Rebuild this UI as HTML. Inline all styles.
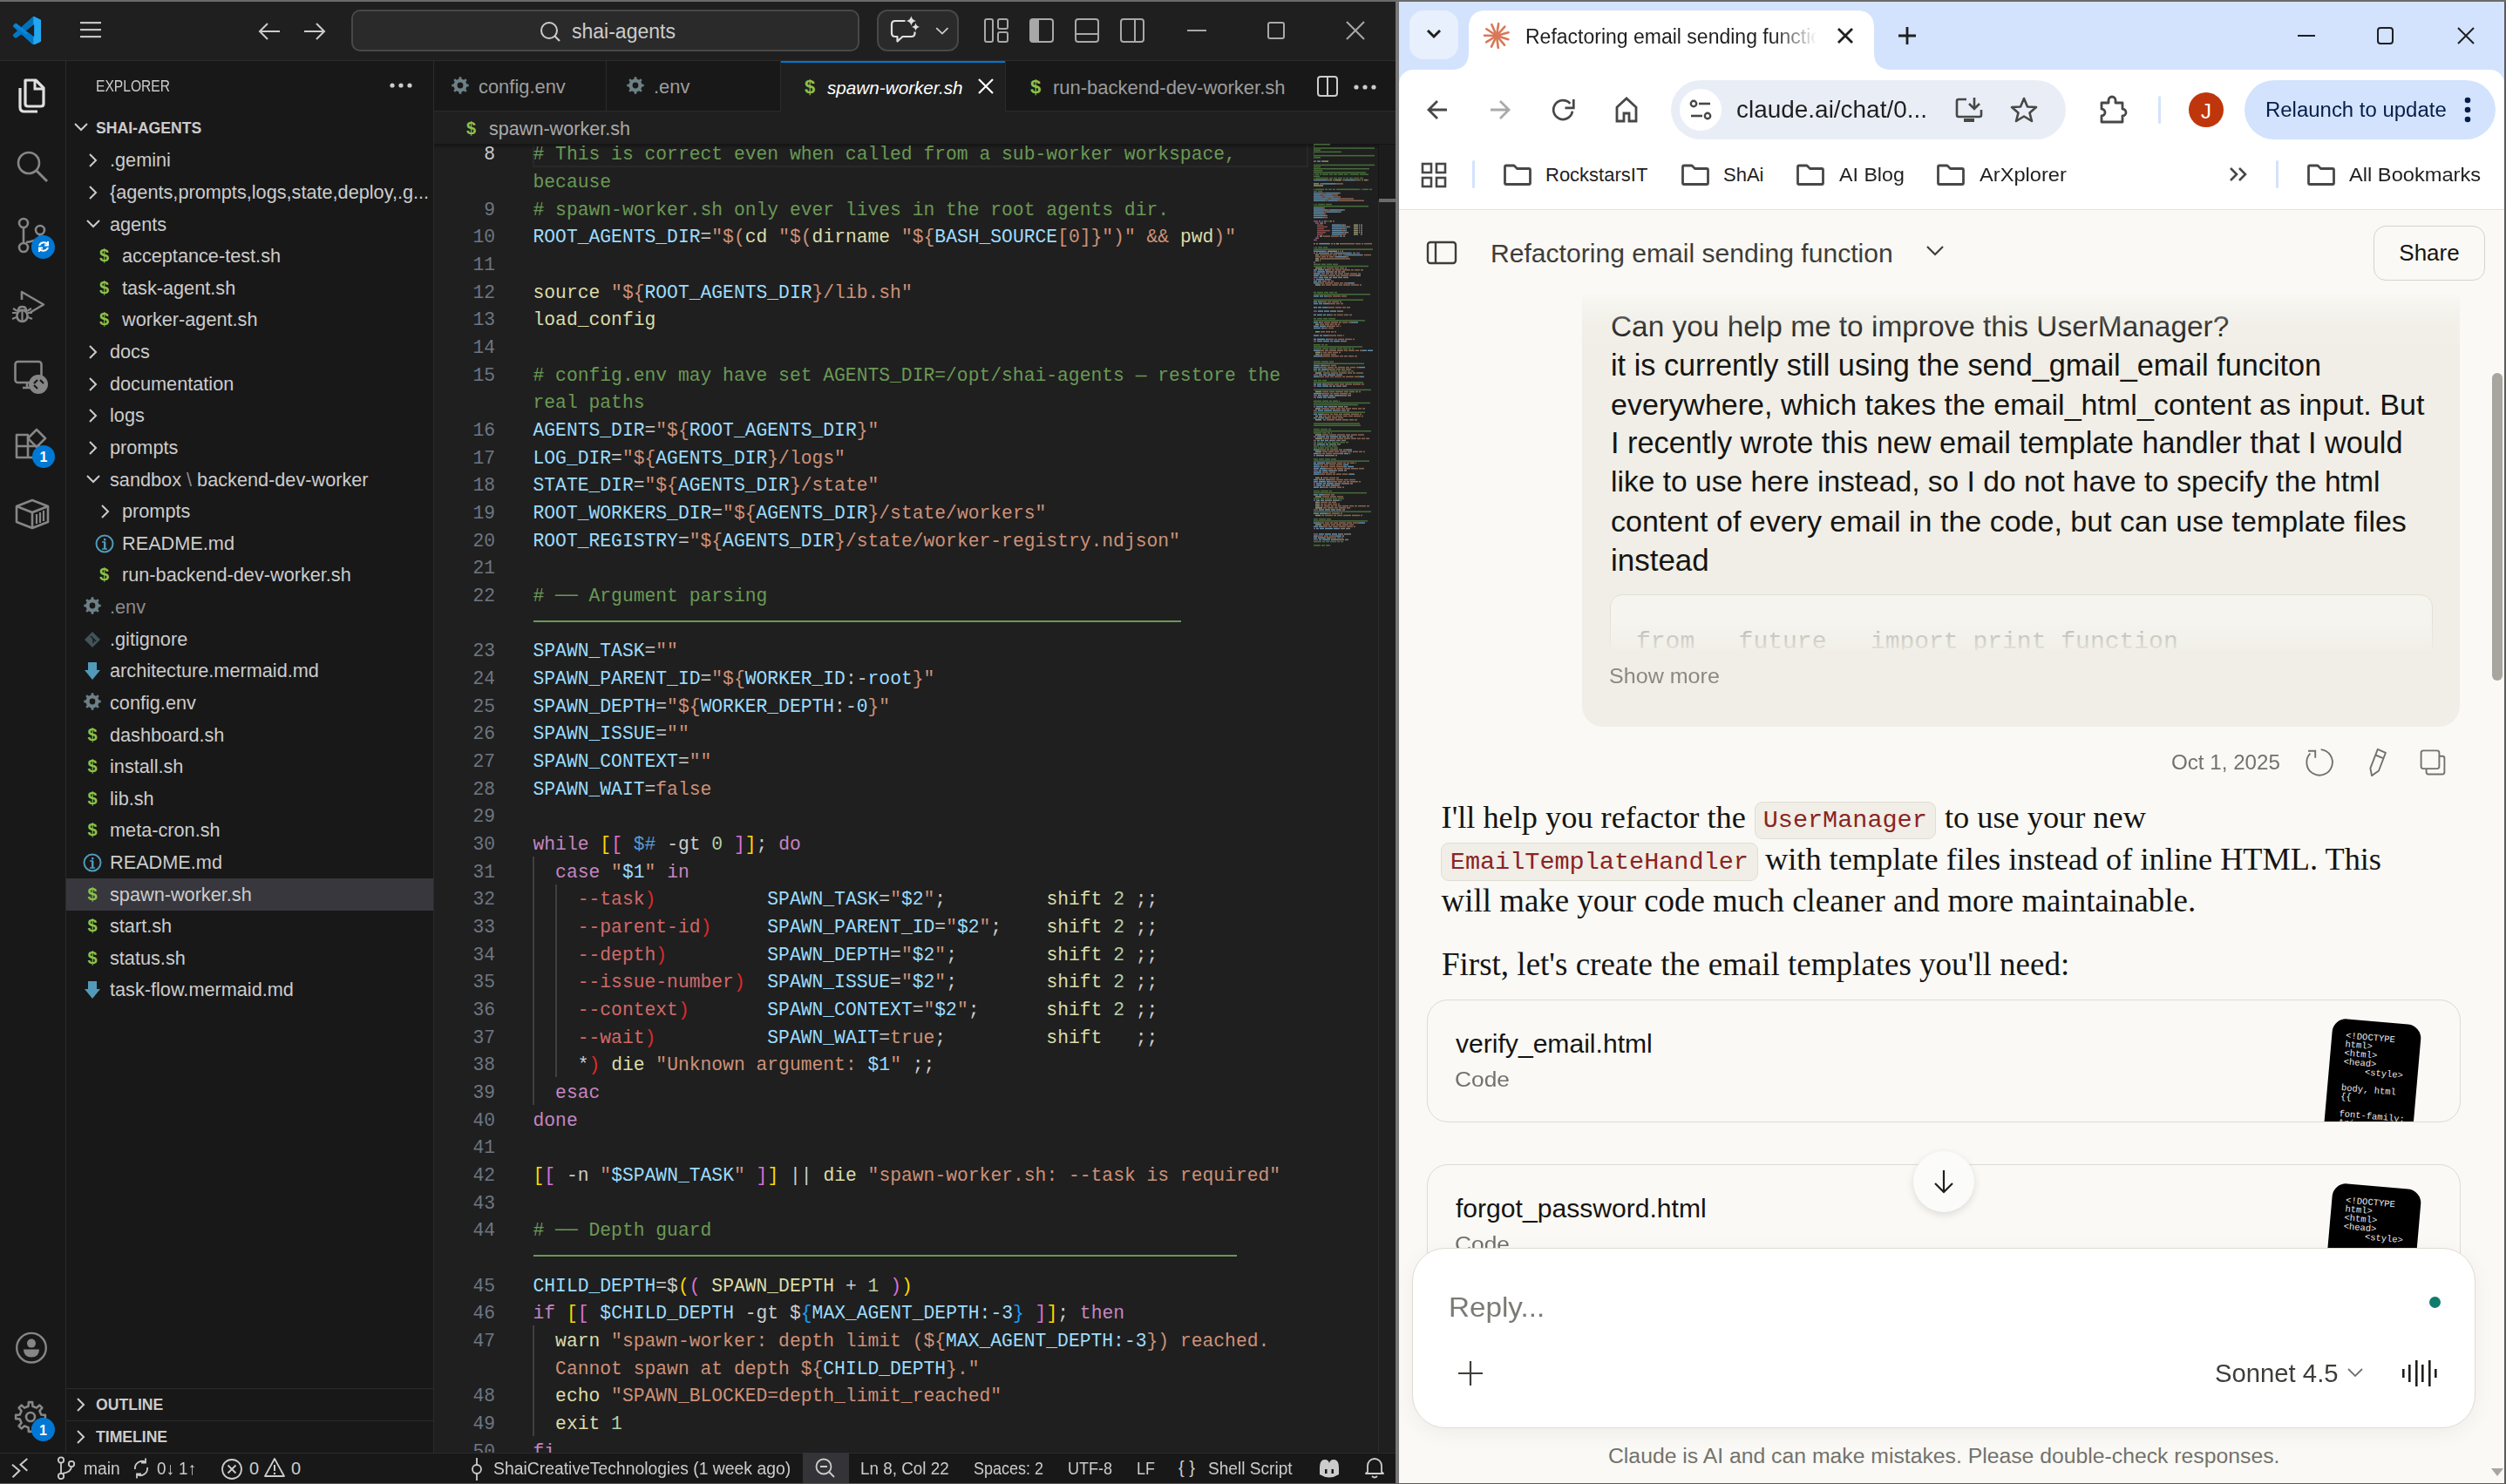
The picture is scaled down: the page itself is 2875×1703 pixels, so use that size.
<!DOCTYPE html><html><head><meta charset="utf-8"><style>
html,body{margin:0;padding:0;width:2875px;height:1703px;overflow:hidden;background:#5b5b5b;}
body{position:relative;font-family:'Liberation Sans',sans-serif;}
div,svg{box-sizing:border-box;}
</style></head><body>
<div style="position:absolute;left:0px;top:2px;width:1601px;height:1700px;background:#181818"></div>
<div style="position:absolute;left:0px;top:2px;width:1601px;height:67px;background:#1f1f1f"></div>
<div style="position:absolute;left:0px;top:69px;width:1601px;height:1px;background:#2b2b2b"></div>
<svg style="position:absolute;left:14.8px;top:18.6px" width="32.4" height="32.4" viewBox="0 0 100 100"><defs><clipPath id="vsc"><path clip-rule="evenodd" d="M70.9 99.3C72.5 99.9 74.3 99.9 75.9 99.1L96.5 89.2C98.6 88.2 100 86 100 83.6V16.4C100 14 98.6 11.8 96.5 10.8L75.9 0.9C73.8-0.1 71.3 0.1 69.5 1.4C69.3 1.6 69 1.8 68.8 2.1L29.4 38L12.2 25C10.6 23.8 8.4 23.9 6.9 25.2L1.4 30.3C-0.5 31.9-0.5 34.8 1.4 36.4L16.2 50L1.4 63.6C-0.5 65.2-0.5 68.1 1.4 69.7L6.9 74.8C8.4 76.1 10.6 76.2 12.2 75L29.4 62L68.8 97.9C69.4 98.5 70.1 99 70.9 99.3ZM75 27.3L45.1 50L75 72.7V27.3Z"/></clipPath></defs><g clip-path="url(#vsc)"><rect width="100" height="100" fill="#0a85d9"/><path d="M0 100 L0 30 L45 64 L75 40 L75 100 Z" fill="#0078c8"/><path d="M0 0 H75 V27 L45 50 L30 38 L12 25 L0 33 Z" fill="#0071b8"/><path d="M72 0 H100 V100 H72 Z" fill="#22a7f0"/></g></svg>
<svg style="position:absolute;left:91px;top:23px;" width="26" height="22" viewBox="0 0 26 22" fill="none"><rect x="1" y="2" width="24" height="2.2" fill="#c4c4c4"/><rect x="1" y="10" width="24" height="2.2" fill="#c4c4c4"/><rect x="1" y="18" width="24" height="2.2" fill="#c4c4c4"/></svg>
<svg style="position:absolute;left:295px;top:24px;" width="28" height="24" viewBox="0 0 28 24" fill="none"><path d="M26 12 H3 M12 3 L3 12 L12 21" stroke="#cccccc" stroke-width="2"/></svg>
<svg style="position:absolute;left:347px;top:24px;" width="28" height="24" viewBox="0 0 28 24" fill="none"><path d="M2 12 H25 M16 3 L25 12 L16 21" stroke="#cccccc" stroke-width="2"/></svg>
<div style="position:absolute;left:403px;top:11px;width:583px;height:48px;background:#2a2a2a;border:2px solid #484848;border-radius:10px"></div>
<svg style="position:absolute;left:617px;top:24px;" width="26" height="26" viewBox="0 0 26 26" fill="none"><circle cx="13" cy="11" r="9" stroke="#cccccc" stroke-width="2"/><path d="M19.5 17.5 L25 23" stroke="#cccccc" stroke-width="2.2"/></svg>
<div style="position:absolute;left:656px;top:21.0px;height:30px;line-height:30px;font-family:'Liberation Sans',sans-serif;font-size:23px;color:#cccccc;white-space:pre;">shai-agents</div>
<div style="position:absolute;left:1006px;top:11px;width:94px;height:48px;background:#2a2a2a;border:2px solid #484848;border-radius:12px"></div>
<svg style="position:absolute;left:1000px;top:5px;" width="110" height="60" viewBox="0 0 110 60" fill="none"><path d="M38.5 19 H27 Q23 19 23 23 V33 Q23 37 27 37 H29.5 V42.5 L35.5 37 H45.5 Q49.5 37 49.5 33 V31.5" stroke="#e0e0e0" stroke-width="2.2" stroke-linejoin="round"/><path d="M45.4 13.299999999999999 Q46.184 18.116 51.0 18.9 Q46.184 19.683999999999997 45.4 24.5 Q44.616 19.683999999999997 39.8 18.9 Q44.616 18.116 45.4 13.299999999999999 Z" fill="#e0e0e0"/><path d="M50.5 21.299999999999997 Q51.144 25.256 55.1 25.9 Q51.144 26.543999999999997 50.5 30.5 Q49.856 26.543999999999997 45.9 25.9 Q49.856 25.256 50.5 21.299999999999997 Z" fill="#e0e0e0"/><path d="M74.2 27.2 L81 33.6 L87.5 27.2" stroke="#cccccc" stroke-width="1.8"/></svg>
<svg style="position:absolute;left:1128px;top:20px;" width="30" height="30" viewBox="0 0 30 30" fill="none"><rect x="2" y="2" width="9" height="26" rx="2" stroke="#a8a8a8" stroke-width="2"/><rect x="17" y="2" width="11" height="11" rx="2" stroke="#a8a8a8" stroke-width="2"/><rect x="17" y="17" width="11" height="11" rx="2" stroke="#a8a8a8" stroke-width="2"/></svg>
<svg style="position:absolute;left:1180px;top:20px;" width="30" height="30" viewBox="0 0 30 30" fill="none"><rect x="2" y="2" width="26" height="26" rx="3" stroke="#a8a8a8" stroke-width="2"/><path d="M3 3 H12 V27 H3 Z" fill="#a8a8a8"/></svg>
<svg style="position:absolute;left:1232px;top:20px;" width="30" height="30" viewBox="0 0 30 30" fill="none"><rect x="2" y="2" width="26" height="26" rx="3" stroke="#a8a8a8" stroke-width="2"/><path d="M2 19 H28" stroke="#a8a8a8" stroke-width="2"/></svg>
<svg style="position:absolute;left:1284px;top:20px;" width="30" height="30" viewBox="0 0 30 30" fill="none"><rect x="2" y="2" width="26" height="26" rx="3" stroke="#a8a8a8" stroke-width="2"/><path d="M18 2 V28" stroke="#a8a8a8" stroke-width="2"/></svg>
<div style="position:absolute;left:1362px;top:34px;width:22px;height:2px;background:#a8a8a8"></div>
<div style="position:absolute;left:1454px;top:25px;width:20px;height:20px;border:2px solid #a8a8a8;border-radius:3px"></div>
<svg style="position:absolute;left:1543px;top:23px;" width="24" height="24" viewBox="0 0 24 24" fill="none"><path d="M2 2 L22 22 M22 2 L2 22" stroke="#a8a8a8" stroke-width="2"/></svg>
<div style="position:absolute;left:75px;top:70px;width:1px;height:1597px;background:#2b2b2b"></div>
<svg style="position:absolute;left:16px;top:88px;" width="40" height="44" viewBox="0 0 40 44" fill="none"><path d="M13 4 H25 L34 13 V31 Q34 34 31 34 H16 Q13 34 13 31 Z" stroke="#e0e0e0" stroke-width="3.2" stroke-linejoin="round"/><path d="M24 4 V14 H34" stroke="#e0e0e0" stroke-width="3"/><path d="M7 13 V35 Q7 40 12 40 H27" stroke="#e0e0e0" stroke-width="3.2"/></svg>
<svg style="position:absolute;left:16px;top:170px;" width="42" height="42" viewBox="0 0 42 42" fill="none"><circle cx="17" cy="17" r="12" stroke="#868686" stroke-width="2.6"/><path d="M26 26 L38 38" stroke="#868686" stroke-width="3"/></svg>
<svg style="position:absolute;left:16px;top:248px;" width="42" height="44" viewBox="0 0 42 44" fill="none"><circle cx="11" cy="8" r="5" stroke="#868686" stroke-width="2.6"/><circle cx="11" cy="36" r="5" stroke="#868686" stroke-width="2.6"/><circle cx="30" cy="16" r="5" stroke="#868686" stroke-width="2.6"/><path d="M11 13 V31 M30 21 Q30 28 14 30" stroke="#868686" stroke-width="2.6"/></svg>
<div style="position:absolute;left:36px;top:269.5px;width:27px;height:27px;background:#0078d4;border-radius:50%"></div>
<svg style="position:absolute;left:40.5px;top:274px;" width="18" height="18" viewBox="0 0 18 18" fill="none"><path d="M4 8 A5.5 5.5 0 0 1 14 7 M14 10 A5.5 5.5 0 0 1 4 11" stroke="#fff" stroke-width="2"/><path d="M14 3 V7.5 H10" stroke="#fff" stroke-width="2"/><path d="M4 15 V10.5 H8" stroke="#fff" stroke-width="2"/></svg>
<svg style="position:absolute;left:12px;top:330px;" width="46" height="46" viewBox="0 0 46 46" fill="none"><path d="M13 14 V5 L38 19.5 L22 29" stroke="#868686" stroke-width="2.6" stroke-linejoin="round"/><path d="M9 26 Q9 22 13.5 22 Q18 22 18 26 Z" stroke="#868686" stroke-width="2.4"/><rect x="7.5" y="26" width="12" height="13" rx="6" stroke="#868686" stroke-width="2.6"/><path d="M2 29 H7 M20 29 H25 M2 36 L7 34 M25 36 L20 34 M3 24 L8 27 M24 24 L19 27 M13.5 27 V38" stroke="#868686" stroke-width="2.2"/></svg>
<svg style="position:absolute;left:16px;top:412px;" width="42" height="42" viewBox="0 0 42 42" fill="none"><rect x="1.5" y="3" width="30" height="24" rx="3" stroke="#868686" stroke-width="2.6"/><path d="M10 33 H20 M15 27 V33" stroke="#868686" stroke-width="2.6"/><circle cx="28" cy="29" r="11" fill="#868686"/><path d="M23 28 L27 24 M23 30 L27 34 M34 28 L30 24" stroke="#181818" stroke-width="2.2"/></svg>
<svg style="position:absolute;left:16px;top:490px;" width="42" height="42" viewBox="0 0 42 42" fill="none"><path d="M3 9 H16 V35 H3 Z M3 22 H29 V35 H16" stroke="#868686" stroke-width="2.6" stroke-linejoin="round"/><path d="M26 3 L36 13 L26 23 L16 13 Z" stroke="#868686" stroke-width="2.6" stroke-linejoin="round"/></svg>
<div style="position:absolute;left:37px;top:511px;width:26px;height:26px;background:#0078d4;border-radius:50%"></div>
<div style="position:absolute;left:37px;top:513.5px;height:21px;line-height:21px;font-family:'Liberation Sans',sans-serif;font-size:16px;color:#ffffff;white-space:pre;width:26px;text-align:center"><b>1</b></div>
<svg style="position:absolute;left:16px;top:571px;" width="42" height="38" viewBox="0 0 42 38" fill="none"><path d="M3 10 L21 3 L39 10 V28 L21 35 L3 28 Z" stroke="#868686" stroke-width="2.6" stroke-linejoin="round"/><path d="M3 10 L21 17 L39 10 M21 17 V35" stroke="#868686" stroke-width="2.6"/><path d="M26 19 V30 M30 17 V29 M34 15 V27" stroke="#868686" stroke-width="2.2"/></svg>
<svg style="position:absolute;left:16px;top:1527px;" width="40" height="40" viewBox="0 0 40 40" fill="none"><circle cx="20" cy="19.7" r="16.8" stroke="#868686" stroke-width="2.4"/><circle cx="20" cy="14.6" r="5" fill="#868686"/><path d="M11 21.5 H29 Q29 30.5 20 30.5 Q11 30.5 11 21.5 Z" fill="#868686"/></svg>
<svg style="position:absolute;left:16px;top:1607px;" width="42" height="42" viewBox="0 0 42 42" fill="none"><polygon points="16.56,6.74 16.87,2.13 21.13,2.13 21.44,6.74 25.94,8.61 29.42,5.57 32.43,8.58 29.39,12.06 31.26,16.56 35.87,16.87 35.87,21.13 31.26,21.44 29.39,25.94 32.43,29.42 29.42,32.43 25.94,29.39 21.44,31.26 21.13,35.87 16.87,35.87 16.56,31.26 12.06,29.39 8.58,32.43 5.57,29.42 8.61,25.94 6.74,21.44 2.13,21.13 2.13,16.87 6.74,16.56 8.61,12.06 5.57,8.58 8.58,5.57 12.06,8.61" stroke="#868686" stroke-width="2.6" stroke-linejoin="round"/><circle cx="19" cy="19" r="5" stroke="#868686" stroke-width="2.6"/></svg>
<div style="position:absolute;left:36px;top:1627px;width:27px;height:27px;background:#0078d4;border-radius:50%"></div>
<div style="position:absolute;left:36px;top:1630.5px;height:21px;line-height:21px;font-family:'Liberation Sans',sans-serif;font-size:16px;color:#ffffff;white-space:pre;width:27px;text-align:center"><b>1</b></div>
<div style="position:absolute;left:497px;top:70px;width:1px;height:1597px;background:#2b2b2b"></div>
<div style="position:absolute;left:110px;top:89.0px;height:20px;line-height:20px;font-family:'Liberation Sans',sans-serif;font-size:15.6px;color:#cccccc;white-space:pre;transform:scaleY(1.15);transform-origin:0 50%">EXPLORER</div>
<svg style="position:absolute;left:446px;top:93px;" width="28" height="10" viewBox="0 0 28 10" fill="none"><circle cx="4" cy="5" r="2.6" fill="#cccccc"/><circle cx="14" cy="5" r="2.6" fill="#cccccc"/><circle cx="24" cy="5" r="2.6" fill="#cccccc"/></svg>
<svg style="position:absolute;left:84px;top:140px;" width="18" height="12" viewBox="0 0 18 12" fill="none"><path d="M2 2 L9 9 L16 2" stroke="#cccccc" stroke-width="2"/></svg>
<div style="position:absolute;left:110px;top:135.5px;height:23px;line-height:23px;font-family:'Liberation Sans',sans-serif;font-size:17.6px;color:#cccccc;white-space:pre;"><b>SHAI-AGENTS</b></div>
<svg style="position:absolute;left:101px;top:175.3px;" width="12" height="18" viewBox="0 0 12 18" fill="none"><path d="M2 2 L9 9 L2 16" stroke="#cccccc" stroke-width="2"/></svg>
<div style="position:absolute;left:126px;top:170.3px;height:28px;line-height:28px;font-family:'Liberation Sans',sans-serif;font-size:21.7px;color:#cccccc;white-space:pre;">.gemini</div>
<svg style="position:absolute;left:101px;top:211.92000000000002px;" width="12" height="18" viewBox="0 0 12 18" fill="none"><path d="M2 2 L9 9 L2 16" stroke="#cccccc" stroke-width="2"/></svg>
<div style="position:absolute;left:126px;top:206.9px;height:28px;line-height:28px;font-family:'Liberation Sans',sans-serif;font-size:21.7px;color:#cccccc;white-space:pre;">{agents,prompts,logs,state,deploy,.g...</div>
<svg style="position:absolute;left:98px;top:250.54000000000002px;" width="18" height="12" viewBox="0 0 18 12" fill="none"><path d="M2 2 L9 9 L16 2" stroke="#cccccc" stroke-width="2"/></svg>
<div style="position:absolute;left:126px;top:243.5px;height:28px;line-height:28px;font-family:'Liberation Sans',sans-serif;font-size:21.7px;color:#cccccc;white-space:pre;">agents</div>
<div style="position:absolute;left:114.0px;top:280.2px;height:26px;line-height:26px;font-family:'Liberation Sans',sans-serif;font-size:20px;color:#8dc149;white-space:pre;"><b>$</b></div>
<div style="position:absolute;left:140px;top:280.2px;height:28px;line-height:28px;font-family:'Liberation Sans',sans-serif;font-size:21.7px;color:#cccccc;white-space:pre;">acceptance-test.sh</div>
<div style="position:absolute;left:114.0px;top:316.8px;height:26px;line-height:26px;font-family:'Liberation Sans',sans-serif;font-size:20px;color:#8dc149;white-space:pre;"><b>$</b></div>
<div style="position:absolute;left:140px;top:316.8px;height:28px;line-height:28px;font-family:'Liberation Sans',sans-serif;font-size:21.7px;color:#cccccc;white-space:pre;">task-agent.sh</div>
<div style="position:absolute;left:114.0px;top:353.4px;height:26px;line-height:26px;font-family:'Liberation Sans',sans-serif;font-size:20px;color:#8dc149;white-space:pre;"><b>$</b></div>
<div style="position:absolute;left:140px;top:353.4px;height:28px;line-height:28px;font-family:'Liberation Sans',sans-serif;font-size:21.7px;color:#cccccc;white-space:pre;">worker-agent.sh</div>
<svg style="position:absolute;left:101px;top:395.02px;" width="12" height="18" viewBox="0 0 12 18" fill="none"><path d="M2 2 L9 9 L2 16" stroke="#cccccc" stroke-width="2"/></svg>
<div style="position:absolute;left:126px;top:390.0px;height:28px;line-height:28px;font-family:'Liberation Sans',sans-serif;font-size:21.7px;color:#cccccc;white-space:pre;">docs</div>
<svg style="position:absolute;left:101px;top:431.64px;" width="12" height="18" viewBox="0 0 12 18" fill="none"><path d="M2 2 L9 9 L2 16" stroke="#cccccc" stroke-width="2"/></svg>
<div style="position:absolute;left:126px;top:426.6px;height:28px;line-height:28px;font-family:'Liberation Sans',sans-serif;font-size:21.7px;color:#cccccc;white-space:pre;">documentation</div>
<svg style="position:absolute;left:101px;top:468.26px;" width="12" height="18" viewBox="0 0 12 18" fill="none"><path d="M2 2 L9 9 L2 16" stroke="#cccccc" stroke-width="2"/></svg>
<div style="position:absolute;left:126px;top:463.3px;height:28px;line-height:28px;font-family:'Liberation Sans',sans-serif;font-size:21.7px;color:#cccccc;white-space:pre;">logs</div>
<svg style="position:absolute;left:101px;top:504.88px;" width="12" height="18" viewBox="0 0 12 18" fill="none"><path d="M2 2 L9 9 L2 16" stroke="#cccccc" stroke-width="2"/></svg>
<div style="position:absolute;left:126px;top:499.9px;height:28px;line-height:28px;font-family:'Liberation Sans',sans-serif;font-size:21.7px;color:#cccccc;white-space:pre;">prompts</div>
<svg style="position:absolute;left:98px;top:543.5px;" width="18" height="12" viewBox="0 0 18 12" fill="none"><path d="M2 2 L9 9 L16 2" stroke="#cccccc" stroke-width="2"/></svg>
<div style="position:absolute;left:126px;top:536.5px;height:28px;line-height:28px;font-family:'Liberation Sans',sans-serif;font-size:21.7px;color:#cccccc;white-space:pre;">sandbox<span style="color:#8b8b8b"> \ </span>backend-dev-worker</div>
<svg style="position:absolute;left:115px;top:578.12px;" width="12" height="18" viewBox="0 0 12 18" fill="none"><path d="M2 2 L9 9 L2 16" stroke="#cccccc" stroke-width="2"/></svg>
<div style="position:absolute;left:140px;top:573.1px;height:28px;line-height:28px;font-family:'Liberation Sans',sans-serif;font-size:21.7px;color:#cccccc;white-space:pre;">prompts</div>
<svg style="position:absolute;left:108.5px;top:612.74px;" width="22" height="22" viewBox="0 0 22 22" fill="none"><circle cx="11" cy="11" r="9.5" stroke="#519aba" stroke-width="2"/><rect x="10" y="9" width="2.4" height="8" fill="#519aba"/><rect x="10" y="5" width="2.4" height="2.4" fill="#519aba"/><path d="M8 9 H12 M8 17 H14" stroke="#519aba" stroke-width="1.5"/></svg>
<div style="position:absolute;left:140px;top:609.7px;height:28px;line-height:28px;font-family:'Liberation Sans',sans-serif;font-size:21.7px;color:#cccccc;white-space:pre;">README.md</div>
<div style="position:absolute;left:114.0px;top:646.4px;height:26px;line-height:26px;font-family:'Liberation Sans',sans-serif;font-size:20px;color:#8dc149;white-space:pre;"><b>$</b></div>
<div style="position:absolute;left:140px;top:646.4px;height:28px;line-height:28px;font-family:'Liberation Sans',sans-serif;font-size:21.7px;color:#cccccc;white-space:pre;">run-backend-dev-worker.sh</div>
<svg style="position:absolute;left:96px;top:685.48px;" width="20" height="20" viewBox="0 0 20 20" fill="none"><polygon points="8.52,2.55 8.77,0.28 11.23,0.28 11.48,2.55 14.22,3.68 16.01,2.26 17.74,3.99 16.32,5.78 17.45,8.52 19.72,8.77 19.72,11.23 17.45,11.48 16.32,14.22 17.74,16.01 16.01,17.74 14.22,16.32 11.48,17.45 11.23,19.72 8.77,19.72 8.52,17.45 5.78,16.32 3.99,17.74 2.26,16.01 3.68,14.22 2.55,11.48 0.28,11.23 0.28,8.77 2.55,8.52 3.68,5.78 2.26,3.99 3.99,2.26 5.78,3.68" fill="#6d8086"/><circle cx="10" cy="10" r="3.4" fill="#181818"/></svg>
<div style="position:absolute;left:126px;top:683.0px;height:28px;line-height:28px;font-family:'Liberation Sans',sans-serif;font-size:21.7px;color:#8b8b8b;white-space:pre;">.env</div>
<svg style="position:absolute;left:96px;top:723.5999999999999px;" width="20" height="20" viewBox="0 0 20 20" fill="none"><path d="M10 1 L19 10 L10 19 L1 10 Z" fill="#41535b"/><path d="M8 6 L11 9 V14 M11 9 L14 12" stroke="#181818" stroke-width="1.4"/></svg>
<div style="position:absolute;left:126px;top:719.6px;height:28px;line-height:28px;font-family:'Liberation Sans',sans-serif;font-size:21.7px;color:#cccccc;white-space:pre;">.gitignore</div>
<svg style="position:absolute;left:96px;top:759.22px;" width="20" height="22" viewBox="0 0 20 22" fill="none"><path d="M5 1 H15 V10 H19 L10 21 L1 10 H5 Z" fill="#519aba"/></svg>
<div style="position:absolute;left:126px;top:756.2px;height:28px;line-height:28px;font-family:'Liberation Sans',sans-serif;font-size:21.7px;color:#cccccc;white-space:pre;">architecture.mermaid.md</div>
<svg style="position:absolute;left:96px;top:795.3399999999999px;" width="20" height="20" viewBox="0 0 20 20" fill="none"><polygon points="8.52,2.55 8.77,0.28 11.23,0.28 11.48,2.55 14.22,3.68 16.01,2.26 17.74,3.99 16.32,5.78 17.45,8.52 19.72,8.77 19.72,11.23 17.45,11.48 16.32,14.22 17.74,16.01 16.01,17.74 14.22,16.32 11.48,17.45 11.23,19.72 8.77,19.72 8.52,17.45 5.78,16.32 3.99,17.74 2.26,16.01 3.68,14.22 2.55,11.48 0.28,11.23 0.28,8.77 2.55,8.52 3.68,5.78 2.26,3.99 3.99,2.26 5.78,3.68" fill="#6d8086"/><circle cx="10" cy="10" r="3.4" fill="#181818"/></svg>
<div style="position:absolute;left:126px;top:792.8px;height:28px;line-height:28px;font-family:'Liberation Sans',sans-serif;font-size:21.7px;color:#cccccc;white-space:pre;">config.env</div>
<div style="position:absolute;left:100.5px;top:829.5px;height:26px;line-height:26px;font-family:'Liberation Sans',sans-serif;font-size:20px;color:#8dc149;white-space:pre;"><b>$</b></div>
<div style="position:absolute;left:126px;top:829.5px;height:28px;line-height:28px;font-family:'Liberation Sans',sans-serif;font-size:21.7px;color:#cccccc;white-space:pre;">dashboard.sh</div>
<div style="position:absolute;left:100.5px;top:866.1px;height:26px;line-height:26px;font-family:'Liberation Sans',sans-serif;font-size:20px;color:#8dc149;white-space:pre;"><b>$</b></div>
<div style="position:absolute;left:126px;top:866.1px;height:28px;line-height:28px;font-family:'Liberation Sans',sans-serif;font-size:21.7px;color:#cccccc;white-space:pre;">install.sh</div>
<div style="position:absolute;left:100.5px;top:902.7px;height:26px;line-height:26px;font-family:'Liberation Sans',sans-serif;font-size:20px;color:#8dc149;white-space:pre;"><b>$</b></div>
<div style="position:absolute;left:126px;top:902.7px;height:28px;line-height:28px;font-family:'Liberation Sans',sans-serif;font-size:21.7px;color:#cccccc;white-space:pre;">lib.sh</div>
<div style="position:absolute;left:100.5px;top:939.3px;height:26px;line-height:26px;font-family:'Liberation Sans',sans-serif;font-size:20px;color:#8dc149;white-space:pre;"><b>$</b></div>
<div style="position:absolute;left:126px;top:939.3px;height:28px;line-height:28px;font-family:'Liberation Sans',sans-serif;font-size:21.7px;color:#cccccc;white-space:pre;">meta-cron.sh</div>
<svg style="position:absolute;left:95px;top:978.94px;" width="22" height="22" viewBox="0 0 22 22" fill="none"><circle cx="11" cy="11" r="9.5" stroke="#519aba" stroke-width="2"/><rect x="10" y="9" width="2.4" height="8" fill="#519aba"/><rect x="10" y="5" width="2.4" height="2.4" fill="#519aba"/><path d="M8 9 H12 M8 17 H14" stroke="#519aba" stroke-width="1.5"/></svg>
<div style="position:absolute;left:126px;top:975.9px;height:28px;line-height:28px;font-family:'Liberation Sans',sans-serif;font-size:21.7px;color:#cccccc;white-space:pre;">README.md</div>
<div style="position:absolute;left:76px;top:1008.25px;width:421px;height:36.62px;background:#37373d"></div>
<div style="position:absolute;left:100.5px;top:1012.6px;height:26px;line-height:26px;font-family:'Liberation Sans',sans-serif;font-size:20px;color:#8dc149;white-space:pre;"><b>$</b></div>
<div style="position:absolute;left:126px;top:1012.6px;height:28px;line-height:28px;font-family:'Liberation Sans',sans-serif;font-size:21.7px;color:#cccccc;white-space:pre;">spawn-worker.sh</div>
<div style="position:absolute;left:100.5px;top:1049.2px;height:26px;line-height:26px;font-family:'Liberation Sans',sans-serif;font-size:20px;color:#8dc149;white-space:pre;"><b>$</b></div>
<div style="position:absolute;left:126px;top:1049.2px;height:28px;line-height:28px;font-family:'Liberation Sans',sans-serif;font-size:21.7px;color:#cccccc;white-space:pre;">start.sh</div>
<div style="position:absolute;left:100.5px;top:1085.8px;height:26px;line-height:26px;font-family:'Liberation Sans',sans-serif;font-size:20px;color:#8dc149;white-space:pre;"><b>$</b></div>
<div style="position:absolute;left:126px;top:1085.8px;height:28px;line-height:28px;font-family:'Liberation Sans',sans-serif;font-size:21.7px;color:#cccccc;white-space:pre;">status.sh</div>
<svg style="position:absolute;left:96px;top:1125.4199999999998px;" width="20" height="22" viewBox="0 0 20 22" fill="none"><path d="M5 1 H15 V10 H19 L10 21 L1 10 H5 Z" fill="#519aba"/></svg>
<div style="position:absolute;left:126px;top:1122.4px;height:28px;line-height:28px;font-family:'Liberation Sans',sans-serif;font-size:21.7px;color:#cccccc;white-space:pre;">task-flow.mermaid.md</div>
<div style="position:absolute;left:76px;top:1593px;width:421px;height:1px;background:#2b2b2b"></div>
<div style="position:absolute;left:76px;top:1630px;width:421px;height:1px;background:#2b2b2b"></div>
<svg style="position:absolute;left:87px;top:1603px;" width="12" height="18" viewBox="0 0 12 18" fill="none"><path d="M2 2 L9 9 L2 16" stroke="#cccccc" stroke-width="2"/></svg>
<div style="position:absolute;left:110px;top:1600.5px;height:23px;line-height:23px;font-family:'Liberation Sans',sans-serif;font-size:17.6px;color:#cccccc;white-space:pre;"><b>OUTLINE</b></div>
<svg style="position:absolute;left:87px;top:1640px;" width="12" height="18" viewBox="0 0 12 18" fill="none"><path d="M2 2 L9 9 L2 16" stroke="#cccccc" stroke-width="2"/></svg>
<div style="position:absolute;left:110px;top:1637.5px;height:23px;line-height:23px;font-family:'Liberation Sans',sans-serif;font-size:17.6px;color:#cccccc;white-space:pre;"><b>TIMELINE</b></div>
<div style="position:absolute;left:498px;top:70px;width:1103px;height:1597px;background:#1f1f1f"></div>
<div style="position:absolute;left:498px;top:70px;width:1103px;height:57px;background:#181818"></div>
<div style="position:absolute;left:498px;top:127px;width:1103px;height:1px;background:#2b2b2b"></div>
<div style="position:absolute;left:695px;top:70px;width:1px;height:57px;background:#2b2b2b"></div>
<div style="position:absolute;left:895px;top:70px;width:1px;height:57px;background:#2b2b2b"></div>
<div style="position:absolute;left:1153px;top:70px;width:1px;height:57px;background:#2b2b2b"></div>
<div style="position:absolute;left:896px;top:70px;width:257px;height:58px;background:#1f1f1f"></div>
<div style="position:absolute;left:896px;top:70px;width:257px;height:2px;background:#0078d4"></div>
<svg style="position:absolute;left:518px;top:88px;" width="20" height="20" viewBox="0 0 20 20" fill="none"><polygon points="8.52,2.55 8.77,0.28 11.23,0.28 11.48,2.55 14.22,3.68 16.01,2.26 17.74,3.99 16.32,5.78 17.45,8.52 19.72,8.77 19.72,11.23 17.45,11.48 16.32,14.22 17.74,16.01 16.01,17.74 14.22,16.32 11.48,17.45 11.23,19.72 8.77,19.72 8.52,17.45 5.78,16.32 3.99,17.74 2.26,16.01 3.68,14.22 2.55,11.48 0.28,11.23 0.28,8.77 2.55,8.52 3.68,5.78 2.26,3.99 3.99,2.26 5.78,3.68" fill="#6d8086"/><circle cx="10" cy="10" r="3.4" fill="#181818"/></svg>
<div style="position:absolute;left:549px;top:86.0px;height:28px;line-height:28px;font-family:'Liberation Sans',sans-serif;font-size:21.9px;color:#9d9d9d;white-space:pre;">config.env</div>
<svg style="position:absolute;left:719px;top:88px;" width="20" height="20" viewBox="0 0 20 20" fill="none"><polygon points="8.52,2.55 8.77,0.28 11.23,0.28 11.48,2.55 14.22,3.68 16.01,2.26 17.74,3.99 16.32,5.78 17.45,8.52 19.72,8.77 19.72,11.23 17.45,11.48 16.32,14.22 17.74,16.01 16.01,17.74 14.22,16.32 11.48,17.45 11.23,19.72 8.77,19.72 8.52,17.45 5.78,16.32 3.99,17.74 2.26,16.01 3.68,14.22 2.55,11.48 0.28,11.23 0.28,8.77 2.55,8.52 3.68,5.78 2.26,3.99 3.99,2.26 5.78,3.68" fill="#6d8086"/><circle cx="10" cy="10" r="3.4" fill="#181818"/></svg>
<div style="position:absolute;left:750px;top:86.0px;height:28px;line-height:28px;font-family:'Liberation Sans',sans-serif;font-size:21.9px;color:#9d9d9d;white-space:pre;">.env</div>
<div style="position:absolute;left:923px;top:84.5px;height:29px;line-height:29px;font-family:'Liberation Sans',sans-serif;font-size:22px;color:#8dc149;white-space:pre;"><b>$</b></div>
<div style="position:absolute;left:949px;top:86.5px;height:27px;line-height:27px;font-family:'Liberation Sans',sans-serif;font-size:20.7px;color:#ffffff;white-space:pre;font-style:italic">spawn-worker.sh</div>
<svg style="position:absolute;left:1120px;top:88px;" width="22" height="22" viewBox="0 0 22 22" fill="none"><path d="M3 3 L19 19 M19 3 L3 19" stroke="#ffffff" stroke-width="2.2"/></svg>
<div style="position:absolute;left:1182px;top:84.5px;height:29px;line-height:29px;font-family:'Liberation Sans',sans-serif;font-size:22px;color:#8dc149;white-space:pre;"><b>$</b></div>
<div style="position:absolute;left:1208px;top:85.5px;height:29px;line-height:29px;font-family:'Liberation Sans',sans-serif;font-size:22px;color:#9d9d9d;white-space:pre;">run-backend-dev-worker.sh</div>
<svg style="position:absolute;left:1510px;top:86px;" width="26" height="26" viewBox="0 0 26 26" fill="none"><rect x="2" y="2" width="22" height="22" rx="3" stroke="#cccccc" stroke-width="2"/><path d="M13 2 V24" stroke="#cccccc" stroke-width="2"/></svg>
<svg style="position:absolute;left:1552px;top:95px;" width="28" height="10" viewBox="0 0 28 10" fill="none"><circle cx="4" cy="5" r="2.6" fill="#cccccc"/><circle cx="14" cy="5" r="2.6" fill="#cccccc"/><circle cx="24" cy="5" r="2.6" fill="#cccccc"/></svg>
<div style="position:absolute;left:611px;top:159px;width:890px;height:33px;border:2.5px solid #282828"></div>
<div style="position:absolute;left:498px;top:128px;width:1083px;height:37px;background:#1f1f1f"></div>
<div style="position:absolute;left:498px;top:165px;width:1083px;height:6px;background:linear-gradient(#0c0c0c99,#0c0c0c00)"></div>
<div style="position:absolute;left:535px;top:134.0px;height:26px;line-height:26px;font-family:'Liberation Sans',sans-serif;font-size:20px;color:#8dc149;white-space:pre;"><b>$</b></div>
<div style="position:absolute;left:561px;top:134.0px;height:28px;line-height:28px;font-family:'Liberation Sans',sans-serif;font-size:21.6px;color:#a9a9a9;white-space:pre;">spawn-worker.sh</div>
<div style="position:absolute;left:500px;width:68px;text-align:right;top:162.4px;height:31.667px;line-height:31.667px;font-family:'Liberation Mono',monospace;font-size:21.33px;color:#cccccc">8</div>
<div style="position:absolute;left:611.5px;top:162.4px;height:31.667px;line-height:31.667px;font-family:'Liberation Mono',monospace;font-size:21.33px;white-space:pre"><span style="color:#6a9955"># This is correct even when called from a sub-worker workspace,</span></div>
<div style="position:absolute;left:611.5px;top:194.0px;height:31.667px;line-height:31.667px;font-family:'Liberation Mono',monospace;font-size:21.33px;white-space:pre"><span style="color:#6a9955">because</span></div>
<div style="position:absolute;left:500px;width:68px;text-align:right;top:225.7px;height:31.667px;line-height:31.667px;font-family:'Liberation Mono',monospace;font-size:21.33px;color:#6e7681">9</div>
<div style="position:absolute;left:611.5px;top:225.7px;height:31.667px;line-height:31.667px;font-family:'Liberation Mono',monospace;font-size:21.33px;white-space:pre"><span style="color:#6a9955"># spawn-worker.sh only ever lives in the root agents dir.</span></div>
<div style="position:absolute;left:500px;width:68px;text-align:right;top:257.4px;height:31.667px;line-height:31.667px;font-family:'Liberation Mono',monospace;font-size:21.33px;color:#6e7681">10</div>
<div style="position:absolute;left:611.5px;top:257.4px;height:31.667px;line-height:31.667px;font-family:'Liberation Mono',monospace;font-size:21.33px;white-space:pre"><span style="color:#9cdcfe">ROOT_AGENTS_DIR</span><span style="color:#cccccc">=</span><span style="color:#ce9178">"$(</span><span style="color:#dcdcaa">cd</span><span style="color:#ce9178"> "$(</span><span style="color:#dcdcaa">dirname</span><span style="color:#ce9178"> "${</span><span style="color:#9cdcfe">BASH_SOURCE</span><span style="color:#ce9178">[0]}")" &amp;&amp; </span><span style="color:#dcdcaa">pwd</span><span style="color:#ce9178">)"</span></div>
<div style="position:absolute;left:500px;width:68px;text-align:right;top:289.0px;height:31.667px;line-height:31.667px;font-family:'Liberation Mono',monospace;font-size:21.33px;color:#6e7681">11</div>
<div style="position:absolute;left:611.5px;top:289.0px;height:31.667px;line-height:31.667px;font-family:'Liberation Mono',monospace;font-size:21.33px;white-space:pre"></div>
<div style="position:absolute;left:500px;width:68px;text-align:right;top:320.7px;height:31.667px;line-height:31.667px;font-family:'Liberation Mono',monospace;font-size:21.33px;color:#6e7681">12</div>
<div style="position:absolute;left:611.5px;top:320.7px;height:31.667px;line-height:31.667px;font-family:'Liberation Mono',monospace;font-size:21.33px;white-space:pre"><span style="color:#dcdcaa">source</span><span style="color:#ce9178"> "${</span><span style="color:#9cdcfe">ROOT_AGENTS_DIR</span><span style="color:#ce9178">}/lib.sh"</span></div>
<div style="position:absolute;left:500px;width:68px;text-align:right;top:352.4px;height:31.667px;line-height:31.667px;font-family:'Liberation Mono',monospace;font-size:21.33px;color:#6e7681">13</div>
<div style="position:absolute;left:611.5px;top:352.4px;height:31.667px;line-height:31.667px;font-family:'Liberation Mono',monospace;font-size:21.33px;white-space:pre"><span style="color:#dcdcaa">load_config</span></div>
<div style="position:absolute;left:500px;width:68px;text-align:right;top:384.0px;height:31.667px;line-height:31.667px;font-family:'Liberation Mono',monospace;font-size:21.33px;color:#6e7681">14</div>
<div style="position:absolute;left:611.5px;top:384.0px;height:31.667px;line-height:31.667px;font-family:'Liberation Mono',monospace;font-size:21.33px;white-space:pre"></div>
<div style="position:absolute;left:500px;width:68px;text-align:right;top:415.7px;height:31.667px;line-height:31.667px;font-family:'Liberation Mono',monospace;font-size:21.33px;color:#6e7681">15</div>
<div style="position:absolute;left:611.5px;top:415.7px;height:31.667px;line-height:31.667px;font-family:'Liberation Mono',monospace;font-size:21.33px;white-space:pre"><span style="color:#6a9955"># config.env may have set AGENTS_DIR=/opt/shai-agents — restore the</span></div>
<div style="position:absolute;left:611.5px;top:447.4px;height:31.667px;line-height:31.667px;font-family:'Liberation Mono',monospace;font-size:21.33px;white-space:pre"><span style="color:#6a9955">real paths</span></div>
<div style="position:absolute;left:500px;width:68px;text-align:right;top:479.0px;height:31.667px;line-height:31.667px;font-family:'Liberation Mono',monospace;font-size:21.33px;color:#6e7681">16</div>
<div style="position:absolute;left:611.5px;top:479.0px;height:31.667px;line-height:31.667px;font-family:'Liberation Mono',monospace;font-size:21.33px;white-space:pre"><span style="color:#9cdcfe">AGENTS_DIR</span><span style="color:#cccccc">=</span><span style="color:#ce9178">"${</span><span style="color:#9cdcfe">ROOT_AGENTS_DIR</span><span style="color:#ce9178">}"</span></div>
<div style="position:absolute;left:500px;width:68px;text-align:right;top:510.7px;height:31.667px;line-height:31.667px;font-family:'Liberation Mono',monospace;font-size:21.33px;color:#6e7681">17</div>
<div style="position:absolute;left:611.5px;top:510.7px;height:31.667px;line-height:31.667px;font-family:'Liberation Mono',monospace;font-size:21.33px;white-space:pre"><span style="color:#9cdcfe">LOG_DIR</span><span style="color:#cccccc">=</span><span style="color:#ce9178">"${</span><span style="color:#9cdcfe">AGENTS_DIR</span><span style="color:#ce9178">}/logs"</span></div>
<div style="position:absolute;left:500px;width:68px;text-align:right;top:542.4px;height:31.667px;line-height:31.667px;font-family:'Liberation Mono',monospace;font-size:21.33px;color:#6e7681">18</div>
<div style="position:absolute;left:611.5px;top:542.4px;height:31.667px;line-height:31.667px;font-family:'Liberation Mono',monospace;font-size:21.33px;white-space:pre"><span style="color:#9cdcfe">STATE_DIR</span><span style="color:#cccccc">=</span><span style="color:#ce9178">"${</span><span style="color:#9cdcfe">AGENTS_DIR</span><span style="color:#ce9178">}/state"</span></div>
<div style="position:absolute;left:500px;width:68px;text-align:right;top:574.0px;height:31.667px;line-height:31.667px;font-family:'Liberation Mono',monospace;font-size:21.33px;color:#6e7681">19</div>
<div style="position:absolute;left:611.5px;top:574.0px;height:31.667px;line-height:31.667px;font-family:'Liberation Mono',monospace;font-size:21.33px;white-space:pre"><span style="color:#9cdcfe">ROOT_WORKERS_DIR</span><span style="color:#cccccc">=</span><span style="color:#ce9178">"${</span><span style="color:#9cdcfe">AGENTS_DIR</span><span style="color:#ce9178">}/state/workers"</span></div>
<div style="position:absolute;left:500px;width:68px;text-align:right;top:605.7px;height:31.667px;line-height:31.667px;font-family:'Liberation Mono',monospace;font-size:21.33px;color:#6e7681">20</div>
<div style="position:absolute;left:611.5px;top:605.7px;height:31.667px;line-height:31.667px;font-family:'Liberation Mono',monospace;font-size:21.33px;white-space:pre"><span style="color:#9cdcfe">ROOT_REGISTRY</span><span style="color:#cccccc">=</span><span style="color:#ce9178">"${</span><span style="color:#9cdcfe">AGENTS_DIR</span><span style="color:#ce9178">}/state/worker-registry.ndjson"</span></div>
<div style="position:absolute;left:500px;width:68px;text-align:right;top:637.4px;height:31.667px;line-height:31.667px;font-family:'Liberation Mono',monospace;font-size:21.33px;color:#6e7681">21</div>
<div style="position:absolute;left:611.5px;top:637.4px;height:31.667px;line-height:31.667px;font-family:'Liberation Mono',monospace;font-size:21.33px;white-space:pre"></div>
<div style="position:absolute;left:500px;width:68px;text-align:right;top:669.0px;height:31.667px;line-height:31.667px;font-family:'Liberation Mono',monospace;font-size:21.33px;color:#6e7681">22</div>
<div style="position:absolute;left:611.5px;top:669.0px;height:31.667px;line-height:31.667px;font-family:'Liberation Mono',monospace;font-size:21.33px;white-space:pre"><span style="color:#6a9955"># ── Argument parsing</span></div>
<div style="position:absolute;left:611.5px;top:711.939px;width:743.4000000000001px;height:2.2px;background:#6a9955"></div>
<div style="position:absolute;left:500px;width:68px;text-align:right;top:732.4px;height:31.667px;line-height:31.667px;font-family:'Liberation Mono',monospace;font-size:21.33px;color:#6e7681">23</div>
<div style="position:absolute;left:611.5px;top:732.4px;height:31.667px;line-height:31.667px;font-family:'Liberation Mono',monospace;font-size:21.33px;white-space:pre"><span style="color:#9cdcfe">SPAWN_TASK</span><span style="color:#cccccc">=</span><span style="color:#ce9178">""</span></div>
<div style="position:absolute;left:500px;width:68px;text-align:right;top:764.0px;height:31.667px;line-height:31.667px;font-family:'Liberation Mono',monospace;font-size:21.33px;color:#6e7681">24</div>
<div style="position:absolute;left:611.5px;top:764.0px;height:31.667px;line-height:31.667px;font-family:'Liberation Mono',monospace;font-size:21.33px;white-space:pre"><span style="color:#9cdcfe">SPAWN_PARENT_ID</span><span style="color:#cccccc">=</span><span style="color:#ce9178">"${</span><span style="color:#9cdcfe">WORKER_ID</span><span style="color:#cccccc">:-</span><span style="color:#9cdcfe">root</span><span style="color:#ce9178">}"</span></div>
<div style="position:absolute;left:500px;width:68px;text-align:right;top:795.7px;height:31.667px;line-height:31.667px;font-family:'Liberation Mono',monospace;font-size:21.33px;color:#6e7681">25</div>
<div style="position:absolute;left:611.5px;top:795.7px;height:31.667px;line-height:31.667px;font-family:'Liberation Mono',monospace;font-size:21.33px;white-space:pre"><span style="color:#9cdcfe">SPAWN_DEPTH</span><span style="color:#cccccc">=</span><span style="color:#ce9178">"${</span><span style="color:#9cdcfe">WORKER_DEPTH</span><span style="color:#cccccc">:-</span><span style="color:#9cdcfe">0</span><span style="color:#ce9178">}"</span></div>
<div style="position:absolute;left:500px;width:68px;text-align:right;top:827.4px;height:31.667px;line-height:31.667px;font-family:'Liberation Mono',monospace;font-size:21.33px;color:#6e7681">26</div>
<div style="position:absolute;left:611.5px;top:827.4px;height:31.667px;line-height:31.667px;font-family:'Liberation Mono',monospace;font-size:21.33px;white-space:pre"><span style="color:#9cdcfe">SPAWN_ISSUE</span><span style="color:#cccccc">=</span><span style="color:#ce9178">""</span></div>
<div style="position:absolute;left:500px;width:68px;text-align:right;top:859.0px;height:31.667px;line-height:31.667px;font-family:'Liberation Mono',monospace;font-size:21.33px;color:#6e7681">27</div>
<div style="position:absolute;left:611.5px;top:859.0px;height:31.667px;line-height:31.667px;font-family:'Liberation Mono',monospace;font-size:21.33px;white-space:pre"><span style="color:#9cdcfe">SPAWN_CONTEXT</span><span style="color:#cccccc">=</span><span style="color:#ce9178">""</span></div>
<div style="position:absolute;left:500px;width:68px;text-align:right;top:890.7px;height:31.667px;line-height:31.667px;font-family:'Liberation Mono',monospace;font-size:21.33px;color:#6e7681">28</div>
<div style="position:absolute;left:611.5px;top:890.7px;height:31.667px;line-height:31.667px;font-family:'Liberation Mono',monospace;font-size:21.33px;white-space:pre"><span style="color:#9cdcfe">SPAWN_WAIT</span><span style="color:#cccccc">=</span><span style="color:#ce9178">false</span></div>
<div style="position:absolute;left:500px;width:68px;text-align:right;top:922.4px;height:31.667px;line-height:31.667px;font-family:'Liberation Mono',monospace;font-size:21.33px;color:#6e7681">29</div>
<div style="position:absolute;left:611.5px;top:922.4px;height:31.667px;line-height:31.667px;font-family:'Liberation Mono',monospace;font-size:21.33px;white-space:pre"></div>
<div style="position:absolute;left:500px;width:68px;text-align:right;top:954.0px;height:31.667px;line-height:31.667px;font-family:'Liberation Mono',monospace;font-size:21.33px;color:#6e7681">30</div>
<div style="position:absolute;left:611.5px;top:954.0px;height:31.667px;line-height:31.667px;font-family:'Liberation Mono',monospace;font-size:21.33px;white-space:pre"><span style="color:#c586c0">while</span><span style="color:#cccccc"> </span><span style="color:#ffd700">[</span><span style="color:#da70d6">[</span><span style="color:#cccccc"> </span><span style="color:#569cd6">$#</span><span style="color:#cccccc"> -gt </span><span style="color:#b5cea8">0</span><span style="color:#cccccc"> </span><span style="color:#da70d6">]</span><span style="color:#ffd700">]</span><span style="color:#cccccc">; </span><span style="color:#c586c0">do</span></div>
<div style="position:absolute;left:500px;width:68px;text-align:right;top:985.7px;height:31.667px;line-height:31.667px;font-family:'Liberation Mono',monospace;font-size:21.33px;color:#6e7681">31</div>
<div style="position:absolute;left:611.5px;top:985.7px;height:31.667px;line-height:31.667px;font-family:'Liberation Mono',monospace;font-size:21.33px;white-space:pre"><span style="color:#c586c0">  case</span><span style="color:#ce9178"> "</span><span style="color:#9cdcfe">$1</span><span style="color:#ce9178">"</span><span style="color:#cccccc"> </span><span style="color:#c586c0">in</span></div>
<div style="position:absolute;left:500px;width:68px;text-align:right;top:1017.4px;height:31.667px;line-height:31.667px;font-family:'Liberation Mono',monospace;font-size:21.33px;color:#6e7681">32</div>
<div style="position:absolute;left:611.5px;top:1017.4px;height:31.667px;line-height:31.667px;font-family:'Liberation Mono',monospace;font-size:21.33px;white-space:pre"><span style="color:#d16969">    --task</span><span style="color:#e02a2a">)</span><span style="color:#cccccc">          </span><span style="color:#9cdcfe">SPAWN_TASK</span><span style="color:#cccccc">=</span><span style="color:#ce9178">"</span><span style="color:#9cdcfe">$2</span><span style="color:#ce9178">"</span><span style="color:#cccccc">;</span><span style="color:#cccccc">         </span><span style="color:#dcdcaa">shift</span><span style="color:#cccccc"> </span><span style="color:#b5cea8">2</span><span style="color:#cccccc"> ;;</span></div>
<div style="position:absolute;left:500px;width:68px;text-align:right;top:1049.0px;height:31.667px;line-height:31.667px;font-family:'Liberation Mono',monospace;font-size:21.33px;color:#6e7681">33</div>
<div style="position:absolute;left:611.5px;top:1049.0px;height:31.667px;line-height:31.667px;font-family:'Liberation Mono',monospace;font-size:21.33px;white-space:pre"><span style="color:#d16969">    --parent-id</span><span style="color:#e02a2a">)</span><span style="color:#cccccc">     </span><span style="color:#9cdcfe">SPAWN_PARENT_ID</span><span style="color:#cccccc">=</span><span style="color:#ce9178">"</span><span style="color:#9cdcfe">$2</span><span style="color:#ce9178">"</span><span style="color:#cccccc">;</span><span style="color:#cccccc">    </span><span style="color:#dcdcaa">shift</span><span style="color:#cccccc"> </span><span style="color:#b5cea8">2</span><span style="color:#cccccc"> ;;</span></div>
<div style="position:absolute;left:500px;width:68px;text-align:right;top:1080.7px;height:31.667px;line-height:31.667px;font-family:'Liberation Mono',monospace;font-size:21.33px;color:#6e7681">34</div>
<div style="position:absolute;left:611.5px;top:1080.7px;height:31.667px;line-height:31.667px;font-family:'Liberation Mono',monospace;font-size:21.33px;white-space:pre"><span style="color:#d16969">    --depth</span><span style="color:#e02a2a">)</span><span style="color:#cccccc">         </span><span style="color:#9cdcfe">SPAWN_DEPTH</span><span style="color:#cccccc">=</span><span style="color:#ce9178">"</span><span style="color:#9cdcfe">$2</span><span style="color:#ce9178">"</span><span style="color:#cccccc">;</span><span style="color:#cccccc">        </span><span style="color:#dcdcaa">shift</span><span style="color:#cccccc"> </span><span style="color:#b5cea8">2</span><span style="color:#cccccc"> ;;</span></div>
<div style="position:absolute;left:500px;width:68px;text-align:right;top:1112.4px;height:31.667px;line-height:31.667px;font-family:'Liberation Mono',monospace;font-size:21.33px;color:#6e7681">35</div>
<div style="position:absolute;left:611.5px;top:1112.4px;height:31.667px;line-height:31.667px;font-family:'Liberation Mono',monospace;font-size:21.33px;white-space:pre"><span style="color:#d16969">    --issue-number</span><span style="color:#e02a2a">)</span><span style="color:#cccccc">  </span><span style="color:#9cdcfe">SPAWN_ISSUE</span><span style="color:#cccccc">=</span><span style="color:#ce9178">"</span><span style="color:#9cdcfe">$2</span><span style="color:#ce9178">"</span><span style="color:#cccccc">;</span><span style="color:#cccccc">        </span><span style="color:#dcdcaa">shift</span><span style="color:#cccccc"> </span><span style="color:#b5cea8">2</span><span style="color:#cccccc"> ;;</span></div>
<div style="position:absolute;left:500px;width:68px;text-align:right;top:1144.0px;height:31.667px;line-height:31.667px;font-family:'Liberation Mono',monospace;font-size:21.33px;color:#6e7681">36</div>
<div style="position:absolute;left:611.5px;top:1144.0px;height:31.667px;line-height:31.667px;font-family:'Liberation Mono',monospace;font-size:21.33px;white-space:pre"><span style="color:#d16969">    --context</span><span style="color:#e02a2a">)</span><span style="color:#cccccc">       </span><span style="color:#9cdcfe">SPAWN_CONTEXT</span><span style="color:#cccccc">=</span><span style="color:#ce9178">"</span><span style="color:#9cdcfe">$2</span><span style="color:#ce9178">"</span><span style="color:#cccccc">;</span><span style="color:#cccccc">      </span><span style="color:#dcdcaa">shift</span><span style="color:#cccccc"> </span><span style="color:#b5cea8">2</span><span style="color:#cccccc"> ;;</span></div>
<div style="position:absolute;left:500px;width:68px;text-align:right;top:1175.7px;height:31.667px;line-height:31.667px;font-family:'Liberation Mono',monospace;font-size:21.33px;color:#6e7681">37</div>
<div style="position:absolute;left:611.5px;top:1175.7px;height:31.667px;line-height:31.667px;font-family:'Liberation Mono',monospace;font-size:21.33px;white-space:pre"><span style="color:#d16969">    --wait</span><span style="color:#e02a2a">)</span><span style="color:#cccccc">          </span><span style="color:#9cdcfe">SPAWN_WAIT</span><span style="color:#cccccc">=</span><span style="color:#ce9178">true</span><span style="color:#cccccc">;</span><span style="color:#cccccc">         </span><span style="color:#dcdcaa">shift</span><span style="color:#cccccc">   ;;</span></div>
<div style="position:absolute;left:500px;width:68px;text-align:right;top:1207.4px;height:31.667px;line-height:31.667px;font-family:'Liberation Mono',monospace;font-size:21.33px;color:#6e7681">38</div>
<div style="position:absolute;left:611.5px;top:1207.4px;height:31.667px;line-height:31.667px;font-family:'Liberation Mono',monospace;font-size:21.33px;white-space:pre"><span style="color:#cccccc">    *</span><span style="color:#e02a2a">)</span><span style="color:#cccccc"> </span><span style="color:#dcdcaa">die</span><span style="color:#ce9178"> "Unknown argument: </span><span style="color:#9cdcfe">$1</span><span style="color:#ce9178">"</span><span style="color:#cccccc"> ;;</span></div>
<div style="position:absolute;left:500px;width:68px;text-align:right;top:1239.0px;height:31.667px;line-height:31.667px;font-family:'Liberation Mono',monospace;font-size:21.33px;color:#6e7681">39</div>
<div style="position:absolute;left:611.5px;top:1239.0px;height:31.667px;line-height:31.667px;font-family:'Liberation Mono',monospace;font-size:21.33px;white-space:pre"><span style="color:#c586c0">  esac</span></div>
<div style="position:absolute;left:500px;width:68px;text-align:right;top:1270.7px;height:31.667px;line-height:31.667px;font-family:'Liberation Mono',monospace;font-size:21.33px;color:#6e7681">40</div>
<div style="position:absolute;left:611.5px;top:1270.7px;height:31.667px;line-height:31.667px;font-family:'Liberation Mono',monospace;font-size:21.33px;white-space:pre"><span style="color:#c586c0">done</span></div>
<div style="position:absolute;left:500px;width:68px;text-align:right;top:1302.4px;height:31.667px;line-height:31.667px;font-family:'Liberation Mono',monospace;font-size:21.33px;color:#6e7681">41</div>
<div style="position:absolute;left:611.5px;top:1302.4px;height:31.667px;line-height:31.667px;font-family:'Liberation Mono',monospace;font-size:21.33px;white-space:pre"></div>
<div style="position:absolute;left:500px;width:68px;text-align:right;top:1334.0px;height:31.667px;line-height:31.667px;font-family:'Liberation Mono',monospace;font-size:21.33px;color:#6e7681">42</div>
<div style="position:absolute;left:611.5px;top:1334.0px;height:31.667px;line-height:31.667px;font-family:'Liberation Mono',monospace;font-size:21.33px;white-space:pre"><span style="color:#ffd700">[</span><span style="color:#da70d6">[</span><span style="color:#cccccc"> -n </span><span style="color:#ce9178">"</span><span style="color:#9cdcfe">$SPAWN_TASK</span><span style="color:#ce9178">"</span><span style="color:#cccccc"> </span><span style="color:#da70d6">]</span><span style="color:#ffd700">]</span><span style="color:#cccccc"> || </span><span style="color:#dcdcaa">die</span><span style="color:#ce9178"> "spawn-worker.sh: --task is required"</span></div>
<div style="position:absolute;left:500px;width:68px;text-align:right;top:1365.7px;height:31.667px;line-height:31.667px;font-family:'Liberation Mono',monospace;font-size:21.33px;color:#6e7681">43</div>
<div style="position:absolute;left:611.5px;top:1365.7px;height:31.667px;line-height:31.667px;font-family:'Liberation Mono',monospace;font-size:21.33px;white-space:pre"></div>
<div style="position:absolute;left:500px;width:68px;text-align:right;top:1397.4px;height:31.667px;line-height:31.667px;font-family:'Liberation Mono',monospace;font-size:21.33px;color:#6e7681">44</div>
<div style="position:absolute;left:611.5px;top:1397.4px;height:31.667px;line-height:31.667px;font-family:'Liberation Mono',monospace;font-size:21.33px;white-space:pre"><span style="color:#6a9955"># ── Depth guard</span></div>
<div style="position:absolute;left:611.5px;top:1440.2800000000002px;width:807.4000000000001px;height:2.2px;background:#6a9955"></div>
<div style="position:absolute;left:500px;width:68px;text-align:right;top:1460.7px;height:31.667px;line-height:31.667px;font-family:'Liberation Mono',monospace;font-size:21.33px;color:#6e7681">45</div>
<div style="position:absolute;left:611.5px;top:1460.7px;height:31.667px;line-height:31.667px;font-family:'Liberation Mono',monospace;font-size:21.33px;white-space:pre"><span style="color:#9cdcfe">CHILD_DEPTH</span><span style="color:#cccccc">=$</span><span style="color:#ffd700">(</span><span style="color:#da70d6">(</span><span style="color:#dcdcaa"> SPAWN_DEPTH </span><span style="color:#cccccc">+</span><span style="color:#b5cea8"> 1 </span><span style="color:#da70d6">)</span><span style="color:#ffd700">)</span></div>
<div style="position:absolute;left:500px;width:68px;text-align:right;top:1492.4px;height:31.667px;line-height:31.667px;font-family:'Liberation Mono',monospace;font-size:21.33px;color:#6e7681">46</div>
<div style="position:absolute;left:611.5px;top:1492.4px;height:31.667px;line-height:31.667px;font-family:'Liberation Mono',monospace;font-size:21.33px;white-space:pre"><span style="color:#c586c0">if</span><span style="color:#cccccc"> </span><span style="color:#ffd700">[</span><span style="color:#da70d6">[</span><span style="color:#cccccc"> </span><span style="color:#9cdcfe">$CHILD_DEPTH</span><span style="color:#cccccc"> -gt </span><span style="color:#cccccc">$</span><span style="color:#179fff">{</span><span style="color:#9cdcfe">MAX_AGENT_DEPTH</span><span style="color:#9cdcfe">:-3</span><span style="color:#179fff">}</span><span style="color:#cccccc"> </span><span style="color:#da70d6">]</span><span style="color:#ffd700">]</span><span style="color:#cccccc">;</span><span style="color:#cccccc"> </span><span style="color:#c586c0">then</span></div>
<div style="position:absolute;left:500px;width:68px;text-align:right;top:1524.0px;height:31.667px;line-height:31.667px;font-family:'Liberation Mono',monospace;font-size:21.33px;color:#6e7681">47</div>
<div style="position:absolute;left:611.5px;top:1524.0px;height:31.667px;line-height:31.667px;font-family:'Liberation Mono',monospace;font-size:21.33px;white-space:pre"><span style="color:#dcdcaa">  warn</span><span style="color:#ce9178"> "spawn-worker: depth limit ($</span><span style="color:#ce9178">{</span><span style="color:#9cdcfe">MAX_AGENT_DEPTH</span><span style="color:#9cdcfe">:-3</span><span style="color:#ce9178">}) reached.</span></div>
<div style="position:absolute;left:611.5px;top:1555.7px;height:31.667px;line-height:31.667px;font-family:'Liberation Mono',monospace;font-size:21.33px;white-space:pre"><span style="color:#ce9178">  Cannot spawn at depth $</span><span style="color:#ce9178">{</span><span style="color:#9cdcfe">CHILD_DEPTH</span><span style="color:#ce9178">}."</span></div>
<div style="position:absolute;left:500px;width:68px;text-align:right;top:1587.4px;height:31.667px;line-height:31.667px;font-family:'Liberation Mono',monospace;font-size:21.33px;color:#6e7681">48</div>
<div style="position:absolute;left:611.5px;top:1587.4px;height:31.667px;line-height:31.667px;font-family:'Liberation Mono',monospace;font-size:21.33px;white-space:pre"><span style="color:#dcdcaa">  echo</span><span style="color:#ce9178"> "SPAWN_BLOCKED=depth_limit_reached"</span></div>
<div style="position:absolute;left:500px;width:68px;text-align:right;top:1619.0px;height:31.667px;line-height:31.667px;font-family:'Liberation Mono',monospace;font-size:21.33px;color:#6e7681">49</div>
<div style="position:absolute;left:611.5px;top:1619.0px;height:31.667px;line-height:31.667px;font-family:'Liberation Mono',monospace;font-size:21.33px;white-space:pre"><span style="color:#dcdcaa">  exit</span><span style="color:#cccccc"> </span><span style="color:#b5cea8">1</span></div>
<div style="position:absolute;left:500px;width:68px;text-align:right;top:1650.7px;height:31.667px;line-height:31.667px;font-family:'Liberation Mono',monospace;font-size:21.33px;color:#6e7681">50</div>
<div style="position:absolute;left:611.5px;top:1650.7px;height:31.667px;line-height:31.667px;font-family:'Liberation Mono',monospace;font-size:21.33px;white-space:pre"><span style="color:#c586c0">fi</span></div>
<div style="position:absolute;left:611px;top:983px;width:1.5px;height:285px;background:#404040"></div>
<div style="position:absolute;left:637px;top:1015px;width:1.5px;height:221px;background:#404040"></div>
<div style="position:absolute;left:611px;top:1521px;width:1.5px;height:127px;background:#404040"></div>
<svg style="position:absolute;left:1507px;top:165px;" width="72" height="465" viewBox="0 0 72 465" fill="none"><rect x="0.0" y="0.00" width="19.0" height="1.5" fill="#4f7a3f" opacity="0.85"/><rect x="0.0" y="2.15" width="1.0" height="1.5" fill="#4f7a3f" opacity="0.85"/><rect x="0.0" y="4.30" width="70.0" height="1.5" fill="#4f7a3f" opacity="0.85"/><rect x="0.0" y="6.45" width="8.0" height="1.5" fill="#4f7a3f" opacity="0.85"/><rect x="0.0" y="8.60" width="32.0" height="1.5" fill="#4f7a3f" opacity="0.85"/><rect x="0.0" y="10.75" width="1.0" height="1.5" fill="#4f7a3f" opacity="0.85"/><rect x="0.0" y="12.90" width="70.0" height="1.5" fill="#4f7a3f" opacity="0.85"/><rect x="0.0" y="15.05" width="8.0" height="1.5" fill="#4f7a3f" opacity="0.85"/><rect x="0.0" y="19.35" width="3.0" height="1.5" fill="#8a8a8a" opacity="0.85"/><rect x="4.0" y="19.35" width="4.0" height="1.5" fill="#6e9fbf" opacity="0.85"/><rect x="9.0" y="19.35" width="8.0" height="1.5" fill="#a5a57f" opacity="0.85"/><rect x="0.0" y="23.65" width="70.0" height="1.5" fill="#4f7a3f" opacity="0.85"/><rect x="0.0" y="25.80" width="8.0" height="1.5" fill="#4f7a3f" opacity="0.85"/><rect x="0.0" y="27.95" width="64.0" height="1.5" fill="#4f7a3f" opacity="0.85"/><rect x="0.0" y="30.10" width="10.0" height="1.5" fill="#4f7a3f" opacity="0.85"/><rect x="0.0" y="32.25" width="60.0" height="1.5" fill="#4f7a3f" opacity="0.85"/><rect x="0.0" y="34.40" width="1.0" height="1.5" fill="#4f7a3f" opacity="0.85"/><rect x="2.0" y="34.40" width="4.0" height="1.5" fill="#4f7a3f" opacity="0.85"/><rect x="7.0" y="34.40" width="2.0" height="1.5" fill="#4f7a3f" opacity="0.85"/><rect x="10.0" y="34.40" width="7.0" height="1.5" fill="#4f7a3f" opacity="0.85"/><rect x="18.0" y="34.40" width="4.0" height="1.5" fill="#4f7a3f" opacity="0.85"/><rect x="23.0" y="34.40" width="4.0" height="1.5" fill="#4f7a3f" opacity="0.85"/><rect x="28.0" y="34.40" width="6.0" height="1.5" fill="#4f7a3f" opacity="0.85"/><rect x="35.0" y="34.40" width="4.0" height="1.5" fill="#4f7a3f" opacity="0.85"/><rect x="40.0" y="34.40" width="1.0" height="1.5" fill="#4f7a3f" opacity="0.85"/><rect x="42.0" y="34.40" width="10.0" height="1.5" fill="#4f7a3f" opacity="0.85"/><rect x="53.0" y="34.40" width="10.0" height="1.5" fill="#4f7a3f" opacity="0.85"/><rect x="0.0" y="36.55" width="7.0" height="1.5" fill="#4f7a3f" opacity="0.85"/><rect x="0.0" y="38.70" width="1.0" height="1.5" fill="#4f7a3f" opacity="0.85"/><rect x="2.0" y="38.70" width="15.0" height="1.5" fill="#4f7a3f" opacity="0.85"/><rect x="18.0" y="38.70" width="4.0" height="1.5" fill="#4f7a3f" opacity="0.85"/><rect x="23.0" y="38.70" width="4.0" height="1.5" fill="#4f7a3f" opacity="0.85"/><rect x="28.0" y="38.70" width="5.0" height="1.5" fill="#4f7a3f" opacity="0.85"/><rect x="34.0" y="38.70" width="2.0" height="1.5" fill="#4f7a3f" opacity="0.85"/><rect x="37.0" y="38.70" width="3.0" height="1.5" fill="#4f7a3f" opacity="0.85"/><rect x="41.0" y="38.70" width="4.0" height="1.5" fill="#4f7a3f" opacity="0.85"/><rect x="46.0" y="38.70" width="6.0" height="1.5" fill="#4f7a3f" opacity="0.85"/><rect x="53.0" y="38.70" width="4.0" height="1.5" fill="#4f7a3f" opacity="0.85"/><rect x="0.0" y="40.85" width="15.0" height="1.5" fill="#6e9fbf" opacity="0.85"/><rect x="15.0" y="40.85" width="1.0" height="1.5" fill="#8a8a8a" opacity="0.85"/><rect x="16.0" y="40.85" width="3.0" height="1.5" fill="#9a6e58" opacity="0.85"/><rect x="19.0" y="40.85" width="2.0" height="1.5" fill="#a5a57f" opacity="0.85"/><rect x="22.0" y="40.85" width="3.0" height="1.5" fill="#9a6e58" opacity="0.85"/><rect x="25.0" y="40.85" width="7.0" height="1.5" fill="#a5a57f" opacity="0.85"/><rect x="33.0" y="40.85" width="3.0" height="1.5" fill="#9a6e58" opacity="0.85"/><rect x="36.0" y="40.85" width="11.0" height="1.5" fill="#6e9fbf" opacity="0.85"/><rect x="47.0" y="40.85" width="7.0" height="1.5" fill="#9a6e58" opacity="0.85"/><rect x="55.0" y="40.85" width="2.0" height="1.5" fill="#9a6e58" opacity="0.85"/><rect x="58.0" y="40.85" width="3.0" height="1.5" fill="#a5a57f" opacity="0.85"/><rect x="61.0" y="40.85" width="2.0" height="1.5" fill="#9a6e58" opacity="0.85"/><rect x="0.0" y="45.15" width="6.0" height="1.5" fill="#a5a57f" opacity="0.85"/><rect x="7.0" y="45.15" width="3.0" height="1.5" fill="#9a6e58" opacity="0.85"/><rect x="10.0" y="45.15" width="15.0" height="1.5" fill="#6e9fbf" opacity="0.85"/><rect x="25.0" y="45.15" width="9.0" height="1.5" fill="#9a6e58" opacity="0.85"/><rect x="0.0" y="47.30" width="11.0" height="1.5" fill="#a5a57f" opacity="0.85"/><rect x="0.0" y="51.60" width="1.0" height="1.5" fill="#4f7a3f" opacity="0.85"/><rect x="2.0" y="51.60" width="10.0" height="1.5" fill="#4f7a3f" opacity="0.85"/><rect x="13.0" y="51.60" width="3.0" height="1.5" fill="#4f7a3f" opacity="0.85"/><rect x="17.0" y="51.60" width="4.0" height="1.5" fill="#4f7a3f" opacity="0.85"/><rect x="22.0" y="51.60" width="3.0" height="1.5" fill="#4f7a3f" opacity="0.85"/><rect x="26.0" y="51.60" width="27.0" height="1.5" fill="#4f7a3f" opacity="0.85"/><rect x="54.0" y="51.60" width="1.0" height="1.5" fill="#4f7a3f" opacity="0.85"/><rect x="56.0" y="51.60" width="7.0" height="1.5" fill="#4f7a3f" opacity="0.85"/><rect x="64.0" y="51.60" width="3.0" height="1.5" fill="#4f7a3f" opacity="0.85"/><rect x="0.0" y="53.75" width="4.0" height="1.5" fill="#4f7a3f" opacity="0.85"/><rect x="5.0" y="53.75" width="5.0" height="1.5" fill="#4f7a3f" opacity="0.85"/><rect x="0.0" y="55.90" width="10.0" height="1.5" fill="#6e9fbf" opacity="0.85"/><rect x="10.0" y="55.90" width="1.0" height="1.5" fill="#8a8a8a" opacity="0.85"/><rect x="11.0" y="55.90" width="3.0" height="1.5" fill="#9a6e58" opacity="0.85"/><rect x="14.0" y="55.90" width="15.0" height="1.5" fill="#6e9fbf" opacity="0.85"/><rect x="29.0" y="55.90" width="2.0" height="1.5" fill="#9a6e58" opacity="0.85"/><rect x="0.0" y="58.05" width="7.0" height="1.5" fill="#6e9fbf" opacity="0.85"/><rect x="7.0" y="58.05" width="1.0" height="1.5" fill="#8a8a8a" opacity="0.85"/><rect x="8.0" y="58.05" width="3.0" height="1.5" fill="#9a6e58" opacity="0.85"/><rect x="11.0" y="58.05" width="10.0" height="1.5" fill="#6e9fbf" opacity="0.85"/><rect x="21.0" y="58.05" width="7.0" height="1.5" fill="#9a6e58" opacity="0.85"/><rect x="0.0" y="60.20" width="9.0" height="1.5" fill="#6e9fbf" opacity="0.85"/><rect x="9.0" y="60.20" width="1.0" height="1.5" fill="#8a8a8a" opacity="0.85"/><rect x="10.0" y="60.20" width="3.0" height="1.5" fill="#9a6e58" opacity="0.85"/><rect x="13.0" y="60.20" width="10.0" height="1.5" fill="#6e9fbf" opacity="0.85"/><rect x="23.0" y="60.20" width="8.0" height="1.5" fill="#9a6e58" opacity="0.85"/><rect x="0.0" y="62.35" width="16.0" height="1.5" fill="#6e9fbf" opacity="0.85"/><rect x="16.0" y="62.35" width="1.0" height="1.5" fill="#8a8a8a" opacity="0.85"/><rect x="17.0" y="62.35" width="3.0" height="1.5" fill="#9a6e58" opacity="0.85"/><rect x="20.0" y="62.35" width="10.0" height="1.5" fill="#6e9fbf" opacity="0.85"/><rect x="30.0" y="62.35" width="16.0" height="1.5" fill="#9a6e58" opacity="0.85"/><rect x="0.0" y="64.50" width="13.0" height="1.5" fill="#6e9fbf" opacity="0.85"/><rect x="13.0" y="64.50" width="1.0" height="1.5" fill="#8a8a8a" opacity="0.85"/><rect x="14.0" y="64.50" width="3.0" height="1.5" fill="#9a6e58" opacity="0.85"/><rect x="17.0" y="64.50" width="10.0" height="1.5" fill="#6e9fbf" opacity="0.85"/><rect x="27.0" y="64.50" width="31.0" height="1.5" fill="#9a6e58" opacity="0.85"/><rect x="0.0" y="68.80" width="1.0" height="1.5" fill="#4f7a3f" opacity="0.85"/><rect x="2.0" y="68.80" width="2.0" height="1.5" fill="#4f7a3f" opacity="0.85"/><rect x="5.0" y="68.80" width="8.0" height="1.5" fill="#4f7a3f" opacity="0.85"/><rect x="14.0" y="68.80" width="7.0" height="1.5" fill="#4f7a3f" opacity="0.85"/><rect x="0.0" y="70.95" width="63.0" height="1.5" fill="#4f7a3f" opacity="0.85"/><rect x="0.0" y="73.10" width="10.0" height="1.5" fill="#6e9fbf" opacity="0.85"/><rect x="10.0" y="73.10" width="1.0" height="1.5" fill="#8a8a8a" opacity="0.85"/><rect x="11.0" y="73.10" width="2.0" height="1.5" fill="#9a6e58" opacity="0.85"/><rect x="0.0" y="75.25" width="15.0" height="1.5" fill="#6e9fbf" opacity="0.85"/><rect x="15.0" y="75.25" width="1.0" height="1.5" fill="#8a8a8a" opacity="0.85"/><rect x="16.0" y="75.25" width="3.0" height="1.5" fill="#9a6e58" opacity="0.85"/><rect x="19.0" y="75.25" width="9.0" height="1.5" fill="#6e9fbf" opacity="0.85"/><rect x="28.0" y="75.25" width="2.0" height="1.5" fill="#8a8a8a" opacity="0.85"/><rect x="30.0" y="75.25" width="4.0" height="1.5" fill="#6e9fbf" opacity="0.85"/><rect x="34.0" y="75.25" width="2.0" height="1.5" fill="#9a6e58" opacity="0.85"/><rect x="0.0" y="77.40" width="11.0" height="1.5" fill="#6e9fbf" opacity="0.85"/><rect x="11.0" y="77.40" width="1.0" height="1.5" fill="#8a8a8a" opacity="0.85"/><rect x="12.0" y="77.40" width="3.0" height="1.5" fill="#9a6e58" opacity="0.85"/><rect x="15.0" y="77.40" width="12.0" height="1.5" fill="#6e9fbf" opacity="0.85"/><rect x="27.0" y="77.40" width="2.0" height="1.5" fill="#8a8a8a" opacity="0.85"/><rect x="29.0" y="77.40" width="1.0" height="1.5" fill="#6e9fbf" opacity="0.85"/><rect x="30.0" y="77.40" width="2.0" height="1.5" fill="#9a6e58" opacity="0.85"/><rect x="0.0" y="79.55" width="11.0" height="1.5" fill="#6e9fbf" opacity="0.85"/><rect x="11.0" y="79.55" width="1.0" height="1.5" fill="#8a8a8a" opacity="0.85"/><rect x="12.0" y="79.55" width="2.0" height="1.5" fill="#9a6e58" opacity="0.85"/><rect x="0.0" y="81.70" width="13.0" height="1.5" fill="#6e9fbf" opacity="0.85"/><rect x="13.0" y="81.70" width="1.0" height="1.5" fill="#8a8a8a" opacity="0.85"/><rect x="14.0" y="81.70" width="2.0" height="1.5" fill="#9a6e58" opacity="0.85"/><rect x="0.0" y="83.85" width="10.0" height="1.5" fill="#6e9fbf" opacity="0.85"/><rect x="10.0" y="83.85" width="1.0" height="1.5" fill="#8a8a8a" opacity="0.85"/><rect x="11.0" y="83.85" width="5.0" height="1.5" fill="#9a6e58" opacity="0.85"/><rect x="0.0" y="88.15" width="5.0" height="1.5" fill="#94658f" opacity="0.85"/><rect x="6.0" y="88.15" width="1.0" height="1.5" fill="#a89a40" opacity="0.85"/><rect x="7.0" y="88.15" width="1.0" height="1.5" fill="#94658f" opacity="0.85"/><rect x="9.0" y="88.15" width="2.0" height="1.5" fill="#4a78a0" opacity="0.85"/><rect x="12.0" y="88.15" width="3.0" height="1.5" fill="#8a8a8a" opacity="0.85"/><rect x="16.0" y="88.15" width="1.0" height="1.5" fill="#8a9a80" opacity="0.85"/><rect x="18.0" y="88.15" width="1.0" height="1.5" fill="#94658f" opacity="0.85"/><rect x="19.0" y="88.15" width="1.0" height="1.5" fill="#a89a40" opacity="0.85"/><rect x="20.0" y="88.15" width="1.0" height="1.5" fill="#8a8a8a" opacity="0.85"/><rect x="22.0" y="88.15" width="2.0" height="1.5" fill="#94658f" opacity="0.85"/><rect x="2.0" y="90.30" width="4.0" height="1.5" fill="#94658f" opacity="0.85"/><rect x="7.0" y="90.30" width="1.0" height="1.5" fill="#9a6e58" opacity="0.85"/><rect x="8.0" y="90.30" width="2.0" height="1.5" fill="#6e9fbf" opacity="0.85"/><rect x="10.0" y="90.30" width="1.0" height="1.5" fill="#9a6e58" opacity="0.85"/><rect x="12.0" y="90.30" width="2.0" height="1.5" fill="#94658f" opacity="0.85"/><rect x="4.0" y="92.45" width="6.0" height="1.5" fill="#9a5555" opacity="0.85"/><rect x="10.0" y="92.45" width="1.0" height="1.5" fill="#a04040" opacity="0.85"/><rect x="21.0" y="92.45" width="10.0" height="1.5" fill="#6e9fbf" opacity="0.85"/><rect x="31.0" y="92.45" width="1.0" height="1.5" fill="#8a8a8a" opacity="0.85"/><rect x="32.0" y="92.45" width="1.0" height="1.5" fill="#9a6e58" opacity="0.85"/><rect x="33.0" y="92.45" width="2.0" height="1.5" fill="#6e9fbf" opacity="0.85"/><rect x="35.0" y="92.45" width="1.0" height="1.5" fill="#9a6e58" opacity="0.85"/><rect x="36.0" y="92.45" width="1.0" height="1.5" fill="#8a8a8a" opacity="0.85"/><rect x="46.0" y="92.45" width="5.0" height="1.5" fill="#a5a57f" opacity="0.85"/><rect x="52.0" y="92.45" width="1.0" height="1.5" fill="#8a9a80" opacity="0.85"/><rect x="54.0" y="92.45" width="2.0" height="1.5" fill="#8a8a8a" opacity="0.85"/><rect x="4.0" y="94.60" width="11.0" height="1.5" fill="#9a5555" opacity="0.85"/><rect x="15.0" y="94.60" width="1.0" height="1.5" fill="#a04040" opacity="0.85"/><rect x="21.0" y="94.60" width="15.0" height="1.5" fill="#6e9fbf" opacity="0.85"/><rect x="36.0" y="94.60" width="1.0" height="1.5" fill="#8a8a8a" opacity="0.85"/><rect x="37.0" y="94.60" width="1.0" height="1.5" fill="#9a6e58" opacity="0.85"/><rect x="38.0" y="94.60" width="2.0" height="1.5" fill="#6e9fbf" opacity="0.85"/><rect x="40.0" y="94.60" width="1.0" height="1.5" fill="#9a6e58" opacity="0.85"/><rect x="41.0" y="94.60" width="1.0" height="1.5" fill="#8a8a8a" opacity="0.85"/><rect x="46.0" y="94.60" width="5.0" height="1.5" fill="#a5a57f" opacity="0.85"/><rect x="52.0" y="94.60" width="1.0" height="1.5" fill="#8a9a80" opacity="0.85"/><rect x="54.0" y="94.60" width="2.0" height="1.5" fill="#8a8a8a" opacity="0.85"/><rect x="4.0" y="96.75" width="7.0" height="1.5" fill="#9a5555" opacity="0.85"/><rect x="11.0" y="96.75" width="1.0" height="1.5" fill="#a04040" opacity="0.85"/><rect x="21.0" y="96.75" width="11.0" height="1.5" fill="#6e9fbf" opacity="0.85"/><rect x="32.0" y="96.75" width="1.0" height="1.5" fill="#8a8a8a" opacity="0.85"/><rect x="33.0" y="96.75" width="1.0" height="1.5" fill="#9a6e58" opacity="0.85"/><rect x="34.0" y="96.75" width="2.0" height="1.5" fill="#6e9fbf" opacity="0.85"/><rect x="36.0" y="96.75" width="1.0" height="1.5" fill="#9a6e58" opacity="0.85"/><rect x="37.0" y="96.75" width="1.0" height="1.5" fill="#8a8a8a" opacity="0.85"/><rect x="46.0" y="96.75" width="5.0" height="1.5" fill="#a5a57f" opacity="0.85"/><rect x="52.0" y="96.75" width="1.0" height="1.5" fill="#8a9a80" opacity="0.85"/><rect x="54.0" y="96.75" width="2.0" height="1.5" fill="#8a8a8a" opacity="0.85"/><rect x="4.0" y="98.90" width="14.0" height="1.5" fill="#9a5555" opacity="0.85"/><rect x="18.0" y="98.90" width="1.0" height="1.5" fill="#a04040" opacity="0.85"/><rect x="21.0" y="98.90" width="11.0" height="1.5" fill="#6e9fbf" opacity="0.85"/><rect x="32.0" y="98.90" width="1.0" height="1.5" fill="#8a8a8a" opacity="0.85"/><rect x="33.0" y="98.90" width="1.0" height="1.5" fill="#9a6e58" opacity="0.85"/><rect x="34.0" y="98.90" width="2.0" height="1.5" fill="#6e9fbf" opacity="0.85"/><rect x="36.0" y="98.90" width="1.0" height="1.5" fill="#9a6e58" opacity="0.85"/><rect x="37.0" y="98.90" width="1.0" height="1.5" fill="#8a8a8a" opacity="0.85"/><rect x="46.0" y="98.90" width="5.0" height="1.5" fill="#a5a57f" opacity="0.85"/><rect x="52.0" y="98.90" width="1.0" height="1.5" fill="#8a9a80" opacity="0.85"/><rect x="54.0" y="98.90" width="2.0" height="1.5" fill="#8a8a8a" opacity="0.85"/><rect x="4.0" y="101.05" width="9.0" height="1.5" fill="#9a5555" opacity="0.85"/><rect x="13.0" y="101.05" width="1.0" height="1.5" fill="#a04040" opacity="0.85"/><rect x="21.0" y="101.05" width="13.0" height="1.5" fill="#6e9fbf" opacity="0.85"/><rect x="34.0" y="101.05" width="1.0" height="1.5" fill="#8a8a8a" opacity="0.85"/><rect x="35.0" y="101.05" width="1.0" height="1.5" fill="#9a6e58" opacity="0.85"/><rect x="36.0" y="101.05" width="2.0" height="1.5" fill="#6e9fbf" opacity="0.85"/><rect x="38.0" y="101.05" width="1.0" height="1.5" fill="#9a6e58" opacity="0.85"/><rect x="39.0" y="101.05" width="1.0" height="1.5" fill="#8a8a8a" opacity="0.85"/><rect x="46.0" y="101.05" width="5.0" height="1.5" fill="#a5a57f" opacity="0.85"/><rect x="52.0" y="101.05" width="1.0" height="1.5" fill="#8a9a80" opacity="0.85"/><rect x="54.0" y="101.05" width="2.0" height="1.5" fill="#8a8a8a" opacity="0.85"/><rect x="4.0" y="103.20" width="6.0" height="1.5" fill="#9a5555" opacity="0.85"/><rect x="10.0" y="103.20" width="1.0" height="1.5" fill="#a04040" opacity="0.85"/><rect x="21.0" y="103.20" width="10.0" height="1.5" fill="#6e9fbf" opacity="0.85"/><rect x="31.0" y="103.20" width="1.0" height="1.5" fill="#8a8a8a" opacity="0.85"/><rect x="32.0" y="103.20" width="4.0" height="1.5" fill="#9a6e58" opacity="0.85"/><rect x="36.0" y="103.20" width="1.0" height="1.5" fill="#8a8a8a" opacity="0.85"/><rect x="46.0" y="103.20" width="5.0" height="1.5" fill="#a5a57f" opacity="0.85"/><rect x="54.0" y="103.20" width="2.0" height="1.5" fill="#8a8a8a" opacity="0.85"/><rect x="4.0" y="105.35" width="1.0" height="1.5" fill="#8a8a8a" opacity="0.85"/><rect x="5.0" y="105.35" width="1.0" height="1.5" fill="#a04040" opacity="0.85"/><rect x="7.0" y="105.35" width="3.0" height="1.5" fill="#a5a57f" opacity="0.85"/><rect x="11.0" y="105.35" width="8.0" height="1.5" fill="#9a6e58" opacity="0.85"/><rect x="20.0" y="105.35" width="9.0" height="1.5" fill="#9a6e58" opacity="0.85"/><rect x="30.0" y="105.35" width="2.0" height="1.5" fill="#6e9fbf" opacity="0.85"/><rect x="32.0" y="105.35" width="1.0" height="1.5" fill="#9a6e58" opacity="0.85"/><rect x="34.0" y="105.35" width="2.0" height="1.5" fill="#8a8a8a" opacity="0.85"/><rect x="2.0" y="107.50" width="4.0" height="1.5" fill="#94658f" opacity="0.85"/><rect x="0.0" y="109.65" width="4.0" height="1.5" fill="#94658f" opacity="0.85"/><rect x="0.0" y="113.95" width="1.0" height="1.5" fill="#a89a40" opacity="0.85"/><rect x="1.0" y="113.95" width="1.0" height="1.5" fill="#94658f" opacity="0.85"/><rect x="3.0" y="113.95" width="2.0" height="1.5" fill="#8a8a8a" opacity="0.85"/><rect x="6.0" y="113.95" width="1.0" height="1.5" fill="#9a6e58" opacity="0.85"/><rect x="7.0" y="113.95" width="11.0" height="1.5" fill="#6e9fbf" opacity="0.85"/><rect x="18.0" y="113.95" width="1.0" height="1.5" fill="#9a6e58" opacity="0.85"/><rect x="20.0" y="113.95" width="1.0" height="1.5" fill="#94658f" opacity="0.85"/><rect x="21.0" y="113.95" width="1.0" height="1.5" fill="#a89a40" opacity="0.85"/><rect x="23.0" y="113.95" width="2.0" height="1.5" fill="#8a8a8a" opacity="0.85"/><rect x="26.0" y="113.95" width="3.0" height="1.5" fill="#a5a57f" opacity="0.85"/><rect x="30.0" y="113.95" width="17.0" height="1.5" fill="#9a6e58" opacity="0.85"/><rect x="48.0" y="113.95" width="6.0" height="1.5" fill="#9a6e58" opacity="0.85"/><rect x="55.0" y="113.95" width="2.0" height="1.5" fill="#9a6e58" opacity="0.85"/><rect x="58.0" y="113.95" width="9.0" height="1.5" fill="#9a6e58" opacity="0.85"/><rect x="0.0" y="118.25" width="1.0" height="1.5" fill="#4f7a3f" opacity="0.85"/><rect x="2.0" y="118.25" width="2.0" height="1.5" fill="#4f7a3f" opacity="0.85"/><rect x="5.0" y="118.25" width="5.0" height="1.5" fill="#4f7a3f" opacity="0.85"/><rect x="11.0" y="118.25" width="5.0" height="1.5" fill="#4f7a3f" opacity="0.85"/><rect x="0.0" y="120.40" width="68.0" height="1.5" fill="#4f7a3f" opacity="0.85"/><rect x="0.0" y="122.55" width="11.0" height="1.5" fill="#6e9fbf" opacity="0.85"/><rect x="11.0" y="122.55" width="2.0" height="1.5" fill="#8a8a8a" opacity="0.85"/><rect x="13.0" y="122.55" width="1.0" height="1.5" fill="#a89a40" opacity="0.85"/><rect x="14.0" y="122.55" width="1.0" height="1.5" fill="#94658f" opacity="0.85"/><rect x="16.0" y="122.55" width="11.0" height="1.5" fill="#a5a57f" opacity="0.85"/><rect x="28.0" y="122.55" width="1.0" height="1.5" fill="#8a8a8a" opacity="0.85"/><rect x="30.0" y="122.55" width="1.0" height="1.5" fill="#8a9a80" opacity="0.85"/><rect x="32.0" y="122.55" width="1.0" height="1.5" fill="#94658f" opacity="0.85"/><rect x="33.0" y="122.55" width="1.0" height="1.5" fill="#a89a40" opacity="0.85"/><rect x="0.0" y="124.70" width="2.0" height="1.5" fill="#94658f" opacity="0.85"/><rect x="3.0" y="124.70" width="1.0" height="1.5" fill="#a89a40" opacity="0.85"/><rect x="4.0" y="124.70" width="1.0" height="1.5" fill="#94658f" opacity="0.85"/><rect x="6.0" y="124.70" width="12.0" height="1.5" fill="#6e9fbf" opacity="0.85"/><rect x="19.0" y="124.70" width="3.0" height="1.5" fill="#8a8a8a" opacity="0.85"/><rect x="23.0" y="124.70" width="1.0" height="1.5" fill="#8a8a8a" opacity="0.85"/><rect x="24.0" y="124.70" width="1.0" height="1.5" fill="#3f7fb0" opacity="0.85"/><rect x="25.0" y="124.70" width="15.0" height="1.5" fill="#6e9fbf" opacity="0.85"/><rect x="40.0" y="124.70" width="3.0" height="1.5" fill="#6e9fbf" opacity="0.85"/><rect x="43.0" y="124.70" width="1.0" height="1.5" fill="#3f7fb0" opacity="0.85"/><rect x="45.0" y="124.70" width="1.0" height="1.5" fill="#94658f" opacity="0.85"/><rect x="46.0" y="124.70" width="1.0" height="1.5" fill="#a89a40" opacity="0.85"/><rect x="47.0" y="124.70" width="1.0" height="1.5" fill="#8a8a8a" opacity="0.85"/><rect x="49.0" y="124.70" width="4.0" height="1.5" fill="#94658f" opacity="0.85"/><rect x="2.0" y="126.85" width="4.0" height="1.5" fill="#a5a57f" opacity="0.85"/><rect x="7.0" y="126.85" width="14.0" height="1.5" fill="#9a6e58" opacity="0.85"/><rect x="22.0" y="126.85" width="5.0" height="1.5" fill="#9a6e58" opacity="0.85"/><rect x="28.0" y="126.85" width="5.0" height="1.5" fill="#9a6e58" opacity="0.85"/><rect x="34.0" y="126.85" width="2.0" height="1.5" fill="#9a6e58" opacity="0.85"/><rect x="36.0" y="126.85" width="1.0" height="1.5" fill="#9a6e58" opacity="0.85"/><rect x="37.0" y="126.85" width="15.0" height="1.5" fill="#6e9fbf" opacity="0.85"/><rect x="52.0" y="126.85" width="3.0" height="1.5" fill="#6e9fbf" opacity="0.85"/><rect x="55.0" y="126.85" width="2.0" height="1.5" fill="#9a6e58" opacity="0.85"/><rect x="58.0" y="126.85" width="8.0" height="1.5" fill="#9a6e58" opacity="0.85"/><rect x="2.0" y="129.00" width="6.0" height="1.5" fill="#9a6e58" opacity="0.85"/><rect x="9.0" y="129.00" width="5.0" height="1.5" fill="#9a6e58" opacity="0.85"/><rect x="15.0" y="129.00" width="2.0" height="1.5" fill="#9a6e58" opacity="0.85"/><rect x="18.0" y="129.00" width="5.0" height="1.5" fill="#9a6e58" opacity="0.85"/><rect x="24.0" y="129.00" width="1.0" height="1.5" fill="#9a6e58" opacity="0.85"/><rect x="25.0" y="129.00" width="1.0" height="1.5" fill="#9a6e58" opacity="0.85"/><rect x="26.0" y="129.00" width="11.0" height="1.5" fill="#6e9fbf" opacity="0.85"/><rect x="37.0" y="129.00" width="3.0" height="1.5" fill="#9a6e58" opacity="0.85"/><rect x="2.0" y="131.15" width="4.0" height="1.5" fill="#a5a57f" opacity="0.85"/><rect x="7.0" y="131.15" width="35.0" height="1.5" fill="#9a6e58" opacity="0.85"/><rect x="2.0" y="133.30" width="4.0" height="1.5" fill="#a5a57f" opacity="0.85"/><rect x="7.0" y="133.30" width="1.0" height="1.5" fill="#8a9a80" opacity="0.85"/><rect x="0.0" y="135.45" width="2.0" height="1.5" fill="#94658f" opacity="0.85"/><rect x="0.0" y="137.60" width="8.0" height="1.5" fill="#4f7a3f" opacity="0.85"/><rect x="9.0" y="137.60" width="5.0" height="1.5" fill="#4f7a3f" opacity="0.85"/><rect x="15.0" y="137.60" width="6.0" height="1.5" fill="#4f7a3f" opacity="0.85"/><rect x="22.0" y="137.60" width="6.0" height="1.5" fill="#4f7a3f" opacity="0.85"/><rect x="0.0" y="139.75" width="63.0" height="1.5" fill="#4f7a3f" opacity="0.85"/><rect x="2.0" y="141.90" width="8.0" height="1.5" fill="#a5a57f" opacity="0.85"/><rect x="11.0" y="141.90" width="3.0" height="1.5" fill="#9a6e58" opacity="0.85"/><rect x="15.0" y="141.90" width="8.0" height="1.5" fill="#9a6e58" opacity="0.85"/><rect x="24.0" y="141.90" width="5.0" height="1.5" fill="#9a6e58" opacity="0.85"/><rect x="30.0" y="141.90" width="5.0" height="1.5" fill="#9a6e58" opacity="0.85"/><rect x="36.0" y="141.90" width="2.0" height="1.5" fill="#9a6e58" opacity="0.85"/><rect x="0.0" y="144.05" width="4.0" height="1.5" fill="#6e9fbf" opacity="0.85"/><rect x="5.0" y="144.05" width="7.0" height="1.5" fill="#6e9fbf" opacity="0.85"/><rect x="13.0" y="144.05" width="3.0" height="1.5" fill="#6e9fbf" opacity="0.85"/><rect x="16.0" y="144.05" width="1.0" height="1.5" fill="#8a8a8a" opacity="0.85"/><rect x="17.0" y="144.05" width="3.0" height="1.5" fill="#9a6e58" opacity="0.85"/><rect x="21.0" y="144.05" width="3.0" height="1.5" fill="#9a6e58" opacity="0.85"/><rect x="25.0" y="144.05" width="7.0" height="1.5" fill="#9a6e58" opacity="0.85"/><rect x="33.0" y="144.05" width="9.0" height="1.5" fill="#9a6e58" opacity="0.85"/><rect x="43.0" y="144.05" width="3.0" height="1.5" fill="#9a6e58" opacity="0.85"/><rect x="47.0" y="144.05" width="6.0" height="1.5" fill="#9a6e58" opacity="0.85"/><rect x="54.0" y="144.05" width="3.0" height="1.5" fill="#9a6e58" opacity="0.85"/><rect x="0.0" y="146.20" width="3.0" height="1.5" fill="#94658f" opacity="0.85"/><rect x="4.0" y="146.20" width="9.0" height="1.5" fill="#6e9fbf" opacity="0.85"/><rect x="14.0" y="146.20" width="3.0" height="1.5" fill="#6e9fbf" opacity="0.85"/><rect x="17.0" y="146.20" width="6.0" height="1.5" fill="#8a8a8a" opacity="0.85"/><rect x="24.0" y="146.20" width="3.0" height="1.5" fill="#8a8a8a" opacity="0.85"/><rect x="28.0" y="146.20" width="3.0" height="1.5" fill="#8a8a8a" opacity="0.85"/><rect x="32.0" y="146.20" width="4.0" height="1.5" fill="#8a8a8a" opacity="0.85"/><rect x="0.0" y="148.35" width="8.0" height="1.5" fill="#6e9fbf" opacity="0.85"/><rect x="9.0" y="148.35" width="1.0" height="1.5" fill="#8a8a8a" opacity="0.85"/><rect x="10.0" y="148.35" width="3.0" height="1.5" fill="#9a6e58" opacity="0.85"/><rect x="14.0" y="148.35" width="4.0" height="1.5" fill="#9a6e58" opacity="0.85"/><rect x="19.0" y="148.35" width="4.0" height="1.5" fill="#9a6e58" opacity="0.85"/><rect x="24.0" y="148.35" width="3.0" height="1.5" fill="#9a6e58" opacity="0.85"/><rect x="28.0" y="148.35" width="6.0" height="1.5" fill="#9a6e58" opacity="0.85"/><rect x="35.0" y="148.35" width="6.0" height="1.5" fill="#9a6e58" opacity="0.85"/><rect x="42.0" y="148.35" width="8.0" height="1.5" fill="#9a6e58" opacity="0.85"/><rect x="51.0" y="148.35" width="3.0" height="1.5" fill="#9a6e58" opacity="0.85"/><rect x="0.0" y="150.50" width="6.0" height="1.5" fill="#6e9fbf" opacity="0.85"/><rect x="7.0" y="150.50" width="2.0" height="1.5" fill="#6e9fbf" opacity="0.85"/><rect x="9.0" y="150.50" width="7.0" height="1.5" fill="#9a6e58" opacity="0.85"/><rect x="17.0" y="150.50" width="8.0" height="1.5" fill="#9a6e58" opacity="0.85"/><rect x="26.0" y="150.50" width="4.0" height="1.5" fill="#9a6e58" opacity="0.85"/><rect x="31.0" y="150.50" width="9.0" height="1.5" fill="#9a6e58" opacity="0.85"/><rect x="41.0" y="150.50" width="8.0" height="1.5" fill="#9a6e58" opacity="0.85"/><rect x="49.0" y="150.50" width="5.0" height="1.5" fill="#6e9fbf" opacity="0.85"/><rect x="0.0" y="152.65" width="5.0" height="1.5" fill="#94658f" opacity="0.85"/><rect x="6.0" y="152.65" width="5.0" height="1.5" fill="#6e9fbf" opacity="0.85"/><rect x="12.0" y="152.65" width="5.0" height="1.5" fill="#6e9fbf" opacity="0.85"/><rect x="18.0" y="152.65" width="3.0" height="1.5" fill="#6e9fbf" opacity="0.85"/><rect x="22.0" y="152.65" width="5.0" height="1.5" fill="#6e9fbf" opacity="0.85"/><rect x="28.0" y="152.65" width="2.0" height="1.5" fill="#6e9fbf" opacity="0.85"/><rect x="30.0" y="152.65" width="3.0" height="1.5" fill="#8a8a8a" opacity="0.85"/><rect x="34.0" y="152.65" width="6.0" height="1.5" fill="#8a8a8a" opacity="0.85"/><rect x="0.0" y="154.80" width="2.0" height="1.5" fill="#94658f" opacity="0.85"/><rect x="3.0" y="154.80" width="9.0" height="1.5" fill="#6e9fbf" opacity="0.85"/><rect x="13.0" y="154.80" width="1.0" height="1.5" fill="#6e9fbf" opacity="0.85"/><rect x="14.0" y="154.80" width="6.0" height="1.5" fill="#8a8a8a" opacity="0.85"/><rect x="0.0" y="156.95" width="4.0" height="1.5" fill="#6e9fbf" opacity="0.85"/><rect x="5.0" y="156.95" width="4.0" height="1.5" fill="#6e9fbf" opacity="0.85"/><rect x="10.0" y="156.95" width="1.0" height="1.5" fill="#6e9fbf" opacity="0.85"/><rect x="11.0" y="156.95" width="1.0" height="1.5" fill="#8a8a8a" opacity="0.85"/><rect x="12.0" y="156.95" width="3.0" height="1.5" fill="#9a6e58" opacity="0.85"/><rect x="16.0" y="156.95" width="3.0" height="1.5" fill="#9a6e58" opacity="0.85"/><rect x="20.0" y="156.95" width="3.0" height="1.5" fill="#9a6e58" opacity="0.85"/><rect x="0.0" y="159.10" width="6.0" height="1.5" fill="#6e9fbf" opacity="0.85"/><rect x="6.0" y="159.10" width="6.0" height="1.5" fill="#9a6e58" opacity="0.85"/><rect x="13.0" y="159.10" width="9.0" height="1.5" fill="#9a6e58" opacity="0.85"/><rect x="23.0" y="159.10" width="6.0" height="1.5" fill="#9a6e58" opacity="0.85"/><rect x="30.0" y="159.10" width="4.0" height="1.5" fill="#9a6e58" opacity="0.85"/><rect x="35.0" y="159.10" width="5.0" height="1.5" fill="#9a6e58" opacity="0.85"/><rect x="40.0" y="159.10" width="7.0" height="1.5" fill="#6e9fbf" opacity="0.85"/><rect x="2.0" y="161.25" width="6.0" height="1.5" fill="#a5a57f" opacity="0.85"/><rect x="9.0" y="161.25" width="4.0" height="1.5" fill="#9a6e58" opacity="0.85"/><rect x="14.0" y="161.25" width="6.0" height="1.5" fill="#9a6e58" opacity="0.85"/><rect x="21.0" y="161.25" width="7.0" height="1.5" fill="#9a6e58" opacity="0.85"/><rect x="29.0" y="161.25" width="4.0" height="1.5" fill="#9a6e58" opacity="0.85"/><rect x="34.0" y="161.25" width="8.0" height="1.5" fill="#9a6e58" opacity="0.85"/><rect x="43.0" y="161.25" width="9.0" height="1.5" fill="#9a6e58" opacity="0.85"/><rect x="53.0" y="161.25" width="2.0" height="1.5" fill="#9a6e58" opacity="0.85"/><rect x="0.0" y="169.85" width="3.0" height="1.5" fill="#4f7a3f" opacity="0.85"/><rect x="4.0" y="169.85" width="7.0" height="1.5" fill="#4f7a3f" opacity="0.85"/><rect x="12.0" y="169.85" width="5.0" height="1.5" fill="#4f7a3f" opacity="0.85"/><rect x="18.0" y="169.85" width="5.0" height="1.5" fill="#4f7a3f" opacity="0.85"/><rect x="24.0" y="169.85" width="3.0" height="1.5" fill="#4f7a3f" opacity="0.85"/><rect x="0.0" y="172.00" width="65.0" height="1.5" fill="#4f7a3f" opacity="0.85"/><rect x="0.0" y="174.15" width="6.0" height="1.5" fill="#6e9fbf" opacity="0.85"/><rect x="7.0" y="174.15" width="4.0" height="1.5" fill="#6e9fbf" opacity="0.85"/><rect x="12.0" y="174.15" width="2.0" height="1.5" fill="#6e9fbf" opacity="0.85"/><rect x="14.0" y="174.15" width="1.0" height="1.5" fill="#8a8a8a" opacity="0.85"/><rect x="15.0" y="174.15" width="6.0" height="1.5" fill="#9a6e58" opacity="0.85"/><rect x="22.0" y="174.15" width="9.0" height="1.5" fill="#9a6e58" opacity="0.85"/><rect x="32.0" y="174.15" width="6.0" height="1.5" fill="#9a6e58" opacity="0.85"/><rect x="0.0" y="178.45" width="57.0" height="1.5" fill="#4f7a3f" opacity="0.85"/><rect x="0.0" y="180.60" width="4.0" height="1.5" fill="#6e9fbf" opacity="0.85"/><rect x="5.0" y="180.60" width="3.0" height="1.5" fill="#6e9fbf" opacity="0.85"/><rect x="8.0" y="180.60" width="1.0" height="1.5" fill="#8a8a8a" opacity="0.85"/><rect x="9.0" y="180.60" width="6.0" height="1.5" fill="#9a6e58" opacity="0.85"/><rect x="16.0" y="180.60" width="4.0" height="1.5" fill="#9a6e58" opacity="0.85"/><rect x="21.0" y="180.60" width="8.0" height="1.5" fill="#9a6e58" opacity="0.85"/><rect x="30.0" y="180.60" width="2.0" height="1.5" fill="#9a6e58" opacity="0.85"/><rect x="0.0" y="182.75" width="5.0" height="1.5" fill="#6e9fbf" opacity="0.85"/><rect x="6.0" y="182.75" width="4.0" height="1.5" fill="#6e9fbf" opacity="0.85"/><rect x="11.0" y="182.75" width="6.0" height="1.5" fill="#6e9fbf" opacity="0.85"/><rect x="17.0" y="182.75" width="1.0" height="1.5" fill="#8a8a8a" opacity="0.85"/><rect x="18.0" y="182.75" width="7.0" height="1.5" fill="#9a6e58" opacity="0.85"/><rect x="26.0" y="182.75" width="4.0" height="1.5" fill="#9a6e58" opacity="0.85"/><rect x="31.0" y="182.75" width="3.0" height="1.5" fill="#9a6e58" opacity="0.85"/><rect x="0.0" y="187.05" width="4.0" height="1.5" fill="#6e9fbf" opacity="0.85"/><rect x="5.0" y="187.05" width="4.0" height="1.5" fill="#6e9fbf" opacity="0.85"/><rect x="10.0" y="187.05" width="5.0" height="1.5" fill="#6e9fbf" opacity="0.85"/><rect x="15.0" y="187.05" width="1.0" height="1.5" fill="#8a8a8a" opacity="0.85"/><rect x="16.0" y="187.05" width="8.0" height="1.5" fill="#9a6e58" opacity="0.85"/><rect x="25.0" y="187.05" width="7.0" height="1.5" fill="#9a6e58" opacity="0.85"/><rect x="33.0" y="187.05" width="4.0" height="1.5" fill="#9a6e58" opacity="0.85"/><rect x="38.0" y="187.05" width="4.0" height="1.5" fill="#9a6e58" opacity="0.85"/><rect x="0.0" y="191.35" width="4.0" height="1.5" fill="#94658f" opacity="0.85"/><rect x="5.0" y="191.35" width="6.0" height="1.5" fill="#6e9fbf" opacity="0.85"/><rect x="12.0" y="191.35" width="6.0" height="1.5" fill="#6e9fbf" opacity="0.85"/><rect x="19.0" y="191.35" width="7.0" height="1.5" fill="#6e9fbf" opacity="0.85"/><rect x="27.0" y="191.35" width="7.0" height="1.5" fill="#8a8a8a" opacity="0.85"/><rect x="0.0" y="195.65" width="3.0" height="1.5" fill="#6e9fbf" opacity="0.85"/><rect x="4.0" y="195.65" width="6.0" height="1.5" fill="#6e9fbf" opacity="0.85"/><rect x="11.0" y="195.65" width="3.0" height="1.5" fill="#6e9fbf" opacity="0.85"/><rect x="15.0" y="195.65" width="3.0" height="1.5" fill="#6e9fbf" opacity="0.85"/><rect x="18.0" y="195.65" width="1.0" height="1.5" fill="#8a8a8a" opacity="0.85"/><rect x="19.0" y="195.65" width="3.0" height="1.5" fill="#9a6e58" opacity="0.85"/><rect x="23.0" y="195.65" width="3.0" height="1.5" fill="#9a6e58" opacity="0.85"/><rect x="27.0" y="195.65" width="7.0" height="1.5" fill="#9a6e58" opacity="0.85"/><rect x="35.0" y="195.65" width="5.0" height="1.5" fill="#9a6e58" opacity="0.85"/><rect x="41.0" y="195.65" width="3.0" height="1.5" fill="#9a6e58" opacity="0.85"/><rect x="0.0" y="199.95" width="3.0" height="1.5" fill="#4f7a3f" opacity="0.85"/><rect x="4.0" y="199.95" width="6.0" height="1.5" fill="#4f7a3f" opacity="0.85"/><rect x="11.0" y="199.95" width="5.0" height="1.5" fill="#4f7a3f" opacity="0.85"/><rect x="17.0" y="199.95" width="8.0" height="1.5" fill="#4f7a3f" opacity="0.85"/><rect x="0.0" y="202.10" width="59.0" height="1.5" fill="#4f7a3f" opacity="0.85"/><rect x="0.0" y="204.25" width="5.0" height="1.5" fill="#6e9fbf" opacity="0.85"/><rect x="6.0" y="204.25" width="2.0" height="1.5" fill="#6e9fbf" opacity="0.85"/><rect x="8.0" y="204.25" width="3.0" height="1.5" fill="#9a6e58" opacity="0.85"/><rect x="12.0" y="204.25" width="7.0" height="1.5" fill="#9a6e58" opacity="0.85"/><rect x="20.0" y="204.25" width="8.0" height="1.5" fill="#9a6e58" opacity="0.85"/><rect x="29.0" y="204.25" width="3.0" height="1.5" fill="#9a6e58" opacity="0.85"/><rect x="33.0" y="204.25" width="6.0" height="1.5" fill="#9a6e58" opacity="0.85"/><rect x="40.0" y="204.25" width="3.0" height="1.5" fill="#9a6e58" opacity="0.85"/><rect x="43.0" y="204.25" width="8.0" height="1.5" fill="#6e9fbf" opacity="0.85"/><rect x="2.0" y="206.40" width="4.0" height="1.5" fill="#a5a57f" opacity="0.85"/><rect x="7.0" y="206.40" width="5.0" height="1.5" fill="#9a6e58" opacity="0.85"/><rect x="13.0" y="206.40" width="5.0" height="1.5" fill="#9a6e58" opacity="0.85"/><rect x="19.0" y="206.40" width="4.0" height="1.5" fill="#9a6e58" opacity="0.85"/><rect x="24.0" y="206.40" width="3.0" height="1.5" fill="#9a6e58" opacity="0.85"/><rect x="28.0" y="206.40" width="2.0" height="1.5" fill="#9a6e58" opacity="0.85"/><rect x="0.0" y="208.55" width="6.0" height="1.5" fill="#6e9fbf" opacity="0.85"/><rect x="7.0" y="208.55" width="7.0" height="1.5" fill="#6e9fbf" opacity="0.85"/><rect x="15.0" y="208.55" width="1.0" height="1.5" fill="#6e9fbf" opacity="0.85"/><rect x="16.0" y="208.55" width="1.0" height="1.5" fill="#8a8a8a" opacity="0.85"/><rect x="17.0" y="208.55" width="8.0" height="1.5" fill="#9a6e58" opacity="0.85"/><rect x="26.0" y="208.55" width="3.0" height="1.5" fill="#9a6e58" opacity="0.85"/><rect x="30.0" y="208.55" width="1.0" height="1.5" fill="#9a6e58" opacity="0.85"/><rect x="0.0" y="210.70" width="8.0" height="1.5" fill="#6e9fbf" opacity="0.85"/><rect x="9.0" y="210.70" width="2.0" height="1.5" fill="#6e9fbf" opacity="0.85"/><rect x="11.0" y="210.70" width="1.0" height="1.5" fill="#8a8a8a" opacity="0.85"/><rect x="12.0" y="210.70" width="4.0" height="1.5" fill="#9a6e58" opacity="0.85"/><rect x="17.0" y="210.70" width="6.0" height="1.5" fill="#9a6e58" opacity="0.85"/><rect x="2.0" y="215.00" width="5.0" height="1.5" fill="#a5a57f" opacity="0.85"/><rect x="8.0" y="215.00" width="5.0" height="1.5" fill="#9a6e58" opacity="0.85"/><rect x="14.0" y="215.00" width="5.0" height="1.5" fill="#9a6e58" opacity="0.85"/><rect x="20.0" y="215.00" width="3.0" height="1.5" fill="#9a6e58" opacity="0.85"/><rect x="24.0" y="215.00" width="2.0" height="1.5" fill="#9a6e58" opacity="0.85"/><rect x="0.0" y="219.30" width="6.0" height="1.5" fill="#6e9fbf" opacity="0.85"/><rect x="7.0" y="219.30" width="3.0" height="1.5" fill="#6e9fbf" opacity="0.85"/><rect x="11.0" y="219.30" width="5.0" height="1.5" fill="#6e9fbf" opacity="0.85"/><rect x="16.0" y="219.30" width="1.0" height="1.5" fill="#8a8a8a" opacity="0.85"/><rect x="17.0" y="219.30" width="9.0" height="1.5" fill="#9a6e58" opacity="0.85"/><rect x="27.0" y="219.30" width="6.0" height="1.5" fill="#9a6e58" opacity="0.85"/><rect x="34.0" y="219.30" width="1.0" height="1.5" fill="#9a6e58" opacity="0.85"/><rect x="0.0" y="223.60" width="3.0" height="1.5" fill="#6e9fbf" opacity="0.85"/><rect x="4.0" y="223.60" width="9.0" height="1.5" fill="#6e9fbf" opacity="0.85"/><rect x="14.0" y="223.60" width="1.0" height="1.5" fill="#6e9fbf" opacity="0.85"/><rect x="15.0" y="223.60" width="1.0" height="1.5" fill="#8a8a8a" opacity="0.85"/><rect x="16.0" y="223.60" width="7.0" height="1.5" fill="#9a6e58" opacity="0.85"/><rect x="24.0" y="223.60" width="3.0" height="1.5" fill="#9a6e58" opacity="0.85"/><rect x="28.0" y="223.60" width="7.0" height="1.5" fill="#9a6e58" opacity="0.85"/><rect x="36.0" y="223.60" width="8.0" height="1.5" fill="#9a6e58" opacity="0.85"/><rect x="45.0" y="223.60" width="2.0" height="1.5" fill="#9a6e58" opacity="0.85"/><rect x="0.0" y="225.75" width="3.0" height="1.5" fill="#94658f" opacity="0.85"/><rect x="4.0" y="225.75" width="6.0" height="1.5" fill="#6e9fbf" opacity="0.85"/><rect x="11.0" y="225.75" width="7.0" height="1.5" fill="#6e9fbf" opacity="0.85"/><rect x="19.0" y="225.75" width="3.0" height="1.5" fill="#6e9fbf" opacity="0.85"/><rect x="23.0" y="225.75" width="7.0" height="1.5" fill="#6e9fbf" opacity="0.85"/><rect x="31.0" y="225.75" width="1.0" height="1.5" fill="#6e9fbf" opacity="0.85"/><rect x="32.0" y="225.75" width="6.0" height="1.5" fill="#8a8a8a" opacity="0.85"/><rect x="0.0" y="230.05" width="8.0" height="1.5" fill="#4f7a3f" opacity="0.85"/><rect x="9.0" y="230.05" width="3.0" height="1.5" fill="#4f7a3f" opacity="0.85"/><rect x="13.0" y="230.05" width="3.0" height="1.5" fill="#4f7a3f" opacity="0.85"/><rect x="0.0" y="232.20" width="56.0" height="1.5" fill="#4f7a3f" opacity="0.85"/><rect x="0.0" y="234.35" width="9.0" height="1.5" fill="#4f7a3f" opacity="0.85"/><rect x="10.0" y="234.35" width="7.0" height="1.5" fill="#4f7a3f" opacity="0.85"/><rect x="18.0" y="234.35" width="8.0" height="1.5" fill="#4f7a3f" opacity="0.85"/><rect x="27.0" y="234.35" width="6.0" height="1.5" fill="#4f7a3f" opacity="0.85"/><rect x="34.0" y="234.35" width="5.0" height="1.5" fill="#4f7a3f" opacity="0.85"/><rect x="40.0" y="234.35" width="3.0" height="1.5" fill="#4f7a3f" opacity="0.85"/><rect x="44.0" y="234.35" width="2.0" height="1.5" fill="#4f7a3f" opacity="0.85"/><rect x="0.0" y="236.50" width="7.0" height="1.5" fill="#6e9fbf" opacity="0.85"/><rect x="7.0" y="236.50" width="5.0" height="1.5" fill="#9a6e58" opacity="0.85"/><rect x="13.0" y="236.50" width="4.0" height="1.5" fill="#9a6e58" opacity="0.85"/><rect x="18.0" y="236.50" width="8.0" height="1.5" fill="#9a6e58" opacity="0.85"/><rect x="27.0" y="236.50" width="7.0" height="1.5" fill="#9a6e58" opacity="0.85"/><rect x="35.0" y="236.50" width="4.0" height="1.5" fill="#9a6e58" opacity="0.85"/><rect x="40.0" y="236.50" width="7.0" height="1.5" fill="#9a6e58" opacity="0.85"/><rect x="48.0" y="236.50" width="4.0" height="1.5" fill="#9a6e58" opacity="0.85"/><rect x="53.0" y="236.50" width="3.0" height="1.5" fill="#9a6e58" opacity="0.85"/><rect x="56.0" y="236.50" width="5.0" height="1.5" fill="#6e9fbf" opacity="0.85"/><rect x="62.0" y="236.50" width="6.0" height="1.5" fill="#6e9fbf" opacity="0.85"/><rect x="2.0" y="238.65" width="6.0" height="1.5" fill="#a5a57f" opacity="0.85"/><rect x="9.0" y="238.65" width="1.0" height="1.5" fill="#a5a57f" opacity="0.85"/><rect x="11.0" y="238.65" width="4.0" height="1.5" fill="#9a6e58" opacity="0.85"/><rect x="16.0" y="238.65" width="5.0" height="1.5" fill="#9a6e58" opacity="0.85"/><rect x="22.0" y="238.65" width="6.0" height="1.5" fill="#9a6e58" opacity="0.85"/><rect x="29.0" y="238.65" width="2.0" height="1.5" fill="#9a6e58" opacity="0.85"/><rect x="2.0" y="240.80" width="5.0" height="1.5" fill="#a5a57f" opacity="0.85"/><rect x="8.0" y="240.80" width="2.0" height="1.5" fill="#a5a57f" opacity="0.85"/><rect x="11.0" y="240.80" width="8.0" height="1.5" fill="#9a6e58" opacity="0.85"/><rect x="20.0" y="240.80" width="6.0" height="1.5" fill="#9a6e58" opacity="0.85"/><rect x="0.0" y="242.95" width="9.0" height="1.5" fill="#6e9fbf" opacity="0.85"/><rect x="9.0" y="242.95" width="1.0" height="1.5" fill="#8a8a8a" opacity="0.85"/><rect x="10.0" y="242.95" width="9.0" height="1.5" fill="#9a6e58" opacity="0.85"/><rect x="20.0" y="242.95" width="9.0" height="1.5" fill="#9a6e58" opacity="0.85"/><rect x="30.0" y="242.95" width="4.0" height="1.5" fill="#9a6e58" opacity="0.85"/><rect x="35.0" y="242.95" width="4.0" height="1.5" fill="#9a6e58" opacity="0.85"/><rect x="40.0" y="242.95" width="6.0" height="1.5" fill="#9a6e58" opacity="0.85"/><rect x="47.0" y="242.95" width="3.0" height="1.5" fill="#9a6e58" opacity="0.85"/><rect x="0.0" y="249.40" width="8.0" height="1.5" fill="#4f7a3f" opacity="0.85"/><rect x="9.0" y="249.40" width="8.0" height="1.5" fill="#4f7a3f" opacity="0.85"/><rect x="18.0" y="249.40" width="5.0" height="1.5" fill="#4f7a3f" opacity="0.85"/><rect x="0.0" y="251.55" width="58.0" height="1.5" fill="#4f7a3f" opacity="0.85"/><rect x="0.0" y="253.70" width="7.0" height="1.5" fill="#6e9fbf" opacity="0.85"/><rect x="8.0" y="253.70" width="5.0" height="1.5" fill="#6e9fbf" opacity="0.85"/><rect x="13.0" y="253.70" width="1.0" height="1.5" fill="#8a8a8a" opacity="0.85"/><rect x="14.0" y="253.70" width="5.0" height="1.5" fill="#9a6e58" opacity="0.85"/><rect x="20.0" y="253.70" width="6.0" height="1.5" fill="#9a6e58" opacity="0.85"/><rect x="0.0" y="255.85" width="6.0" height="1.5" fill="#6e9fbf" opacity="0.85"/><rect x="6.0" y="255.85" width="9.0" height="1.5" fill="#9a6e58" opacity="0.85"/><rect x="16.0" y="255.85" width="7.0" height="1.5" fill="#9a6e58" opacity="0.85"/><rect x="24.0" y="255.85" width="3.0" height="1.5" fill="#9a6e58" opacity="0.85"/><rect x="28.0" y="255.85" width="8.0" height="1.5" fill="#9a6e58" opacity="0.85"/><rect x="37.0" y="255.85" width="4.0" height="1.5" fill="#9a6e58" opacity="0.85"/><rect x="42.0" y="255.85" width="6.0" height="1.5" fill="#9a6e58" opacity="0.85"/><rect x="49.0" y="255.85" width="3.0" height="1.5" fill="#9a6e58" opacity="0.85"/><rect x="52.0" y="255.85" width="7.0" height="1.5" fill="#6e9fbf" opacity="0.85"/><rect x="0.0" y="258.00" width="4.0" height="1.5" fill="#6e9fbf" opacity="0.85"/><rect x="5.0" y="258.00" width="3.0" height="1.5" fill="#6e9fbf" opacity="0.85"/><rect x="9.0" y="258.00" width="6.0" height="1.5" fill="#6e9fbf" opacity="0.85"/><rect x="15.0" y="258.00" width="1.0" height="1.5" fill="#8a8a8a" opacity="0.85"/><rect x="16.0" y="258.00" width="9.0" height="1.5" fill="#9a6e58" opacity="0.85"/><rect x="26.0" y="258.00" width="5.0" height="1.5" fill="#9a6e58" opacity="0.85"/><rect x="32.0" y="258.00" width="4.0" height="1.5" fill="#9a6e58" opacity="0.85"/><rect x="37.0" y="258.00" width="6.0" height="1.5" fill="#9a6e58" opacity="0.85"/><rect x="0.0" y="260.15" width="4.0" height="1.5" fill="#4f7a3f" opacity="0.85"/><rect x="5.0" y="260.15" width="9.0" height="1.5" fill="#4f7a3f" opacity="0.85"/><rect x="15.0" y="260.15" width="3.0" height="1.5" fill="#4f7a3f" opacity="0.85"/><rect x="19.0" y="260.15" width="8.0" height="1.5" fill="#4f7a3f" opacity="0.85"/><rect x="28.0" y="260.15" width="3.0" height="1.5" fill="#4f7a3f" opacity="0.85"/><rect x="32.0" y="260.15" width="6.0" height="1.5" fill="#4f7a3f" opacity="0.85"/><rect x="39.0" y="260.15" width="3.0" height="1.5" fill="#4f7a3f" opacity="0.85"/><rect x="43.0" y="260.15" width="3.0" height="1.5" fill="#4f7a3f" opacity="0.85"/><rect x="2.0" y="262.30" width="7.0" height="1.5" fill="#a5a57f" opacity="0.85"/><rect x="11.0" y="262.30" width="8.0" height="1.5" fill="#9a6e58" opacity="0.85"/><rect x="20.0" y="262.30" width="8.0" height="1.5" fill="#9a6e58" opacity="0.85"/><rect x="29.0" y="262.30" width="9.0" height="1.5" fill="#9a6e58" opacity="0.85"/><rect x="39.0" y="262.30" width="5.0" height="1.5" fill="#9a6e58" opacity="0.85"/><rect x="45.0" y="262.30" width="3.0" height="1.5" fill="#9a6e58" opacity="0.85"/><rect x="49.0" y="262.30" width="8.0" height="1.5" fill="#9a6e58" opacity="0.85"/><rect x="0.0" y="264.45" width="5.0" height="1.5" fill="#94658f" opacity="0.85"/><rect x="6.0" y="264.45" width="4.0" height="1.5" fill="#6e9fbf" opacity="0.85"/><rect x="11.0" y="264.45" width="4.0" height="1.5" fill="#6e9fbf" opacity="0.85"/><rect x="16.0" y="264.45" width="9.0" height="1.5" fill="#6e9fbf" opacity="0.85"/><rect x="26.0" y="264.45" width="7.0" height="1.5" fill="#8a8a8a" opacity="0.85"/><rect x="0.0" y="266.60" width="6.0" height="1.5" fill="#6e9fbf" opacity="0.85"/><rect x="6.0" y="266.60" width="6.0" height="1.5" fill="#9a6e58" opacity="0.85"/><rect x="13.0" y="266.60" width="5.0" height="1.5" fill="#9a6e58" opacity="0.85"/><rect x="19.0" y="266.60" width="4.0" height="1.5" fill="#9a6e58" opacity="0.85"/><rect x="24.0" y="266.60" width="8.0" height="1.5" fill="#9a6e58" opacity="0.85"/><rect x="33.0" y="266.60" width="3.0" height="1.5" fill="#9a6e58" opacity="0.85"/><rect x="37.0" y="266.60" width="9.0" height="1.5" fill="#9a6e58" opacity="0.85"/><rect x="47.0" y="266.60" width="6.0" height="1.5" fill="#9a6e58" opacity="0.85"/><rect x="53.0" y="266.60" width="5.0" height="1.5" fill="#6e9fbf" opacity="0.85"/><rect x="0.0" y="270.90" width="4.0" height="1.5" fill="#4f7a3f" opacity="0.85"/><rect x="5.0" y="270.90" width="4.0" height="1.5" fill="#4f7a3f" opacity="0.85"/><rect x="10.0" y="270.90" width="5.0" height="1.5" fill="#4f7a3f" opacity="0.85"/><rect x="0.0" y="273.05" width="57.0" height="1.5" fill="#4f7a3f" opacity="0.85"/><rect x="0.0" y="275.20" width="3.0" height="1.5" fill="#6e9fbf" opacity="0.85"/><rect x="4.0" y="275.20" width="5.0" height="1.5" fill="#6e9fbf" opacity="0.85"/><rect x="10.0" y="275.20" width="3.0" height="1.5" fill="#6e9fbf" opacity="0.85"/><rect x="13.0" y="275.20" width="1.0" height="1.5" fill="#8a8a8a" opacity="0.85"/><rect x="14.0" y="275.20" width="9.0" height="1.5" fill="#9a6e58" opacity="0.85"/><rect x="24.0" y="275.20" width="5.0" height="1.5" fill="#9a6e58" opacity="0.85"/><rect x="30.0" y="275.20" width="5.0" height="1.5" fill="#9a6e58" opacity="0.85"/><rect x="36.0" y="275.20" width="8.0" height="1.5" fill="#9a6e58" opacity="0.85"/><rect x="45.0" y="275.20" width="9.0" height="1.5" fill="#9a6e58" opacity="0.85"/><rect x="55.0" y="275.20" width="3.0" height="1.5" fill="#9a6e58" opacity="0.85"/><rect x="0.0" y="277.35" width="3.0" height="1.5" fill="#94658f" opacity="0.85"/><rect x="4.0" y="277.35" width="5.0" height="1.5" fill="#6e9fbf" opacity="0.85"/><rect x="10.0" y="277.35" width="7.0" height="1.5" fill="#6e9fbf" opacity="0.85"/><rect x="18.0" y="277.35" width="3.0" height="1.5" fill="#6e9fbf" opacity="0.85"/><rect x="22.0" y="277.35" width="3.0" height="1.5" fill="#6e9fbf" opacity="0.85"/><rect x="26.0" y="277.35" width="6.0" height="1.5" fill="#8a8a8a" opacity="0.85"/><rect x="33.0" y="277.35" width="5.0" height="1.5" fill="#8a8a8a" opacity="0.85"/><rect x="0.0" y="281.65" width="66.0" height="1.5" fill="#4f7a3f" opacity="0.85"/><rect x="2.0" y="283.80" width="7.0" height="1.5" fill="#a5a57f" opacity="0.85"/><rect x="10.0" y="283.80" width="7.0" height="1.5" fill="#9a6e58" opacity="0.85"/><rect x="18.0" y="283.80" width="6.0" height="1.5" fill="#9a6e58" opacity="0.85"/><rect x="25.0" y="283.80" width="9.0" height="1.5" fill="#9a6e58" opacity="0.85"/><rect x="35.0" y="283.80" width="5.0" height="1.5" fill="#9a6e58" opacity="0.85"/><rect x="41.0" y="283.80" width="6.0" height="1.5" fill="#9a6e58" opacity="0.85"/><rect x="48.0" y="283.80" width="3.0" height="1.5" fill="#9a6e58" opacity="0.85"/><rect x="52.0" y="283.80" width="2.0" height="1.5" fill="#9a6e58" opacity="0.85"/><rect x="0.0" y="285.95" width="8.0" height="1.5" fill="#6e9fbf" opacity="0.85"/><rect x="8.0" y="285.95" width="1.0" height="1.5" fill="#8a8a8a" opacity="0.85"/><rect x="9.0" y="285.95" width="9.0" height="1.5" fill="#9a6e58" opacity="0.85"/><rect x="19.0" y="285.95" width="3.0" height="1.5" fill="#9a6e58" opacity="0.85"/><rect x="23.0" y="285.95" width="6.0" height="1.5" fill="#9a6e58" opacity="0.85"/><rect x="30.0" y="285.95" width="9.0" height="1.5" fill="#9a6e58" opacity="0.85"/><rect x="40.0" y="285.95" width="3.0" height="1.5" fill="#9a6e58" opacity="0.85"/><rect x="0.0" y="288.10" width="4.0" height="1.5" fill="#94658f" opacity="0.85"/><rect x="5.0" y="288.10" width="4.0" height="1.5" fill="#6e9fbf" opacity="0.85"/><rect x="10.0" y="288.10" width="7.0" height="1.5" fill="#6e9fbf" opacity="0.85"/><rect x="18.0" y="288.10" width="5.0" height="1.5" fill="#6e9fbf" opacity="0.85"/><rect x="24.0" y="288.10" width="5.0" height="1.5" fill="#6e9fbf" opacity="0.85"/><rect x="29.0" y="288.10" width="9.0" height="1.5" fill="#8a8a8a" opacity="0.85"/><rect x="39.0" y="288.10" width="4.0" height="1.5" fill="#8a8a8a" opacity="0.85"/><rect x="0.0" y="290.25" width="3.0" height="1.5" fill="#94658f" opacity="0.85"/><rect x="4.0" y="290.25" width="6.0" height="1.5" fill="#6e9fbf" opacity="0.85"/><rect x="11.0" y="290.25" width="4.0" height="1.5" fill="#6e9fbf" opacity="0.85"/><rect x="16.0" y="290.25" width="1.0" height="1.5" fill="#6e9fbf" opacity="0.85"/><rect x="17.0" y="290.25" width="8.0" height="1.5" fill="#8a8a8a" opacity="0.85"/><rect x="0.0" y="294.55" width="9.0" height="1.5" fill="#4f7a3f" opacity="0.85"/><rect x="10.0" y="294.55" width="7.0" height="1.5" fill="#4f7a3f" opacity="0.85"/><rect x="18.0" y="294.55" width="3.0" height="1.5" fill="#4f7a3f" opacity="0.85"/><rect x="22.0" y="294.55" width="6.0" height="1.5" fill="#4f7a3f" opacity="0.85"/><rect x="29.0" y="294.55" width="1.0" height="1.5" fill="#4f7a3f" opacity="0.85"/><rect x="0.0" y="296.70" width="65.0" height="1.5" fill="#4f7a3f" opacity="0.85"/><rect x="0.0" y="298.85" width="51.0" height="1.5" fill="#4f7a3f" opacity="0.85"/><rect x="0.0" y="301.00" width="2.0" height="1.5" fill="#94658f" opacity="0.85"/><rect x="3.0" y="301.00" width="8.0" height="1.5" fill="#6e9fbf" opacity="0.85"/><rect x="12.0" y="301.00" width="4.0" height="1.5" fill="#6e9fbf" opacity="0.85"/><rect x="17.0" y="301.00" width="3.0" height="1.5" fill="#6e9fbf" opacity="0.85"/><rect x="20.0" y="301.00" width="7.0" height="1.5" fill="#8a8a8a" opacity="0.85"/><rect x="28.0" y="301.00" width="6.0" height="1.5" fill="#8a8a8a" opacity="0.85"/><rect x="35.0" y="301.00" width="4.0" height="1.5" fill="#8a8a8a" opacity="0.85"/><rect x="2.0" y="303.15" width="6.0" height="1.5" fill="#a5a57f" opacity="0.85"/><rect x="9.0" y="303.15" width="9.0" height="1.5" fill="#9a6e58" opacity="0.85"/><rect x="19.0" y="303.15" width="6.0" height="1.5" fill="#9a6e58" opacity="0.85"/><rect x="26.0" y="303.15" width="5.0" height="1.5" fill="#9a6e58" opacity="0.85"/><rect x="32.0" y="303.15" width="4.0" height="1.5" fill="#9a6e58" opacity="0.85"/><rect x="37.0" y="303.15" width="6.0" height="1.5" fill="#9a6e58" opacity="0.85"/><rect x="44.0" y="303.15" width="6.0" height="1.5" fill="#9a6e58" opacity="0.85"/><rect x="51.0" y="303.15" width="4.0" height="1.5" fill="#9a6e58" opacity="0.85"/><rect x="56.0" y="303.15" width="3.0" height="1.5" fill="#9a6e58" opacity="0.85"/><rect x="0.0" y="305.30" width="4.0" height="1.5" fill="#94658f" opacity="0.85"/><rect x="5.0" y="305.30" width="6.0" height="1.5" fill="#6e9fbf" opacity="0.85"/><rect x="12.0" y="305.30" width="9.0" height="1.5" fill="#6e9fbf" opacity="0.85"/><rect x="22.0" y="305.30" width="2.0" height="1.5" fill="#6e9fbf" opacity="0.85"/><rect x="24.0" y="305.30" width="7.0" height="1.5" fill="#8a8a8a" opacity="0.85"/><rect x="32.0" y="305.30" width="5.0" height="1.5" fill="#8a8a8a" opacity="0.85"/><rect x="38.0" y="305.30" width="3.0" height="1.5" fill="#8a8a8a" opacity="0.85"/><rect x="0.0" y="307.45" width="59.0" height="1.5" fill="#4f7a3f" opacity="0.85"/><rect x="0.0" y="309.60" width="4.0" height="1.5" fill="#6e9fbf" opacity="0.85"/><rect x="5.0" y="309.60" width="5.0" height="1.5" fill="#6e9fbf" opacity="0.85"/><rect x="10.0" y="309.60" width="1.0" height="1.5" fill="#8a8a8a" opacity="0.85"/><rect x="11.0" y="309.60" width="7.0" height="1.5" fill="#9a6e58" opacity="0.85"/><rect x="19.0" y="309.60" width="3.0" height="1.5" fill="#9a6e58" opacity="0.85"/><rect x="23.0" y="309.60" width="5.0" height="1.5" fill="#9a6e58" opacity="0.85"/><rect x="29.0" y="309.60" width="4.0" height="1.5" fill="#9a6e58" opacity="0.85"/><rect x="34.0" y="309.60" width="8.0" height="1.5" fill="#9a6e58" opacity="0.85"/><rect x="43.0" y="309.60" width="9.0" height="1.5" fill="#9a6e58" opacity="0.85"/><rect x="53.0" y="309.60" width="2.0" height="1.5" fill="#9a6e58" opacity="0.85"/><rect x="2.0" y="311.75" width="3.0" height="1.5" fill="#a5a57f" opacity="0.85"/><rect x="6.0" y="311.75" width="4.0" height="1.5" fill="#a5a57f" opacity="0.85"/><rect x="11.0" y="311.75" width="4.0" height="1.5" fill="#9a6e58" opacity="0.85"/><rect x="16.0" y="311.75" width="4.0" height="1.5" fill="#9a6e58" opacity="0.85"/><rect x="21.0" y="311.75" width="3.0" height="1.5" fill="#9a6e58" opacity="0.85"/><rect x="25.0" y="311.75" width="8.0" height="1.5" fill="#9a6e58" opacity="0.85"/><rect x="34.0" y="311.75" width="5.0" height="1.5" fill="#9a6e58" opacity="0.85"/><rect x="40.0" y="311.75" width="5.0" height="1.5" fill="#9a6e58" opacity="0.85"/><rect x="46.0" y="311.75" width="8.0" height="1.5" fill="#9a6e58" opacity="0.85"/><rect x="55.0" y="311.75" width="2.0" height="1.5" fill="#9a6e58" opacity="0.85"/><rect x="0.0" y="313.90" width="4.0" height="1.5" fill="#6e9fbf" opacity="0.85"/><rect x="5.0" y="313.90" width="7.0" height="1.5" fill="#6e9fbf" opacity="0.85"/><rect x="13.0" y="313.90" width="3.0" height="1.5" fill="#6e9fbf" opacity="0.85"/><rect x="16.0" y="313.90" width="1.0" height="1.5" fill="#8a8a8a" opacity="0.85"/><rect x="17.0" y="313.90" width="3.0" height="1.5" fill="#9a6e58" opacity="0.85"/><rect x="21.0" y="313.90" width="6.0" height="1.5" fill="#9a6e58" opacity="0.85"/><rect x="28.0" y="313.90" width="6.0" height="1.5" fill="#9a6e58" opacity="0.85"/><rect x="2.0" y="316.05" width="7.0" height="1.5" fill="#a5a57f" opacity="0.85"/><rect x="11.0" y="316.05" width="3.0" height="1.5" fill="#9a6e58" opacity="0.85"/><rect x="15.0" y="316.05" width="9.0" height="1.5" fill="#9a6e58" opacity="0.85"/><rect x="25.0" y="316.05" width="7.0" height="1.5" fill="#9a6e58" opacity="0.85"/><rect x="33.0" y="316.05" width="7.0" height="1.5" fill="#9a6e58" opacity="0.85"/><rect x="41.0" y="316.05" width="5.0" height="1.5" fill="#9a6e58" opacity="0.85"/><rect x="47.0" y="316.05" width="3.0" height="1.5" fill="#9a6e58" opacity="0.85"/><rect x="0.0" y="320.35" width="53.0" height="1.5" fill="#4f7a3f" opacity="0.85"/><rect x="0.0" y="322.50" width="54.0" height="1.5" fill="#4f7a3f" opacity="0.85"/><rect x="0.0" y="326.80" width="7.0" height="1.5" fill="#4f7a3f" opacity="0.85"/><rect x="8.0" y="326.80" width="8.0" height="1.5" fill="#4f7a3f" opacity="0.85"/><rect x="17.0" y="326.80" width="3.0" height="1.5" fill="#4f7a3f" opacity="0.85"/><rect x="0.0" y="328.95" width="66.0" height="1.5" fill="#4f7a3f" opacity="0.85"/><rect x="0.0" y="331.10" width="9.0" height="1.5" fill="#4f7a3f" opacity="0.85"/><rect x="10.0" y="331.10" width="5.0" height="1.5" fill="#4f7a3f" opacity="0.85"/><rect x="16.0" y="331.10" width="3.0" height="1.5" fill="#4f7a3f" opacity="0.85"/><rect x="20.0" y="331.10" width="1.0" height="1.5" fill="#4f7a3f" opacity="0.85"/><rect x="2.0" y="333.25" width="7.0" height="1.5" fill="#a5a57f" opacity="0.85"/><rect x="10.0" y="333.25" width="7.0" height="1.5" fill="#9a6e58" opacity="0.85"/><rect x="18.0" y="333.25" width="8.0" height="1.5" fill="#9a6e58" opacity="0.85"/><rect x="27.0" y="333.25" width="9.0" height="1.5" fill="#9a6e58" opacity="0.85"/><rect x="37.0" y="333.25" width="5.0" height="1.5" fill="#9a6e58" opacity="0.85"/><rect x="43.0" y="333.25" width="7.0" height="1.5" fill="#9a6e58" opacity="0.85"/><rect x="51.0" y="333.25" width="7.0" height="1.5" fill="#9a6e58" opacity="0.85"/><rect x="0.0" y="335.40" width="3.0" height="1.5" fill="#94658f" opacity="0.85"/><rect x="4.0" y="335.40" width="9.0" height="1.5" fill="#6e9fbf" opacity="0.85"/><rect x="14.0" y="335.40" width="4.0" height="1.5" fill="#6e9fbf" opacity="0.85"/><rect x="19.0" y="335.40" width="9.0" height="1.5" fill="#6e9fbf" opacity="0.85"/><rect x="29.0" y="335.40" width="3.0" height="1.5" fill="#6e9fbf" opacity="0.85"/><rect x="33.0" y="335.40" width="1.0" height="1.5" fill="#6e9fbf" opacity="0.85"/><rect x="34.0" y="335.40" width="3.0" height="1.5" fill="#8a8a8a" opacity="0.85"/><rect x="38.0" y="335.40" width="3.0" height="1.5" fill="#8a8a8a" opacity="0.85"/><rect x="42.0" y="335.40" width="3.0" height="1.5" fill="#8a8a8a" opacity="0.85"/><rect x="2.0" y="337.55" width="8.0" height="1.5" fill="#a5a57f" opacity="0.85"/><rect x="11.0" y="337.55" width="7.0" height="1.5" fill="#9a6e58" opacity="0.85"/><rect x="19.0" y="337.55" width="7.0" height="1.5" fill="#9a6e58" opacity="0.85"/><rect x="27.0" y="337.55" width="7.0" height="1.5" fill="#9a6e58" opacity="0.85"/><rect x="35.0" y="337.55" width="7.0" height="1.5" fill="#9a6e58" opacity="0.85"/><rect x="43.0" y="337.55" width="6.0" height="1.5" fill="#9a6e58" opacity="0.85"/><rect x="50.0" y="337.55" width="4.0" height="1.5" fill="#9a6e58" opacity="0.85"/><rect x="55.0" y="337.55" width="4.0" height="1.5" fill="#9a6e58" opacity="0.85"/><rect x="60.0" y="337.55" width="4.0" height="1.5" fill="#9a6e58" opacity="0.85"/><rect x="0.0" y="339.70" width="3.0" height="1.5" fill="#94658f" opacity="0.85"/><rect x="4.0" y="339.70" width="3.0" height="1.5" fill="#6e9fbf" opacity="0.85"/><rect x="8.0" y="339.70" width="4.0" height="1.5" fill="#6e9fbf" opacity="0.85"/><rect x="13.0" y="339.70" width="4.0" height="1.5" fill="#6e9fbf" opacity="0.85"/><rect x="18.0" y="339.70" width="3.0" height="1.5" fill="#6e9fbf" opacity="0.85"/><rect x="21.0" y="339.70" width="4.0" height="1.5" fill="#8a8a8a" opacity="0.85"/><rect x="26.0" y="339.70" width="5.0" height="1.5" fill="#8a8a8a" opacity="0.85"/><rect x="32.0" y="339.70" width="5.0" height="1.5" fill="#8a8a8a" opacity="0.85"/><rect x="0.0" y="341.85" width="3.0" height="1.5" fill="#4f7a3f" opacity="0.85"/><rect x="4.0" y="341.85" width="7.0" height="1.5" fill="#4f7a3f" opacity="0.85"/><rect x="12.0" y="341.85" width="3.0" height="1.5" fill="#4f7a3f" opacity="0.85"/><rect x="16.0" y="341.85" width="4.0" height="1.5" fill="#4f7a3f" opacity="0.85"/><rect x="21.0" y="341.85" width="8.0" height="1.5" fill="#4f7a3f" opacity="0.85"/><rect x="30.0" y="341.85" width="6.0" height="1.5" fill="#4f7a3f" opacity="0.85"/><rect x="37.0" y="341.85" width="3.0" height="1.5" fill="#4f7a3f" opacity="0.85"/><rect x="0.0" y="344.00" width="3.0" height="1.5" fill="#94658f" opacity="0.85"/><rect x="4.0" y="344.00" width="9.0" height="1.5" fill="#6e9fbf" opacity="0.85"/><rect x="14.0" y="344.00" width="3.0" height="1.5" fill="#6e9fbf" opacity="0.85"/><rect x="18.0" y="344.00" width="2.0" height="1.5" fill="#6e9fbf" opacity="0.85"/><rect x="20.0" y="344.00" width="6.0" height="1.5" fill="#8a8a8a" opacity="0.85"/><rect x="27.0" y="344.00" width="4.0" height="1.5" fill="#8a8a8a" opacity="0.85"/><rect x="0.0" y="346.15" width="6.0" height="1.5" fill="#4f7a3f" opacity="0.85"/><rect x="7.0" y="346.15" width="7.0" height="1.5" fill="#4f7a3f" opacity="0.85"/><rect x="15.0" y="346.15" width="5.0" height="1.5" fill="#4f7a3f" opacity="0.85"/><rect x="21.0" y="346.15" width="6.0" height="1.5" fill="#4f7a3f" opacity="0.85"/><rect x="0.0" y="348.30" width="4.0" height="1.5" fill="#4f7a3f" opacity="0.85"/><rect x="5.0" y="348.30" width="7.0" height="1.5" fill="#4f7a3f" opacity="0.85"/><rect x="13.0" y="348.30" width="5.0" height="1.5" fill="#4f7a3f" opacity="0.85"/><rect x="19.0" y="348.30" width="3.0" height="1.5" fill="#4f7a3f" opacity="0.85"/><rect x="23.0" y="348.30" width="5.0" height="1.5" fill="#4f7a3f" opacity="0.85"/><rect x="0.0" y="350.45" width="6.0" height="1.5" fill="#6e9fbf" opacity="0.85"/><rect x="6.0" y="350.45" width="8.0" height="1.5" fill="#9a6e58" opacity="0.85"/><rect x="15.0" y="350.45" width="3.0" height="1.5" fill="#9a6e58" opacity="0.85"/><rect x="19.0" y="350.45" width="9.0" height="1.5" fill="#9a6e58" opacity="0.85"/><rect x="29.0" y="350.45" width="4.0" height="1.5" fill="#9a6e58" opacity="0.85"/><rect x="34.0" y="350.45" width="4.0" height="1.5" fill="#9a6e58" opacity="0.85"/><rect x="38.0" y="350.45" width="6.0" height="1.5" fill="#6e9fbf" opacity="0.85"/><rect x="2.0" y="352.60" width="7.0" height="1.5" fill="#a5a57f" opacity="0.85"/><rect x="10.0" y="352.60" width="6.0" height="1.5" fill="#9a6e58" opacity="0.85"/><rect x="17.0" y="352.60" width="6.0" height="1.5" fill="#9a6e58" opacity="0.85"/><rect x="24.0" y="352.60" width="5.0" height="1.5" fill="#9a6e58" opacity="0.85"/><rect x="30.0" y="352.60" width="8.0" height="1.5" fill="#9a6e58" opacity="0.85"/><rect x="39.0" y="352.60" width="5.0" height="1.5" fill="#9a6e58" opacity="0.85"/><rect x="45.0" y="352.60" width="6.0" height="1.5" fill="#9a6e58" opacity="0.85"/><rect x="52.0" y="352.60" width="4.0" height="1.5" fill="#9a6e58" opacity="0.85"/><rect x="57.0" y="352.60" width="2.0" height="1.5" fill="#9a6e58" opacity="0.85"/><rect x="0.0" y="354.75" width="5.0" height="1.5" fill="#6e9fbf" opacity="0.85"/><rect x="5.0" y="354.75" width="4.0" height="1.5" fill="#9a6e58" opacity="0.85"/><rect x="10.0" y="354.75" width="3.0" height="1.5" fill="#9a6e58" opacity="0.85"/><rect x="14.0" y="354.75" width="7.0" height="1.5" fill="#9a6e58" opacity="0.85"/><rect x="22.0" y="354.75" width="9.0" height="1.5" fill="#9a6e58" opacity="0.85"/><rect x="31.0" y="354.75" width="3.0" height="1.5" fill="#6e9fbf" opacity="0.85"/><rect x="35.0" y="354.75" width="5.0" height="1.5" fill="#6e9fbf" opacity="0.85"/><rect x="41.0" y="354.75" width="1.0" height="1.5" fill="#6e9fbf" opacity="0.85"/><rect x="0.0" y="356.90" width="2.0" height="1.5" fill="#94658f" opacity="0.85"/><rect x="3.0" y="356.90" width="9.0" height="1.5" fill="#6e9fbf" opacity="0.85"/><rect x="13.0" y="356.90" width="3.0" height="1.5" fill="#6e9fbf" opacity="0.85"/><rect x="16.0" y="356.90" width="8.0" height="1.5" fill="#8a8a8a" opacity="0.85"/><rect x="25.0" y="356.90" width="2.0" height="1.5" fill="#8a8a8a" opacity="0.85"/><rect x="0.0" y="361.20" width="5.0" height="1.5" fill="#4f7a3f" opacity="0.85"/><rect x="6.0" y="361.20" width="6.0" height="1.5" fill="#4f7a3f" opacity="0.85"/><rect x="13.0" y="361.20" width="6.0" height="1.5" fill="#4f7a3f" opacity="0.85"/><rect x="20.0" y="361.20" width="6.0" height="1.5" fill="#4f7a3f" opacity="0.85"/><rect x="0.0" y="363.35" width="64.0" height="1.5" fill="#4f7a3f" opacity="0.85"/><rect x="0.0" y="365.50" width="3.0" height="1.5" fill="#6e9fbf" opacity="0.85"/><rect x="4.0" y="365.50" width="9.0" height="1.5" fill="#6e9fbf" opacity="0.85"/><rect x="14.0" y="365.50" width="3.0" height="1.5" fill="#6e9fbf" opacity="0.85"/><rect x="17.0" y="365.50" width="1.0" height="1.5" fill="#8a8a8a" opacity="0.85"/><rect x="18.0" y="365.50" width="8.0" height="1.5" fill="#9a6e58" opacity="0.85"/><rect x="27.0" y="365.50" width="6.0" height="1.5" fill="#9a6e58" opacity="0.85"/><rect x="34.0" y="365.50" width="3.0" height="1.5" fill="#9a6e58" opacity="0.85"/><rect x="38.0" y="365.50" width="3.0" height="1.5" fill="#9a6e58" opacity="0.85"/><rect x="42.0" y="365.50" width="5.0" height="1.5" fill="#9a6e58" opacity="0.85"/><rect x="48.0" y="365.50" width="1.0" height="1.5" fill="#9a6e58" opacity="0.85"/><rect x="0.0" y="367.65" width="6.0" height="1.5" fill="#6e9fbf" opacity="0.85"/><rect x="6.0" y="367.65" width="5.0" height="1.5" fill="#9a6e58" opacity="0.85"/><rect x="12.0" y="367.65" width="5.0" height="1.5" fill="#9a6e58" opacity="0.85"/><rect x="18.0" y="367.65" width="7.0" height="1.5" fill="#9a6e58" opacity="0.85"/><rect x="26.0" y="367.65" width="7.0" height="1.5" fill="#9a6e58" opacity="0.85"/><rect x="34.0" y="367.65" width="6.0" height="1.5" fill="#6e9fbf" opacity="0.85"/><rect x="0.0" y="369.80" width="7.0" height="1.5" fill="#6e9fbf" opacity="0.85"/><rect x="8.0" y="369.80" width="2.0" height="1.5" fill="#6e9fbf" opacity="0.85"/><rect x="10.0" y="369.80" width="7.0" height="1.5" fill="#9a6e58" opacity="0.85"/><rect x="18.0" y="369.80" width="7.0" height="1.5" fill="#9a6e58" opacity="0.85"/><rect x="26.0" y="369.80" width="9.0" height="1.5" fill="#9a6e58" opacity="0.85"/><rect x="35.0" y="369.80" width="3.0" height="1.5" fill="#6e9fbf" opacity="0.85"/><rect x="39.0" y="369.80" width="7.0" height="1.5" fill="#6e9fbf" opacity="0.85"/><rect x="0.0" y="371.95" width="6.0" height="1.5" fill="#6e9fbf" opacity="0.85"/><rect x="7.0" y="371.95" width="6.0" height="1.5" fill="#6e9fbf" opacity="0.85"/><rect x="13.0" y="371.95" width="1.0" height="1.5" fill="#8a8a8a" opacity="0.85"/><rect x="14.0" y="371.95" width="8.0" height="1.5" fill="#9a6e58" opacity="0.85"/><rect x="23.0" y="371.95" width="3.0" height="1.5" fill="#9a6e58" opacity="0.85"/><rect x="27.0" y="371.95" width="7.0" height="1.5" fill="#9a6e58" opacity="0.85"/><rect x="35.0" y="371.95" width="7.0" height="1.5" fill="#9a6e58" opacity="0.85"/><rect x="43.0" y="371.95" width="8.0" height="1.5" fill="#9a6e58" opacity="0.85"/><rect x="52.0" y="371.95" width="6.0" height="1.5" fill="#9a6e58" opacity="0.85"/><rect x="0.0" y="374.10" width="5.0" height="1.5" fill="#94658f" opacity="0.85"/><rect x="6.0" y="374.10" width="3.0" height="1.5" fill="#6e9fbf" opacity="0.85"/><rect x="10.0" y="374.10" width="6.0" height="1.5" fill="#6e9fbf" opacity="0.85"/><rect x="17.0" y="374.10" width="4.0" height="1.5" fill="#6e9fbf" opacity="0.85"/><rect x="21.0" y="374.10" width="6.0" height="1.5" fill="#8a8a8a" opacity="0.85"/><rect x="28.0" y="374.10" width="6.0" height="1.5" fill="#8a8a8a" opacity="0.85"/><rect x="35.0" y="374.10" width="3.0" height="1.5" fill="#8a8a8a" opacity="0.85"/><rect x="0.0" y="376.25" width="9.0" height="1.5" fill="#6e9fbf" opacity="0.85"/><rect x="10.0" y="376.25" width="1.0" height="1.5" fill="#8a8a8a" opacity="0.85"/><rect x="11.0" y="376.25" width="6.0" height="1.5" fill="#9a6e58" opacity="0.85"/><rect x="18.0" y="376.25" width="7.0" height="1.5" fill="#9a6e58" opacity="0.85"/><rect x="0.0" y="378.40" width="6.0" height="1.5" fill="#6e9fbf" opacity="0.85"/><rect x="6.0" y="378.40" width="7.0" height="1.5" fill="#9a6e58" opacity="0.85"/><rect x="14.0" y="378.40" width="7.0" height="1.5" fill="#9a6e58" opacity="0.85"/><rect x="22.0" y="378.40" width="3.0" height="1.5" fill="#9a6e58" opacity="0.85"/><rect x="26.0" y="378.40" width="6.0" height="1.5" fill="#9a6e58" opacity="0.85"/><rect x="33.0" y="378.40" width="6.0" height="1.5" fill="#9a6e58" opacity="0.85"/><rect x="40.0" y="378.40" width="1.0" height="1.5" fill="#9a6e58" opacity="0.85"/><rect x="41.0" y="378.40" width="6.0" height="1.5" fill="#6e9fbf" opacity="0.85"/><rect x="2.0" y="382.70" width="5.0" height="1.5" fill="#a5a57f" opacity="0.85"/><rect x="8.0" y="382.70" width="2.0" height="1.5" fill="#a5a57f" opacity="0.85"/><rect x="11.0" y="382.70" width="6.0" height="1.5" fill="#9a6e58" opacity="0.85"/><rect x="18.0" y="382.70" width="7.0" height="1.5" fill="#9a6e58" opacity="0.85"/><rect x="26.0" y="382.70" width="3.0" height="1.5" fill="#9a6e58" opacity="0.85"/><rect x="0.0" y="384.85" width="5.0" height="1.5" fill="#6e9fbf" opacity="0.85"/><rect x="6.0" y="384.85" width="7.0" height="1.5" fill="#6e9fbf" opacity="0.85"/><rect x="14.0" y="384.85" width="4.0" height="1.5" fill="#6e9fbf" opacity="0.85"/><rect x="18.0" y="384.85" width="1.0" height="1.5" fill="#8a8a8a" opacity="0.85"/><rect x="19.0" y="384.85" width="6.0" height="1.5" fill="#9a6e58" opacity="0.85"/><rect x="26.0" y="384.85" width="8.0" height="1.5" fill="#9a6e58" opacity="0.85"/><rect x="35.0" y="384.85" width="5.0" height="1.5" fill="#9a6e58" opacity="0.85"/><rect x="41.0" y="384.85" width="7.0" height="1.5" fill="#9a6e58" opacity="0.85"/><rect x="0.0" y="387.00" width="5.0" height="1.5" fill="#6e9fbf" opacity="0.85"/><rect x="6.0" y="387.00" width="8.0" height="1.5" fill="#6e9fbf" opacity="0.85"/><rect x="15.0" y="387.00" width="3.0" height="1.5" fill="#6e9fbf" opacity="0.85"/><rect x="18.0" y="387.00" width="1.0" height="1.5" fill="#8a8a8a" opacity="0.85"/><rect x="19.0" y="387.00" width="8.0" height="1.5" fill="#9a6e58" opacity="0.85"/><rect x="28.0" y="387.00" width="5.0" height="1.5" fill="#9a6e58" opacity="0.85"/><rect x="34.0" y="387.00" width="3.0" height="1.5" fill="#9a6e58" opacity="0.85"/><rect x="38.0" y="387.00" width="3.0" height="1.5" fill="#9a6e58" opacity="0.85"/><rect x="42.0" y="387.00" width="9.0" height="1.5" fill="#9a6e58" opacity="0.85"/><rect x="52.0" y="387.00" width="2.0" height="1.5" fill="#9a6e58" opacity="0.85"/><rect x="0.0" y="389.15" width="2.0" height="1.5" fill="#94658f" opacity="0.85"/><rect x="3.0" y="389.15" width="7.0" height="1.5" fill="#6e9fbf" opacity="0.85"/><rect x="11.0" y="389.15" width="3.0" height="1.5" fill="#6e9fbf" opacity="0.85"/><rect x="15.0" y="389.15" width="8.0" height="1.5" fill="#6e9fbf" opacity="0.85"/><rect x="24.0" y="389.15" width="1.0" height="1.5" fill="#6e9fbf" opacity="0.85"/><rect x="25.0" y="389.15" width="6.0" height="1.5" fill="#8a8a8a" opacity="0.85"/><rect x="32.0" y="389.15" width="9.0" height="1.5" fill="#8a8a8a" opacity="0.85"/><rect x="42.0" y="389.15" width="3.0" height="1.5" fill="#8a8a8a" opacity="0.85"/><rect x="0.0" y="391.30" width="2.0" height="1.5" fill="#94658f" opacity="0.85"/><rect x="3.0" y="391.30" width="6.0" height="1.5" fill="#6e9fbf" opacity="0.85"/><rect x="10.0" y="391.30" width="3.0" height="1.5" fill="#6e9fbf" opacity="0.85"/><rect x="14.0" y="391.30" width="5.0" height="1.5" fill="#6e9fbf" opacity="0.85"/><rect x="20.0" y="391.30" width="5.0" height="1.5" fill="#6e9fbf" opacity="0.85"/><rect x="25.0" y="391.30" width="5.0" height="1.5" fill="#8a8a8a" opacity="0.85"/><rect x="0.0" y="393.45" width="6.0" height="1.5" fill="#6e9fbf" opacity="0.85"/><rect x="7.0" y="393.45" width="2.0" height="1.5" fill="#6e9fbf" opacity="0.85"/><rect x="9.0" y="393.45" width="1.0" height="1.5" fill="#8a8a8a" opacity="0.85"/><rect x="10.0" y="393.45" width="7.0" height="1.5" fill="#9a6e58" opacity="0.85"/><rect x="18.0" y="393.45" width="8.0" height="1.5" fill="#9a6e58" opacity="0.85"/><rect x="27.0" y="393.45" width="5.0" height="1.5" fill="#9a6e58" opacity="0.85"/><rect x="33.0" y="393.45" width="2.0" height="1.5" fill="#9a6e58" opacity="0.85"/><rect x="0.0" y="397.75" width="7.0" height="1.5" fill="#4f7a3f" opacity="0.85"/><rect x="8.0" y="397.75" width="9.0" height="1.5" fill="#4f7a3f" opacity="0.85"/><rect x="18.0" y="397.75" width="3.0" height="1.5" fill="#4f7a3f" opacity="0.85"/><rect x="0.0" y="399.90" width="61.0" height="1.5" fill="#4f7a3f" opacity="0.85"/><rect x="0.0" y="402.05" width="5.0" height="1.5" fill="#6e9fbf" opacity="0.85"/><rect x="6.0" y="402.05" width="5.0" height="1.5" fill="#6e9fbf" opacity="0.85"/><rect x="11.0" y="402.05" width="1.0" height="1.5" fill="#8a8a8a" opacity="0.85"/><rect x="12.0" y="402.05" width="7.0" height="1.5" fill="#9a6e58" opacity="0.85"/><rect x="20.0" y="402.05" width="4.0" height="1.5" fill="#9a6e58" opacity="0.85"/><rect x="2.0" y="404.20" width="7.0" height="1.5" fill="#a5a57f" opacity="0.85"/><rect x="10.0" y="404.20" width="8.0" height="1.5" fill="#9a6e58" opacity="0.85"/><rect x="19.0" y="404.20" width="7.0" height="1.5" fill="#9a6e58" opacity="0.85"/><rect x="27.0" y="404.20" width="7.0" height="1.5" fill="#9a6e58" opacity="0.85"/><rect x="0.0" y="406.35" width="7.0" height="1.5" fill="#4f7a3f" opacity="0.85"/><rect x="8.0" y="406.35" width="4.0" height="1.5" fill="#4f7a3f" opacity="0.85"/><rect x="13.0" y="406.35" width="8.0" height="1.5" fill="#4f7a3f" opacity="0.85"/><rect x="22.0" y="406.35" width="5.0" height="1.5" fill="#4f7a3f" opacity="0.85"/><rect x="28.0" y="406.35" width="7.0" height="1.5" fill="#4f7a3f" opacity="0.85"/><rect x="0.0" y="408.50" width="2.0" height="1.5" fill="#94658f" opacity="0.85"/><rect x="3.0" y="408.50" width="4.0" height="1.5" fill="#6e9fbf" opacity="0.85"/><rect x="8.0" y="408.50" width="4.0" height="1.5" fill="#6e9fbf" opacity="0.85"/><rect x="13.0" y="408.50" width="1.0" height="1.5" fill="#6e9fbf" opacity="0.85"/><rect x="14.0" y="408.50" width="7.0" height="1.5" fill="#8a8a8a" opacity="0.85"/><rect x="22.0" y="408.50" width="8.0" height="1.5" fill="#8a8a8a" opacity="0.85"/><rect x="31.0" y="408.50" width="1.0" height="1.5" fill="#8a8a8a" opacity="0.85"/><rect x="2.0" y="410.65" width="5.0" height="1.5" fill="#a5a57f" opacity="0.85"/><rect x="8.0" y="410.65" width="8.0" height="1.5" fill="#9a6e58" opacity="0.85"/><rect x="17.0" y="410.65" width="3.0" height="1.5" fill="#9a6e58" opacity="0.85"/><rect x="21.0" y="410.65" width="5.0" height="1.5" fill="#9a6e58" opacity="0.85"/><rect x="2.0" y="412.80" width="5.0" height="1.5" fill="#a5a57f" opacity="0.85"/><rect x="8.0" y="412.80" width="3.0" height="1.5" fill="#9a6e58" opacity="0.85"/><rect x="12.0" y="412.80" width="3.0" height="1.5" fill="#9a6e58" opacity="0.85"/><rect x="16.0" y="412.80" width="5.0" height="1.5" fill="#9a6e58" opacity="0.85"/><rect x="22.0" y="412.80" width="5.0" height="1.5" fill="#9a6e58" opacity="0.85"/><rect x="28.0" y="412.80" width="2.0" height="1.5" fill="#9a6e58" opacity="0.85"/><rect x="2.0" y="414.95" width="5.0" height="1.5" fill="#a5a57f" opacity="0.85"/><rect x="8.0" y="414.95" width="3.0" height="1.5" fill="#9a6e58" opacity="0.85"/><rect x="12.0" y="414.95" width="7.0" height="1.5" fill="#9a6e58" opacity="0.85"/><rect x="20.0" y="414.95" width="3.0" height="1.5" fill="#9a6e58" opacity="0.85"/><rect x="24.0" y="414.95" width="3.0" height="1.5" fill="#9a6e58" opacity="0.85"/><rect x="28.0" y="414.95" width="4.0" height="1.5" fill="#9a6e58" opacity="0.85"/><rect x="33.0" y="414.95" width="7.0" height="1.5" fill="#9a6e58" opacity="0.85"/><rect x="41.0" y="414.95" width="5.0" height="1.5" fill="#9a6e58" opacity="0.85"/><rect x="47.0" y="414.95" width="3.0" height="1.5" fill="#9a6e58" opacity="0.85"/><rect x="51.0" y="414.95" width="9.0" height="1.5" fill="#9a6e58" opacity="0.85"/><rect x="61.0" y="414.95" width="3.0" height="1.5" fill="#9a6e58" opacity="0.85"/><rect x="2.0" y="417.10" width="8.0" height="1.5" fill="#a5a57f" opacity="0.85"/><rect x="11.0" y="417.10" width="4.0" height="1.5" fill="#9a6e58" opacity="0.85"/><rect x="16.0" y="417.10" width="7.0" height="1.5" fill="#9a6e58" opacity="0.85"/><rect x="24.0" y="417.10" width="4.0" height="1.5" fill="#9a6e58" opacity="0.85"/><rect x="29.0" y="417.10" width="8.0" height="1.5" fill="#9a6e58" opacity="0.85"/><rect x="38.0" y="417.10" width="4.0" height="1.5" fill="#9a6e58" opacity="0.85"/><rect x="0.0" y="419.25" width="5.0" height="1.5" fill="#94658f" opacity="0.85"/><rect x="6.0" y="419.25" width="6.0" height="1.5" fill="#6e9fbf" opacity="0.85"/><rect x="13.0" y="419.25" width="6.0" height="1.5" fill="#6e9fbf" opacity="0.85"/><rect x="20.0" y="419.25" width="5.0" height="1.5" fill="#6e9fbf" opacity="0.85"/><rect x="26.0" y="419.25" width="1.0" height="1.5" fill="#6e9fbf" opacity="0.85"/><rect x="27.0" y="419.25" width="5.0" height="1.5" fill="#8a8a8a" opacity="0.85"/><rect x="33.0" y="419.25" width="3.0" height="1.5" fill="#8a8a8a" opacity="0.85"/><rect x="0.0" y="421.40" width="66.0" height="1.5" fill="#4f7a3f" opacity="0.85"/><rect x="0.0" y="423.55" width="6.0" height="1.5" fill="#6e9fbf" opacity="0.85"/><rect x="7.0" y="423.55" width="8.0" height="1.5" fill="#6e9fbf" opacity="0.85"/><rect x="15.0" y="423.55" width="1.0" height="1.5" fill="#8a8a8a" opacity="0.85"/><rect x="16.0" y="423.55" width="4.0" height="1.5" fill="#9a6e58" opacity="0.85"/><rect x="21.0" y="423.55" width="9.0" height="1.5" fill="#9a6e58" opacity="0.85"/><rect x="31.0" y="423.55" width="2.0" height="1.5" fill="#9a6e58" opacity="0.85"/><rect x="2.0" y="425.70" width="6.0" height="1.5" fill="#a5a57f" opacity="0.85"/><rect x="9.0" y="425.70" width="3.0" height="1.5" fill="#9a6e58" opacity="0.85"/><rect x="13.0" y="425.70" width="9.0" height="1.5" fill="#9a6e58" opacity="0.85"/><rect x="23.0" y="425.70" width="3.0" height="1.5" fill="#9a6e58" opacity="0.85"/><rect x="27.0" y="425.70" width="6.0" height="1.5" fill="#9a6e58" opacity="0.85"/><rect x="34.0" y="425.70" width="9.0" height="1.5" fill="#9a6e58" opacity="0.85"/><rect x="44.0" y="425.70" width="9.0" height="1.5" fill="#9a6e58" opacity="0.85"/><rect x="54.0" y="425.70" width="2.0" height="1.5" fill="#9a6e58" opacity="0.85"/><rect x="0.0" y="430.00" width="5.0" height="1.5" fill="#4f7a3f" opacity="0.85"/><rect x="6.0" y="430.00" width="8.0" height="1.5" fill="#4f7a3f" opacity="0.85"/><rect x="15.0" y="430.00" width="5.0" height="1.5" fill="#4f7a3f" opacity="0.85"/><rect x="0.0" y="432.15" width="62.0" height="1.5" fill="#4f7a3f" opacity="0.85"/><rect x="0.0" y="434.30" width="7.0" height="1.5" fill="#6e9fbf" opacity="0.85"/><rect x="7.0" y="434.30" width="5.0" height="1.5" fill="#9a6e58" opacity="0.85"/><rect x="13.0" y="434.30" width="5.0" height="1.5" fill="#9a6e58" opacity="0.85"/><rect x="19.0" y="434.30" width="3.0" height="1.5" fill="#9a6e58" opacity="0.85"/><rect x="23.0" y="434.30" width="5.0" height="1.5" fill="#9a6e58" opacity="0.85"/><rect x="29.0" y="434.30" width="8.0" height="1.5" fill="#9a6e58" opacity="0.85"/><rect x="38.0" y="434.30" width="6.0" height="1.5" fill="#9a6e58" opacity="0.85"/><rect x="45.0" y="434.30" width="7.0" height="1.5" fill="#9a6e58" opacity="0.85"/><rect x="52.0" y="434.30" width="7.0" height="1.5" fill="#6e9fbf" opacity="0.85"/><rect x="2.0" y="436.45" width="7.0" height="1.5" fill="#a5a57f" opacity="0.85"/><rect x="11.0" y="436.45" width="8.0" height="1.5" fill="#9a6e58" opacity="0.85"/><rect x="20.0" y="436.45" width="5.0" height="1.5" fill="#9a6e58" opacity="0.85"/><rect x="26.0" y="436.45" width="6.0" height="1.5" fill="#9a6e58" opacity="0.85"/><rect x="33.0" y="436.45" width="7.0" height="1.5" fill="#9a6e58" opacity="0.85"/><rect x="41.0" y="436.45" width="5.0" height="1.5" fill="#9a6e58" opacity="0.85"/><rect x="0.0" y="438.60" width="5.0" height="1.5" fill="#6e9fbf" opacity="0.85"/><rect x="6.0" y="438.60" width="4.0" height="1.5" fill="#6e9fbf" opacity="0.85"/><rect x="10.0" y="438.60" width="1.0" height="1.5" fill="#8a8a8a" opacity="0.85"/><rect x="11.0" y="438.60" width="5.0" height="1.5" fill="#9a6e58" opacity="0.85"/><rect x="17.0" y="438.60" width="4.0" height="1.5" fill="#9a6e58" opacity="0.85"/><rect x="22.0" y="438.60" width="6.0" height="1.5" fill="#9a6e58" opacity="0.85"/><rect x="29.0" y="438.60" width="8.0" height="1.5" fill="#9a6e58" opacity="0.85"/><rect x="38.0" y="438.60" width="7.0" height="1.5" fill="#9a6e58" opacity="0.85"/><rect x="46.0" y="438.60" width="2.0" height="1.5" fill="#9a6e58" opacity="0.85"/><rect x="0.0" y="440.75" width="2.0" height="1.5" fill="#94658f" opacity="0.85"/><rect x="3.0" y="440.75" width="3.0" height="1.5" fill="#6e9fbf" opacity="0.85"/><rect x="7.0" y="440.75" width="5.0" height="1.5" fill="#6e9fbf" opacity="0.85"/><rect x="13.0" y="440.75" width="9.0" height="1.5" fill="#6e9fbf" opacity="0.85"/><rect x="23.0" y="440.75" width="4.0" height="1.5" fill="#6e9fbf" opacity="0.85"/><rect x="27.0" y="440.75" width="3.0" height="1.5" fill="#8a8a8a" opacity="0.85"/><rect x="31.0" y="440.75" width="5.0" height="1.5" fill="#8a8a8a" opacity="0.85"/><rect x="37.0" y="440.75" width="5.0" height="1.5" fill="#8a8a8a" opacity="0.85"/><rect x="0.0" y="447.20" width="5.0" height="1.5" fill="#94658f" opacity="0.85"/><rect x="6.0" y="447.20" width="6.0" height="1.5" fill="#6e9fbf" opacity="0.85"/><rect x="13.0" y="447.20" width="7.0" height="1.5" fill="#6e9fbf" opacity="0.85"/><rect x="21.0" y="447.20" width="6.0" height="1.5" fill="#6e9fbf" opacity="0.85"/><rect x="28.0" y="447.20" width="2.0" height="1.5" fill="#6e9fbf" opacity="0.85"/><rect x="30.0" y="447.20" width="4.0" height="1.5" fill="#8a8a8a" opacity="0.85"/><rect x="35.0" y="447.20" width="8.0" height="1.5" fill="#8a8a8a" opacity="0.85"/><rect x="0.0" y="449.35" width="4.0" height="1.5" fill="#6e9fbf" opacity="0.85"/><rect x="4.0" y="449.35" width="7.0" height="1.5" fill="#9a6e58" opacity="0.85"/><rect x="12.0" y="449.35" width="5.0" height="1.5" fill="#9a6e58" opacity="0.85"/><rect x="18.0" y="449.35" width="8.0" height="1.5" fill="#9a6e58" opacity="0.85"/><rect x="26.0" y="449.35" width="6.0" height="1.5" fill="#6e9fbf" opacity="0.85"/><rect x="33.0" y="449.35" width="2.0" height="1.5" fill="#6e9fbf" opacity="0.85"/><rect x="0.0" y="451.50" width="4.0" height="1.5" fill="#6e9fbf" opacity="0.85"/><rect x="5.0" y="451.50" width="9.0" height="1.5" fill="#6e9fbf" opacity="0.85"/><rect x="15.0" y="451.50" width="3.0" height="1.5" fill="#6e9fbf" opacity="0.85"/><rect x="18.0" y="451.50" width="1.0" height="1.5" fill="#8a8a8a" opacity="0.85"/><rect x="19.0" y="451.50" width="7.0" height="1.5" fill="#9a6e58" opacity="0.85"/><rect x="27.0" y="451.50" width="4.0" height="1.5" fill="#9a6e58" opacity="0.85"/><rect x="32.0" y="451.50" width="2.0" height="1.5" fill="#9a6e58" opacity="0.85"/><rect x="0.0" y="453.65" width="5.0" height="1.5" fill="#94658f" opacity="0.85"/><rect x="6.0" y="453.65" width="3.0" height="1.5" fill="#6e9fbf" opacity="0.85"/><rect x="10.0" y="453.65" width="9.0" height="1.5" fill="#6e9fbf" opacity="0.85"/><rect x="20.0" y="453.65" width="6.0" height="1.5" fill="#6e9fbf" opacity="0.85"/><rect x="26.0" y="453.65" width="9.0" height="1.5" fill="#8a8a8a" opacity="0.85"/><rect x="36.0" y="453.65" width="4.0" height="1.5" fill="#8a8a8a" opacity="0.85"/><rect x="0.0" y="455.80" width="9.0" height="1.5" fill="#4f7a3f" opacity="0.85"/><rect x="10.0" y="455.80" width="3.0" height="1.5" fill="#4f7a3f" opacity="0.85"/><rect x="14.0" y="455.80" width="4.0" height="1.5" fill="#4f7a3f" opacity="0.85"/><rect x="19.0" y="455.80" width="7.0" height="1.5" fill="#4f7a3f" opacity="0.85"/><rect x="27.0" y="455.80" width="3.0" height="1.5" fill="#4f7a3f" opacity="0.85"/><rect x="31.0" y="455.80" width="3.0" height="1.5" fill="#4f7a3f" opacity="0.85"/><rect x="0.0" y="460.10" width="8.0" height="1.5" fill="#4f7a3f" opacity="0.85"/><rect x="9.0" y="460.10" width="4.0" height="1.5" fill="#4f7a3f" opacity="0.85"/><rect x="14.0" y="460.10" width="5.0" height="1.5" fill="#4f7a3f" opacity="0.85"/></svg>
<div style="position:absolute;left:1581px;top:165px;width:1px;height:1502px;background:#2b2b2b"></div>
<div style="position:absolute;left:1581px;top:164.5px;width:20px;height:65px;background:#1c1c1c;border-left:1.5px solid #141414;border-top:1.5px solid #141414"></div>
<div style="position:absolute;left:1582px;top:228px;width:19px;height:3.5px;background:#6b6b6b"></div>
<div style="position:absolute;left:0px;top:1667px;width:1601px;height:1px;background:#2b2b2b"></div>
<div style="position:absolute;left:0px;top:1668px;width:1601px;height:34px;background:#181818"></div>
<svg style="position:absolute;left:10px;top:1670px;" width="26" height="30" viewBox="0 0 26 30" fill="none"><path d="M4 10.7 L12.3 17.8 L4.5 25.2 M21.3 4 L13.5 10.7 L21.3 17.8" stroke="#cccccc" stroke-width="2"/></svg>
<svg style="position:absolute;left:64px;top:1671px;" width="24" height="28" viewBox="0 0 24 28" fill="none"><circle cx="6" cy="4.5" r="3.2" stroke="#cccccc" stroke-width="1.8"/><circle cx="6" cy="23" r="3.2" stroke="#cccccc" stroke-width="1.8"/><circle cx="18" cy="9" r="3.2" stroke="#cccccc" stroke-width="1.8"/><path d="M6 8 V20 M18 12 Q18 18 8 20" stroke="#cccccc" stroke-width="1.8"/></svg>
<div style="position:absolute;left:96px;top:1672.0px;height:26px;line-height:26px;font-family:'Liberation Sans',sans-serif;font-size:20px;color:#cccccc;white-space:pre;;transform:scaleX(0.96);transform-origin:0 50%">main</div>
<svg style="position:absolute;left:151px;top:1672px;" width="22" height="26" viewBox="0 0 22 26" fill="none"><path d="M4 14 A8 8 0 0 1 16 6 M18 12 A8 8 0 0 1 6 20" stroke="#cccccc" stroke-width="1.8"/><path d="M16 1.5 V6.5 H11" stroke="#cccccc" stroke-width="1.8"/><path d="M6 24.5 V19.5 H11" stroke="#cccccc" stroke-width="1.8"/></svg>
<div style="position:absolute;left:180px;top:1672.0px;height:26px;line-height:26px;font-family:'Liberation Sans',sans-serif;font-size:20px;color:#cccccc;white-space:pre;;transform:scaleX(0.94);transform-origin:0 50%">0↓ 1↑</div>
<svg style="position:absolute;left:253px;top:1673px;" width="26" height="26" viewBox="0 0 26 26" fill="none"><circle cx="13" cy="13" r="11" stroke="#cccccc" stroke-width="1.8"/><path d="M8.5 8.5 L17.5 17.5 M17.5 8.5 L8.5 17.5" stroke="#cccccc" stroke-width="1.8"/></svg>
<div style="position:absolute;left:286px;top:1672.0px;height:26px;line-height:26px;font-family:'Liberation Sans',sans-serif;font-size:20px;color:#cccccc;white-space:pre;">0</div>
<svg style="position:absolute;left:302px;top:1672px;" width="26" height="24" viewBox="0 0 26 24" fill="none"><path d="M13 2 L24 22 H2 Z" stroke="#cccccc" stroke-width="1.8" stroke-linejoin="round"/><path d="M13 9 V16" stroke="#cccccc" stroke-width="2"/><circle cx="13" cy="19" r="1.2" fill="#cccccc"/></svg>
<div style="position:absolute;left:334px;top:1672.0px;height:26px;line-height:26px;font-family:'Liberation Sans',sans-serif;font-size:20px;color:#cccccc;white-space:pre;">0</div>
<svg style="position:absolute;left:538px;top:1672px;" width="18" height="28" viewBox="0 0 18 28" fill="none"><circle cx="9" cy="14" r="5" stroke="#cccccc" stroke-width="1.8"/><path d="M9 1 V9 M9 19 V27" stroke="#cccccc" stroke-width="1.8"/></svg>
<div style="position:absolute;left:566px;top:1672.0px;height:26px;line-height:26px;font-family:'Liberation Sans',sans-serif;font-size:20px;color:#cccccc;white-space:pre;;transform:scaleX(0.968);transform-origin:0 50%">ShaiCreativeTechnologies (1 week ago)</div>
<div style="position:absolute;left:921px;top:1667px;width:53px;height:35px;background:#333338"></div>
<svg style="position:absolute;left:934px;top:1672px;" width="26" height="26" viewBox="0 0 26 26" fill="none"><circle cx="11" cy="11" r="8.5" stroke="#cccccc" stroke-width="1.8"/><path d="M17 17 L23 23 M7 11 H15" stroke="#cccccc" stroke-width="1.8"/></svg>
<div style="position:absolute;left:987px;top:1672.0px;height:26px;line-height:26px;font-family:'Liberation Sans',sans-serif;font-size:20px;color:#cccccc;white-space:pre;;transform:scaleX(0.943);transform-origin:0 50%">Ln 8, Col 22</div>
<div style="position:absolute;left:1117px;top:1672.0px;height:26px;line-height:26px;font-family:'Liberation Sans',sans-serif;font-size:20px;color:#cccccc;white-space:pre;;transform:scaleX(0.9);transform-origin:0 50%">Spaces: 2</div>
<div style="position:absolute;left:1225px;top:1672.0px;height:26px;line-height:26px;font-family:'Liberation Sans',sans-serif;font-size:20px;color:#cccccc;white-space:pre;;transform:scaleX(0.9);transform-origin:0 50%">UTF-8</div>
<div style="position:absolute;left:1304px;top:1672.0px;height:26px;line-height:26px;font-family:'Liberation Sans',sans-serif;font-size:20px;color:#cccccc;white-space:pre;;transform:scaleX(0.9);transform-origin:0 50%">LF</div>
<div style="position:absolute;left:1352px;top:1671.0px;height:26px;line-height:26px;font-family:'Liberation Sans',sans-serif;font-size:20px;color:#cccccc;white-space:pre;">{ }</div>
<div style="position:absolute;left:1386px;top:1672.0px;height:26px;line-height:26px;font-family:'Liberation Sans',sans-serif;font-size:20px;color:#cccccc;white-space:pre;;transform:scaleX(0.955);transform-origin:0 50%">Shell Script</div>
<svg style="position:absolute;left:1510px;top:1672px;" width="30" height="28" viewBox="0 0 30 28" fill="none"><path d="M4 12 Q4 3 10 3 Q14 3 15 7 Q16 3 20 3 Q26 3 26 12 V20 Q15 27 4 20 Z" fill="#cccccc"/><rect x="10" y="14" width="2.5" height="5" fill="#181818"/><rect x="17.5" y="14" width="2.5" height="5" fill="#181818"/></svg>
<svg style="position:absolute;left:1564px;top:1670px;" width="26" height="28" viewBox="0 0 26 28" fill="none"><path d="M5 19 V12 A8 8 0 0 1 21 12 V19 L23 21 H3 Z" stroke="#cccccc" stroke-width="1.8" stroke-linejoin="round"/><path d="M10 24 Q13 27 16 24" stroke="#cccccc" stroke-width="1.8"/></svg>
<div style="position:absolute;left:1601px;top:0px;width:4px;height:1703px;background:#787878"></div>
<div style="position:absolute;left:1605px;top:2px;width:1268px;height:100px;background:#d3e3fd"></div>
<div style="position:absolute;left:1605px;top:80px;width:1268px;height:161px;background:#ffffff;border-radius:16px 16px 0 0"></div>
<div style="position:absolute;left:1605px;top:240px;width:1268px;height:1.5px;background:#e3e3e3"></div>
<div style="position:absolute;left:1605px;top:241px;width:1268px;height:1461px;background:#faf9f5"></div>
<div style="position:absolute;left:1617px;top:12px;width:56px;height:56px;background:#e8effd;border-radius:16px"></div>
<svg style="position:absolute;left:1635px;top:32px;" width="20" height="14" viewBox="0 0 20 14" fill="none"><path d="M3 3 L10 10 L17 3" stroke="#1f1f1f" stroke-width="3"/></svg>
<svg style="position:absolute;left:1665px;top:12px" width="505" height="68" viewBox="0 0 505 68"><path d="M0 68 Q20 68 20 48 V20 Q20 0 40 0 H465 Q485 0 485 20 V48 Q485 68 505 68 Z" fill="#ffffff"/></svg>
<svg style="position:absolute;left:1701px;top:25px;" width="32" height="32" viewBox="0 0 32 32" fill="none"><path d="M16 16 L29.37 20.14" stroke="#d97757" stroke-width="2.6" stroke-linecap="round"/><path d="M16 16 L25.01 26.71" stroke="#d97757" stroke-width="2.6" stroke-linecap="round"/><path d="M16 16 L17.79 29.88" stroke="#d97757" stroke-width="2.6" stroke-linecap="round"/><path d="M16 16 L10.00 28.65" stroke="#d97757" stroke-width="2.6" stroke-linecap="round"/><path d="M16 16 L4.11 23.40" stroke="#d97757" stroke-width="2.6" stroke-linecap="round"/><path d="M16 16 L2.00 15.80" stroke="#d97757" stroke-width="2.6" stroke-linecap="round"/><path d="M16 16 L4.33 8.26" stroke="#d97757" stroke-width="2.6" stroke-linecap="round"/><path d="M16 16 L10.37 3.18" stroke="#d97757" stroke-width="2.6" stroke-linecap="round"/><path d="M16 16 L18.19 2.17" stroke="#d97757" stroke-width="2.6" stroke-linecap="round"/><path d="M16 16 L25.32 5.55" stroke="#d97757" stroke-width="2.6" stroke-linecap="round"/><path d="M16 16 L29.49 12.25" stroke="#d97757" stroke-width="2.6" stroke-linecap="round"/></svg>
<div style="position:absolute;left:1750px;top:26px;width:335px;height:32px;line-height:32px;font-family:'Liberation Sans',sans-serif;font-size:23px;color:#1f1f1f;white-space:pre;overflow:hidden;-webkit-mask-image:linear-gradient(90deg,#000 85%,transparent)">Refactoring email sending function</div>
<svg style="position:absolute;left:2106px;top:30px;" width="22" height="22" viewBox="0 0 22 22" fill="none"><path d="M3 3 L19 19 M19 3 L3 19" stroke="#1f1f1f" stroke-width="2.8"/></svg>
<svg style="position:absolute;left:2176px;top:29px;" width="24" height="24" viewBox="0 0 24 24" fill="none"><path d="M12 2 V22 M2 12 H22" stroke="#1f1f1f" stroke-width="2.8"/></svg>
<div style="position:absolute;left:2636px;top:40px;width:20px;height:2px;background:#1f1f1f"></div>
<div style="position:absolute;left:2727px;top:31px;width:19px;height:20px;border:2px solid #1f1f1f;border-radius:4px"></div>
<svg style="position:absolute;left:2818px;top:30px;" width="22" height="22" viewBox="0 0 22 22" fill="none"><path d="M2 2 L20 20 M20 2 L2 20" stroke="#1f1f1f" stroke-width="2"/></svg>
<svg style="position:absolute;left:1636px;top:113px;" width="26" height="26" viewBox="0 0 26 26" fill="none"><path d="M24 13 H4 M13 3 L3 13 L13 23" stroke="#474747" stroke-width="2.8"/></svg>
<svg style="position:absolute;left:1708px;top:113px;" width="26" height="26" viewBox="0 0 26 26" fill="none"><path d="M2 13 H22 M13 3 L23 13 L13 23" stroke="#a9a9a9" stroke-width="2.8"/></svg>
<svg style="position:absolute;left:1779px;top:112px;" width="30" height="30" viewBox="0 0 30 30" fill="none"><path d="M24.9 15.6 A10.9 10.9 0 1 1 22.3 6.9" stroke="#474747" stroke-width="2.7"/><path d="M26.3 2 V11.8 H16.5" stroke="#474747" stroke-width="2.7"/></svg>
<svg style="position:absolute;left:1852px;top:111px;" width="28" height="30" viewBox="0 0 28 30" fill="none"><path d="M3 28 V12 L14 2 L25 12 V28 H17 V19 H11 V28 Z" stroke="#474747" stroke-width="2.8" stroke-linejoin="miter"/></svg>
<div style="position:absolute;left:1917px;top:92px;width:453px;height:68px;background:#e9eef6;border-radius:34px"></div>
<div style="position:absolute;left:1927px;top:102px;width:48px;height:48px;background:#ffffff;border-radius:50%"></div>
<svg style="position:absolute;left:1937px;top:112px;" width="28" height="28" viewBox="0 0 28 28" fill="none"><circle cx="6" cy="7" r="3.2" stroke="#474747" stroke-width="2.4"/><path d="M12 7 H25" stroke="#474747" stroke-width="2.6"/><circle cx="22" cy="21" r="3.2" stroke="#474747" stroke-width="2.4"/><path d="M3 21 H16" stroke="#474747" stroke-width="2.6"/></svg>
<div style="position:absolute;left:1992px;top:108.0px;height:36px;line-height:36px;font-family:'Liberation Sans',sans-serif;font-size:27.4px;color:#1f1f1f;white-space:pre;;transform:scaleX(1.02);transform-origin:0 50%">claude.ai/chat/0...</div>
<svg style="position:absolute;left:2243px;top:110px;" width="34" height="32" viewBox="0 0 34 32" fill="none"><path d="M13 4 H4 Q2 4 2 6 V22 Q2 24 4 24 H28 Q30 24 30 22 V16" stroke="#474747" stroke-width="2.6"/><rect x="10" y="26" width="12" height="4" fill="#474747"/><path d="M22 2 V14 M16 9 L22 15 L28 9" stroke="#474747" stroke-width="2.6"/></svg>
<svg style="position:absolute;left:2305px;top:110px;" width="34" height="32" viewBox="0 0 34 32" fill="none"><path d="M17 3 L21 12.5 L31 13 L23.5 19.5 L26 29 L17 23.5 L8 29 L10.5 19.5 L3 13 L13 12.5 Z" stroke="#474747" stroke-width="2.6" stroke-linejoin="round"/></svg>
<svg style="position:absolute;left:2407px;top:108px;" width="36" height="34" viewBox="0 0 36 34" fill="none"><path d="M4 10 H12 V7 A4 4 0 0 1 20 7 V10 H28 V17 A4 4 0 0 1 28 25 V32 H4 V25 A4 4 0 0 0 4 17 Z" stroke="#474747" stroke-width="2.8" stroke-linejoin="round"/></svg>
<div style="position:absolute;left:2476px;top:110px;width:3px;height:32px;background:#d3e3fd;border-radius:2px"></div>
<div style="position:absolute;left:2511px;top:106px;width:40px;height:40px;background:#bf360c;border-radius:50%"></div>
<div style="position:absolute;left:2511px;top:111.5px;height:31px;line-height:31px;font-family:'Liberation Sans',sans-serif;font-size:24px;color:#ffffff;white-space:pre;width:40px;text-align:center">J</div>
<div style="position:absolute;left:2575px;top:92px;width:288px;height:68px;background:#d3e3fd;border-radius:34px"></div>
<div style="position:absolute;left:2599px;top:110.5px;height:31px;line-height:31px;font-family:'Liberation Sans',sans-serif;font-size:23.5px;color:#041e49;white-space:pre;;transform:scaleX(1.019);transform-origin:0 50%">Relaunch to update</div>
<svg style="position:absolute;left:2823px;top:110px;" width="16" height="34" viewBox="0 0 16 34" fill="none"><circle cx="8" cy="5" r="3.3" fill="#041e49"/><circle cx="8" cy="16" r="3.3" fill="#041e49"/><circle cx="8" cy="27" r="3.3" fill="#041e49"/></svg>
<svg style="position:absolute;left:1630px;top:186px;" width="30" height="30" viewBox="0 0 30 30" fill="none"><rect x="2" y="2" width="10" height="10" stroke="#474747" stroke-width="2.6"/><rect x="18" y="2" width="10" height="10" stroke="#474747" stroke-width="2.6"/><rect x="2" y="18" width="10" height="10" stroke="#474747" stroke-width="2.6"/><rect x="18" y="18" width="10" height="10" stroke="#474747" stroke-width="2.6"/></svg>
<div style="position:absolute;left:1689px;top:184px;width:3px;height:32px;background:#d3e3fd;border-radius:2px"></div>
<svg style="position:absolute;left:1724px;top:187px;" width="34" height="28" viewBox="0 0 34 28" fill="none"><path d="M2.5 4.5 Q2.5 3 4 3 H13 L16.5 6.5 H30 Q31.5 6.5 31.5 8 V23 Q31.5 24.5 30 24.5 H4 Q2.5 24.5 2.5 23 Z" stroke="#474747" stroke-width="2.8" stroke-linejoin="round"/></svg>
<div style="position:absolute;left:1773px;top:185.5px;height:29px;line-height:29px;font-family:'Liberation Sans',sans-serif;font-size:22px;color:#1f1f1f;white-space:pre;;transform:scaleX(1.0);transform-origin:0 50%">RockstarsIT</div>
<svg style="position:absolute;left:1928px;top:187px;" width="34" height="28" viewBox="0 0 34 28" fill="none"><path d="M2.5 4.5 Q2.5 3 4 3 H13 L16.5 6.5 H30 Q31.5 6.5 31.5 8 V23 Q31.5 24.5 30 24.5 H4 Q2.5 24.5 2.5 23 Z" stroke="#474747" stroke-width="2.8" stroke-linejoin="round"/></svg>
<div style="position:absolute;left:1977px;top:185.5px;height:29px;line-height:29px;font-family:'Liberation Sans',sans-serif;font-size:22px;color:#1f1f1f;white-space:pre;;transform:scaleX(1.0);transform-origin:0 50%">ShAi</div>
<svg style="position:absolute;left:2060px;top:187px;" width="34" height="28" viewBox="0 0 34 28" fill="none"><path d="M2.5 4.5 Q2.5 3 4 3 H13 L16.5 6.5 H30 Q31.5 6.5 31.5 8 V23 Q31.5 24.5 30 24.5 H4 Q2.5 24.5 2.5 23 Z" stroke="#474747" stroke-width="2.8" stroke-linejoin="round"/></svg>
<div style="position:absolute;left:2110px;top:185.5px;height:29px;line-height:29px;font-family:'Liberation Sans',sans-serif;font-size:22px;color:#1f1f1f;white-space:pre;;transform:scaleX(1.055);transform-origin:0 50%">AI Blog</div>
<svg style="position:absolute;left:2221px;top:187px;" width="34" height="28" viewBox="0 0 34 28" fill="none"><path d="M2.5 4.5 Q2.5 3 4 3 H13 L16.5 6.5 H30 Q31.5 6.5 31.5 8 V23 Q31.5 24.5 30 24.5 H4 Q2.5 24.5 2.5 23 Z" stroke="#474747" stroke-width="2.8" stroke-linejoin="round"/></svg>
<div style="position:absolute;left:2271px;top:185.5px;height:29px;line-height:29px;font-family:'Liberation Sans',sans-serif;font-size:22px;color:#1f1f1f;white-space:pre;;transform:scaleX(1.075);transform-origin:0 50%">ArXplorer</div>
<svg style="position:absolute;left:2646px;top:187px;" width="34" height="28" viewBox="0 0 34 28" fill="none"><path d="M2.5 4.5 Q2.5 3 4 3 H13 L16.5 6.5 H30 Q31.5 6.5 31.5 8 V23 Q31.5 24.5 30 24.5 H4 Q2.5 24.5 2.5 23 Z" stroke="#474747" stroke-width="2.8" stroke-linejoin="round"/></svg>
<div style="position:absolute;left:2695px;top:185.5px;height:29px;line-height:29px;font-family:'Liberation Sans',sans-serif;font-size:22px;color:#1f1f1f;white-space:pre;;transform:scaleX(1.075);transform-origin:0 50%">All Bookmarks</div>
<svg style="position:absolute;left:2556px;top:190px;" width="24" height="20" viewBox="0 0 24 20" fill="none"><path d="M3 3 L10 10 L3 17 M13 3 L20 10 L13 17" stroke="#474747" stroke-width="2.6"/></svg>
<div style="position:absolute;left:2611px;top:184px;width:3px;height:32px;background:#d3e3fd;border-radius:2px"></div>
<div style="position:absolute;left:2873px;top:0px;width:2px;height:1703px;background:#5b5b5b"></div>
<div style="position:absolute;left:0px;top:0px;width:2875px;height:2px;background:#6b6b6b"></div>
<div style="position:absolute;left:0px;top:1702px;width:2875px;height:1px;background:#5b5b5b"></div>
<div style="position:absolute;left:1815px;top:290px;width:1007px;height:544px;background:#f0eee6;border-radius:24px"></div>
<div style="position:absolute;left:1848px;top:352.8px;height:43px;line-height:43px;font-family:'Liberation Sans',sans-serif;font-size:33.42px;color:#141413;white-space:pre;">Can you help me to improve this UserManager?</div>
<div style="position:absolute;left:1848px;top:396.5px;height:45px;line-height:45px;font-family:'Liberation Sans',sans-serif;font-size:34.27px;color:#141413;white-space:pre;">it is currently still using the send_gmail_email funciton</div>
<div style="position:absolute;left:1848px;top:441.7px;height:44px;line-height:44px;font-family:'Liberation Sans',sans-serif;font-size:34.07px;color:#141413;white-space:pre;">everywhere, which takes the email_html_content as input. But</div>
<div style="position:absolute;left:1848px;top:485.9px;height:45px;line-height:45px;font-family:'Liberation Sans',sans-serif;font-size:34.27px;color:#141413;white-space:pre;">I recently wrote this new email template handler that I would</div>
<div style="position:absolute;left:1848px;top:531.1px;height:44px;line-height:44px;font-family:'Liberation Sans',sans-serif;font-size:33.57px;color:#141413;white-space:pre;">like to use here instead, so I do not have to specify the html</div>
<div style="position:absolute;left:1848px;top:575.8px;height:44px;line-height:44px;font-family:'Liberation Sans',sans-serif;font-size:34.0px;color:#141413;white-space:pre;">content of every email in the code, but can use template files</div>
<div style="position:absolute;left:1848px;top:620.0px;height:45px;line-height:45px;font-family:'Liberation Sans',sans-serif;font-size:34.96px;color:#141413;white-space:pre;">instead</div>
<div style="position:absolute;left:1847px;top:682px;width:944px;height:64px;overflow:hidden"><div style="position:absolute;left:0;top:0;width:944px;height:120px;background:#f5f4ef;border:1.5px solid #e2dfd6;border-radius:14px;box-sizing:border-box"></div><div style="position:absolute;left:30px;top:36.5px;height:36px;line-height:36px;font-family:'Liberation Mono',monospace;font-size:28px;color:#b3b1aa;white-space:pre">from __future__ import print_function</div><div style="position:absolute;left:0;top:0;width:944px;height:64px;background:linear-gradient(rgba(240,238,230,0) 45%,rgba(240,238,230,0.45) 80%,rgba(240,238,230,0.8))"></div></div>
<div style="position:absolute;left:1846px;top:760.0px;height:32px;line-height:32px;font-family:'Liberation Sans',sans-serif;font-size:24.6px;color:#8a8880;white-space:pre;;transform:scaleX(1.02);transform-origin:0 50%">Show more</div>
<div style="position:absolute;left:1605px;top:241px;width:1250px;height:97px;background:#faf9f5"></div>
<div style="position:absolute;left:1605px;top:338px;width:1250px;height:60px;background:linear-gradient(rgba(250,249,245,0.9),rgba(250,249,245,0.5) 25%,rgba(250,249,245,0.18) 55%,rgba(250,249,245,0))"></div>
<svg style="position:absolute;left:1636px;top:276px;" width="36" height="28" viewBox="0 0 36 28" fill="none"><rect x="2" y="2" width="32" height="24" rx="3" stroke="#3d3d3a" stroke-width="2.4"/><path d="M11 2 V26" stroke="#3d3d3a" stroke-width="2.4"/></svg>
<div style="position:absolute;left:1710px;top:270.5px;height:39px;line-height:39px;font-family:'Liberation Sans',sans-serif;font-size:30.1px;color:#3d3d3a;white-space:pre;">Refactoring email sending function</div>
<svg style="position:absolute;left:2208px;top:280px;" width="24" height="16" viewBox="0 0 24 16" fill="none"><path d="M3 3 L12 12 L21 3" stroke="#3d3d3a" stroke-width="2.2"/></svg>
<div style="position:absolute;left:2723px;top:259px;width:128px;height:63px;border:1.5px solid #d6d3ca;border-radius:14px;background:#faf9f5"></div>
<div style="position:absolute;left:2723px;top:273.0px;height:34px;line-height:34px;font-family:'Liberation Sans',sans-serif;font-size:26px;color:#141413;white-space:pre;width:128px;text-align:center">Share</div>
<div style="position:absolute;left:2859px;top:428px;width:12px;height:353px;background:#a8a69f;border-radius:6px"></div>
<div style="position:absolute;left:2491px;top:859.5px;height:31px;line-height:31px;font-family:'Liberation Sans',sans-serif;font-size:23.7px;color:#73726c;white-space:pre;;transform:scaleX(1.02);transform-origin:0 50%">Oct 1, 2025</div>
<svg style="position:absolute;left:2630px;top:845px;" width="200" height="60" viewBox="0 0 200 60" fill="none"><path d="M32.7 15.1 A14.8 14.8 0 1 1 20.4 19.6" stroke="#73726c" stroke-width="1.9"/><path d="M18 16.8 H26.2 V24.7" stroke="#73726c" stroke-width="1.9"/><path d="M97.8 14.8 L106.9 18.8 L99 39.5 L91 45.1 L89.4 36.7 Z M95.4 21.5 L104.1 25.1" stroke="#73726c" stroke-width="1.9" stroke-linejoin="round"/><rect x="147.6" y="16.4" width="20.8" height="20.7" rx="2.5" stroke="#73726c" stroke-width="1.9"/><path d="M168.4 22.7 H172 Q174.4 22.7 174.4 25 V41 Q174.4 43.5 172 43.5 H156 Q153.6 43.5 153.6 41 V37.1" stroke="#73726c" stroke-width="1.9"/></svg>
<div style="position:absolute;left:2013px;top:919.5px;width:208px;height:43.5px;background:#f0eee6;border:1.5px solid #e0ddd3;border-radius:9px"></div>
<div style="position:absolute;left:1653px;top:967px;width:364px;height:43.5px;background:#f0eee6;border:1.5px solid #e0ddd3;border-radius:9px"></div>
<div style="position:absolute;left:2022.7px;top:923.0px;height:37px;line-height:37px;font-family:'Liberation Mono',monospace;font-size:28.5px;color:#8b2323;white-space:pre;">UserManager</div>
<div style="position:absolute;left:1663.8px;top:970.5px;height:37px;line-height:37px;font-family:'Liberation Mono',monospace;font-size:28.5px;color:#8b2323;white-space:pre;">EmailTemplateHandler</div>
<div style="position:absolute;left:1653.6px;top:914.5px;height:47px;line-height:47px;font-family:'Liberation Serif',serif;font-size:36.3px;color:#141413;white-space:pre;">I'll help you refactor the</div>
<div style="position:absolute;left:2231px;top:914.5px;height:47px;line-height:47px;font-family:'Liberation Serif',serif;font-size:36.3px;color:#141413;white-space:pre;">to use your new</div>
<div style="position:absolute;left:2025px;top:963.0px;height:47px;line-height:47px;font-family:'Liberation Serif',serif;font-size:36.3px;color:#141413;white-space:pre;">with template files instead of inline HTML. This</div>
<div style="position:absolute;left:1653.6px;top:1010.0px;height:48px;line-height:48px;font-family:'Liberation Serif',serif;font-size:36.9px;color:#141413;white-space:pre;">will make your code much cleaner and more maintainable.</div>
<div style="position:absolute;left:1654px;top:1083.0px;height:48px;line-height:48px;font-family:'Liberation Serif',serif;font-size:37px;color:#141413;white-space:pre;">First, let's create the email templates you'll need:</div>
<div style="position:absolute;left:1637px;top:1147px;width:1186px;height:141px;border:1.5px solid #dedbd2;border-radius:24px;background:#faf9f5;overflow:hidden"></div>
<div style="position:absolute;left:1670px;top:1177.5px;height:39px;line-height:39px;font-family:'Liberation Sans',sans-serif;font-size:30.1px;color:#141413;white-space:pre;">verify_email.html</div>
<div style="position:absolute;left:1669px;top:1223.0px;height:32px;line-height:32px;font-family:'Liberation Sans',sans-serif;font-size:24.6px;color:#73726c;white-space:pre;;transform:scaleX(1.07);transform-origin:0 50%">Code</div>
<div style="position:absolute;left:1638px;top:1148px;width:1183px;height:139px;overflow:hidden;border-radius:24px"><div style="position:absolute;left:1039px;top:20px;width:102px;height:150px;background:#000;border-radius:16px;transform:rotate(5deg);transform-origin:0 0;padding:14px 0 0 16px;font-family:'Liberation Mono',monospace;font-size:10.5px;line-height:10px;color:#e8e8e8;white-space:pre"><div>&lt;!DOCTYPE</div><div>html&gt;</div><div>&lt;html&gt;</div><div>&lt;head&gt;</div><div>    &lt;style&gt;</div><div>&nbsp;</div><div>body, html</div><div>{{</div><div>&nbsp;</div><div>font-family:</div><div>Ari..</div></div></div>
<div style="position:absolute;left:1637px;top:1336px;width:1186px;height:141px;border:1.5px solid #dedbd2;border-radius:24px;background:#faf9f5;overflow:hidden"></div>
<div style="position:absolute;left:1670px;top:1366.5px;height:39px;line-height:39px;font-family:'Liberation Sans',sans-serif;font-size:30.1px;color:#141413;white-space:pre;">forgot_password.html</div>
<div style="position:absolute;left:1669px;top:1412.0px;height:32px;line-height:32px;font-family:'Liberation Sans',sans-serif;font-size:24.6px;color:#73726c;white-space:pre;;transform:scaleX(1.07);transform-origin:0 50%">Code</div>
<div style="position:absolute;left:1638px;top:1337px;width:1183px;height:139px;overflow:hidden;border-radius:24px"><div style="position:absolute;left:1039px;top:20px;width:102px;height:150px;background:#000;border-radius:16px;transform:rotate(5deg);transform-origin:0 0;padding:14px 0 0 16px;font-family:'Liberation Mono',monospace;font-size:10.5px;line-height:10px;color:#e8e8e8;white-space:pre"><div>&lt;!DOCTYPE</div><div>html&gt;</div><div>&lt;html&gt;</div><div>&lt;head&gt;</div><div>    &lt;style&gt;</div><div>&nbsp;</div><div>body, html</div><div>{{</div><div>&nbsp;</div><div>font-family:</div><div>Ari..</div></div></div>
<div style="position:absolute;left:2195px;top:1321px;width:70px;height:70px;background:#fbfbf9;border-radius:50%;box-shadow:0 3px 10px rgba(0,0,0,0.12)"></div>
<svg style="position:absolute;left:2216px;top:1341px;" width="28" height="30" viewBox="0 0 28 30" fill="none"><path d="M14 2 V27 M4 17 L14 27 L24 17" stroke="#1f1e1d" stroke-width="2.2"/></svg>
<div style="position:absolute;left:1620px;top:1432px;width:1220px;height:207px;background:#ffffff;border:1.5px solid #dfdcd3;border-radius:38px;box-shadow:0 6px 24px rgba(0,0,0,0.05)"></div>
<div style="position:absolute;left:1662px;top:1479.5px;height:41px;line-height:41px;font-family:'Liberation Sans',sans-serif;font-size:31.5px;color:#7b7a74;white-space:pre;;transform:scaleX(1.055);transform-origin:0 50%">Reply...</div>
<div style="position:absolute;left:2787px;top:1488px;width:13px;height:13px;background:#0f7b6c;border-radius:50%"></div>
<svg style="position:absolute;left:1672px;top:1561px;" width="30" height="30" viewBox="0 0 30 30" fill="none"><path d="M15 1 V29 M1 15 H29" stroke="#3d3d3a" stroke-width="2.2"/></svg>
<div style="position:absolute;left:2541px;top:1557.5px;height:37px;line-height:37px;font-family:'Liberation Sans',sans-serif;font-size:28.7px;color:#3d3d3a;white-space:pre;;transform:scaleX(1.02);transform-origin:0 50%">Sonnet 4.5</div>
<svg style="position:absolute;left:2692px;top:1568px;" width="20" height="14" viewBox="0 0 20 14" fill="none"><path d="M2 3 L10 11 L18 3" stroke="#73726c" stroke-width="1.8"/></svg>
<svg style="position:absolute;left:2755px;top:1559px;" width="44" height="34" viewBox="0 0 44 34" fill="none"><rect x="1" y="12.0" width="2.6" height="10" fill="#1f1e1d"/><rect x="8" y="7.0" width="2.6" height="20" fill="#1f1e1d"/><rect x="16" y="2.0" width="2.6" height="30" fill="#1f1e1d"/><rect x="23" y="7.0" width="2.6" height="20" fill="#1f1e1d"/><rect x="31" y="2.0" width="2.6" height="30" fill="#1f1e1d"/><rect x="38" y="12.0" width="2.6" height="10" fill="#1f1e1d"/></svg>
<div style="position:absolute;left:1845px;top:1655.0px;height:32px;line-height:32px;font-family:'Liberation Sans',sans-serif;font-size:24.75px;color:#73726c;white-space:pre;">Claude is AI and can make mistakes. Please double-check responses.</div>
<svg style="position:absolute;left:2857px;top:1684px;" width="16" height="12" viewBox="0 0 16 12" fill="none"><path d="M1 1 H15 L8 10 Z" fill="#a8a69f"/></svg>
</body></html>
